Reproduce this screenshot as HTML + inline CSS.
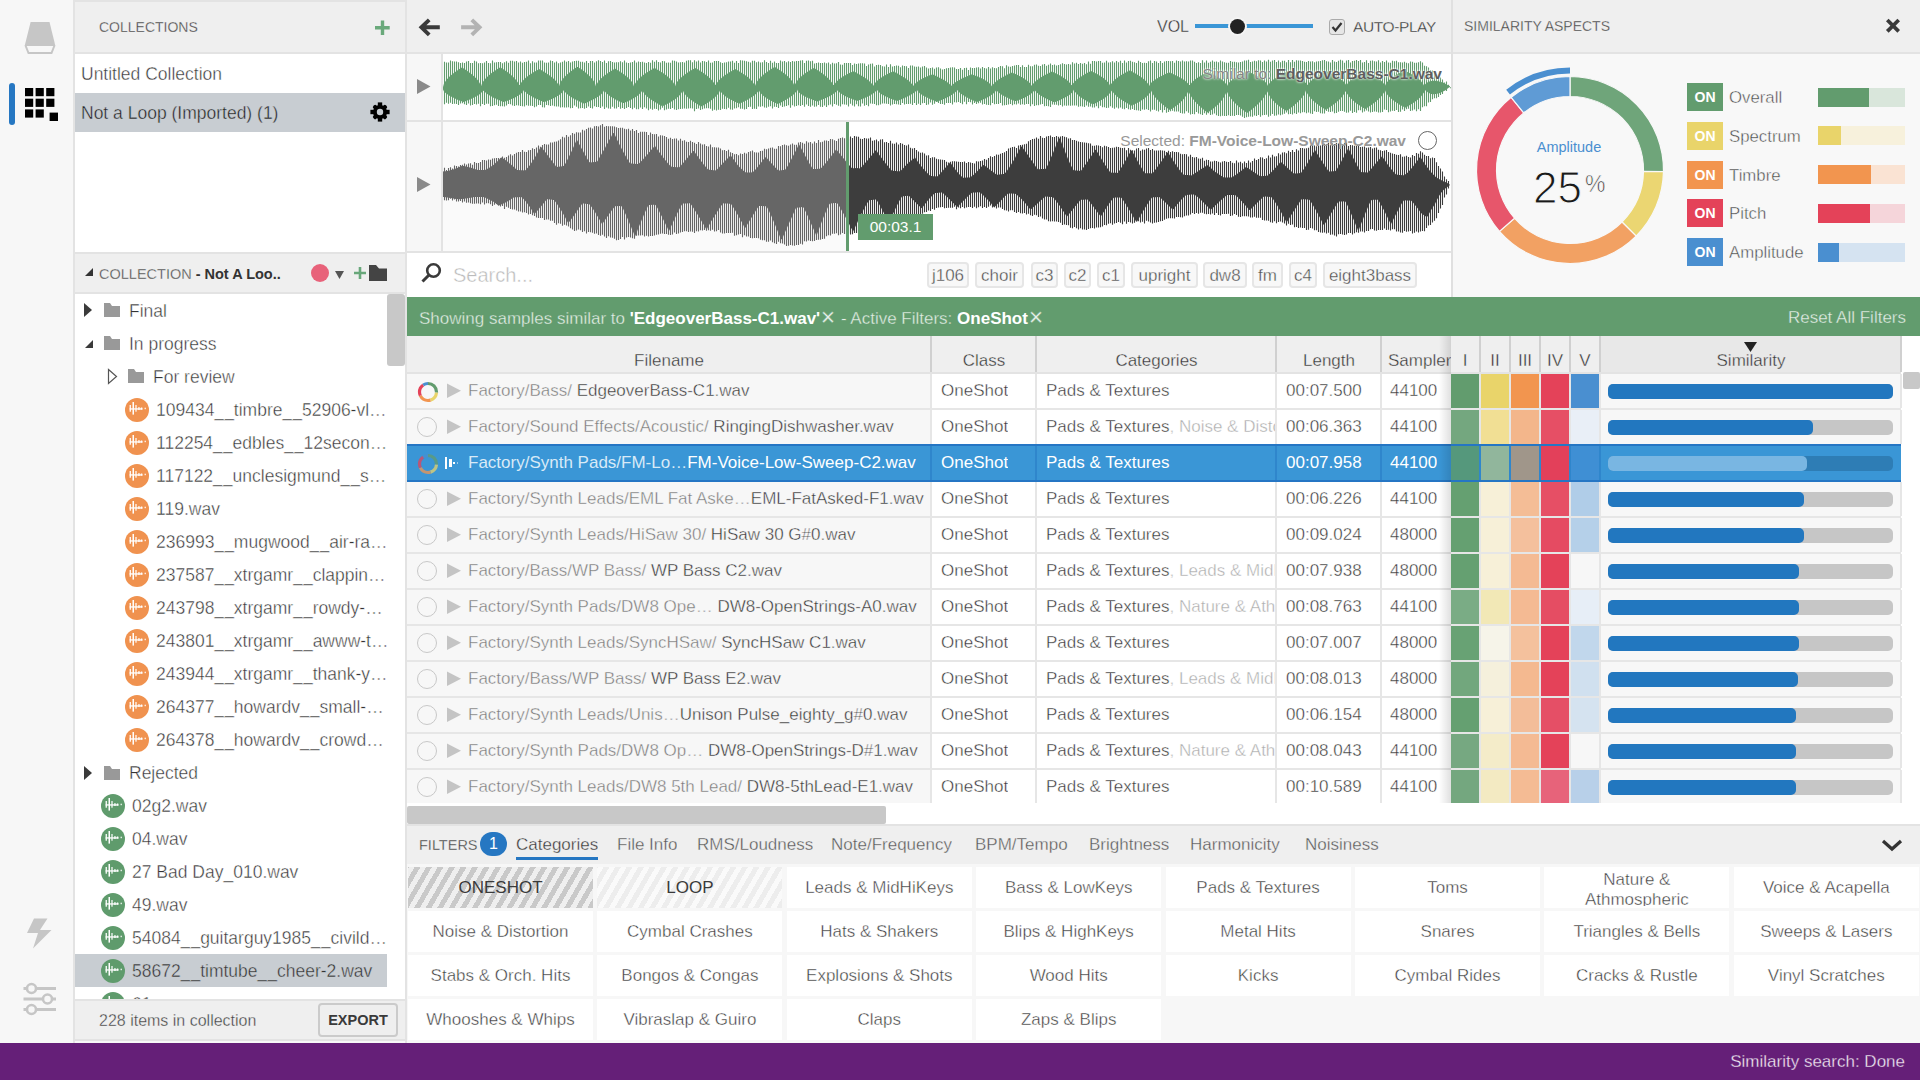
<!DOCTYPE html><html><head><meta charset="utf-8"><style>
*{box-sizing:border-box;margin:0;padding:0}
html,body{width:1920px;height:1080px;overflow:hidden;background:#f7f7f7;font-family:"Liberation Sans",sans-serif;color:#333}
.a{position:absolute}
.t{white-space:nowrap;overflow:hidden}
</style></head><body><div class="a" style="left:0;top:0;width:73px;height:1043px;background:#f7f7f7"></div>
<div class="a" style="left:73px;top:0;width:2px;height:1043px;background:#e3e3e3"></div>
<svg class="a" style="left:0;top:0" width="73" height="130"><path d="M30.6 22H49.5L55.4 46H24.6Z" fill="#c6c6c6"/><path d="M25.5 45.5L28.5 53H51.5L54.5 45.5" fill="none" stroke="#c6c6c6" stroke-width="2"/><rect x="9" y="83" width="6" height="42" rx="3" fill="#2677c2"/><rect x="25.0" y="88.0" width="8.2" height="8.2" fill="#000"/><rect x="35.6" y="88.0" width="8.2" height="8.2" fill="#000"/><rect x="46.2" y="88.0" width="8.2" height="8.2" fill="#000"/><rect x="25.0" y="98.7" width="8.2" height="8.2" fill="#000"/><rect x="35.6" y="98.7" width="8.2" height="8.2" fill="#000"/><rect x="46.2" y="98.7" width="8.2" height="8.2" fill="#000"/><rect x="25.0" y="109.4" width="8.2" height="8.2" fill="#000"/><rect x="35.6" y="109.4" width="8.2" height="8.2" fill="#000"/><rect x="49.6" y="112.6" width="8.4" height="8.4" fill="#000"/></svg>
<svg class="a" style="left:0;top:900px" width="73" height="130"><path d="M34 18.5H47.5L40 30H51.5L33 48.5L38 33H27Z" fill="#c6c6c6"/><g stroke="#c6c6c6" stroke-width="3" fill="none"><path d="M23.5 88.5H56M23.5 99H56M23.5 109.5H56"/></g><g fill="#f7f7f7" stroke="#c6c6c6" stroke-width="2.6"><circle cx="31.5" cy="88.5" r="4.5"/><circle cx="47.5" cy="99" r="4.5"/><circle cx="31.5" cy="109.5" r="4.5"/></g></svg>
<div class="a" style="left:75px;top:0;width:330px;height:2px;background:#e3e3e3"></div>
<div class="a" style="left:75px;top:2px;width:330px;height:50px;background:#efefef"></div>
<div class="a t" style="left:99px;top:2px;height:50px;line-height:50px;font-size:14px;color:#3a3a3a;-webkit-text-stroke:0.3px #efefef">COLLECTIONS</div>
<svg class="a" style="left:372px;top:18px" width="20" height="20"><path d="M10.5 2.5V17M3 9.8H17.7" stroke="#6aa97b" stroke-width="3.4"/></svg>
<div class="a" style="left:75px;top:52px;width:330px;height:2px;background:#e3e3e3"></div>
<div class="a" style="left:75px;top:54px;width:330px;height:198px;background:#fff"></div>
<div class="a t" style="left:81px;top:55px;height:39px;line-height:39px;font-size:17.5px;color:#333;-webkit-text-stroke:0.4px #fff">Untitled Collection</div>
<div class="a" style="left:75px;top:93px;width:330px;height:39px;background:#c8cdd2"></div>
<div class="a t" style="left:81px;top:94px;height:39px;line-height:39px;font-size:17.5px;color:#222;-webkit-text-stroke:0.4px #c8cdd2">Not a Loop (Imported) (1)</div>
<svg class="a" style="left:369px;top:101px" width="22" height="22" viewBox="0 0 22 22"><g transform="translate(11 11)" fill="#000"><rect x="-2.2" y="-9.6" width="4.4" height="5" transform="rotate(0)"/><rect x="-2.1" y="-8.9" width="4.2" height="5" rx="1.6" transform="rotate(45)"/><rect x="-2.2" y="-9.6" width="4.4" height="5" transform="rotate(90)"/><rect x="-2.1" y="-8.9" width="4.2" height="5" rx="1.6" transform="rotate(135)"/><rect x="-2.2" y="-9.6" width="4.4" height="5" transform="rotate(180)"/><rect x="-2.1" y="-8.9" width="4.2" height="5" rx="1.6" transform="rotate(225)"/><rect x="-2.2" y="-9.6" width="4.4" height="5" transform="rotate(270)"/><rect x="-2.1" y="-8.9" width="4.2" height="5" rx="1.6" transform="rotate(315)"/><circle r="7"/></g><circle cx="11" cy="11" r="3.2" fill="#c8cdd2"/></svg>
<div class="a" style="left:75px;top:252px;width:330px;height:2px;background:#e3e3e3"></div>
<div class="a" style="left:75px;top:254px;width:330px;height:38px;background:#efefef"></div>
<svg class="a" style="left:84px;top:267px" width="10" height="10"><path d="M9 1V9H1Z" fill="#333"/></svg>
<div class="a t" style="left:99px;top:255px;height:38px;line-height:38px;font-size:14.5px;color:#444;-webkit-text-stroke:0.3px #efefef">COLLECTION <b style="color:#333;-webkit-text-stroke:0">- Not A Loo..</b></div>
<svg class="a" style="left:300px;top:254px" width="105" height="38"><circle cx="20" cy="19" r="9" fill="#e8627a"/><path d="M35 17H44L39.5 25Z" fill="#555"/><path d="M60 13V25M54 19H66" stroke="#68a77a" stroke-width="2.6"/><path d="M69 11H76L79 14.5H87V27H69Z" fill="#444"/></svg>
<div class="a" style="left:75px;top:292px;width:330px;height:2px;background:#e3e3e3"></div>
<div class="a" style="left:75px;top:294px;width:330px;height:706px;background:#fff"></div>
<div class="a" style="left:387px;top:294px;width:18px;height:72px;background:#c8c8c8;border-radius:3px"></div>
<svg class="a" style="left:84px;top:303px" width="9" height="15"><path d="M0 0L8 7L0 14Z" fill="#3a3a3a"/></svg>
<svg class="a" style="left:104px;top:303px" width="16" height="14"><path d="M0 0H6L8 3H16V14H0Z" fill="#999"/></svg>
<div class="a t" style="left:129px;top:295px;height:33px;line-height:33px;font-size:17.5px;color:#333;-webkit-text-stroke:0.4px #fff">Final</div>
<svg class="a" style="left:84px;top:339px" width="10" height="10"><path d="M9 1V9H1Z" fill="#3a3a3a"/></svg>
<svg class="a" style="left:104px;top:336px" width="16" height="14"><path d="M0 0H6L8 3H16V14H0Z" fill="#999"/></svg>
<div class="a t" style="left:129px;top:328px;height:33px;line-height:33px;font-size:17.5px;color:#333;-webkit-text-stroke:0.4px #fff">In progress</div>
<svg class="a" style="left:107px;top:368px" width="11" height="17"><path d="M1.5 1.5L9.5 8.5L1.5 15.5Z" fill="none" stroke="#555" stroke-width="1.2"/></svg>
<svg class="a" style="left:128px;top:369px" width="16" height="14"><path d="M0 0H6L8 3H16V14H0Z" fill="#999"/></svg>
<div class="a t" style="left:153px;top:361px;height:33px;line-height:33px;font-size:17.5px;color:#333;-webkit-text-stroke:0.4px #fff">For review</div>
<svg class="a" style="left:125px;top:398px" width="24" height="24"><circle cx="12" cy="12" r="12" fill="#f0924f"/><g fill="#fff"><rect x="4.6" y="7" width="1.3" height="6.7"/><rect x="7.5" y="4" width="1.5" height="12.6"/><rect x="10.4" y="7" width="1.2" height="6.7"/><rect x="13.3" y="9.1" width="1.3" height="2.9"/><rect x="15.8" y="9.5" width="1.5" height="2.1"/><rect x="19.6" y="9.7" width="1.2" height="1.5"/><rect x="4.6" y="10.3" width="12.9" height="1.3"/></g></svg>
<div class="a t" style="left:156px;top:394px;width:232px;height:33px;line-height:33px;font-size:17.5px;color:#333;-webkit-text-stroke:0.4px #fff">109434__timbre__52906-vl…</div>
<svg class="a" style="left:125px;top:431px" width="24" height="24"><circle cx="12" cy="12" r="12" fill="#f0924f"/><g fill="#fff"><rect x="4.6" y="7" width="1.3" height="6.7"/><rect x="7.5" y="4" width="1.5" height="12.6"/><rect x="10.4" y="7" width="1.2" height="6.7"/><rect x="13.3" y="9.1" width="1.3" height="2.9"/><rect x="15.8" y="9.5" width="1.5" height="2.1"/><rect x="19.6" y="9.7" width="1.2" height="1.5"/><rect x="4.6" y="10.3" width="12.9" height="1.3"/></g></svg>
<div class="a t" style="left:156px;top:427px;width:232px;height:33px;line-height:33px;font-size:17.5px;color:#333;-webkit-text-stroke:0.4px #fff">112254__edbles__12secon…</div>
<svg class="a" style="left:125px;top:464px" width="24" height="24"><circle cx="12" cy="12" r="12" fill="#f0924f"/><g fill="#fff"><rect x="4.6" y="7" width="1.3" height="6.7"/><rect x="7.5" y="4" width="1.5" height="12.6"/><rect x="10.4" y="7" width="1.2" height="6.7"/><rect x="13.3" y="9.1" width="1.3" height="2.9"/><rect x="15.8" y="9.5" width="1.5" height="2.1"/><rect x="19.6" y="9.7" width="1.2" height="1.5"/><rect x="4.6" y="10.3" width="12.9" height="1.3"/></g></svg>
<div class="a t" style="left:156px;top:460px;width:232px;height:33px;line-height:33px;font-size:17.5px;color:#333;-webkit-text-stroke:0.4px #fff">117122__unclesigmund__s…</div>
<svg class="a" style="left:125px;top:497px" width="24" height="24"><circle cx="12" cy="12" r="12" fill="#f0924f"/><g fill="#fff"><rect x="4.6" y="7" width="1.3" height="6.7"/><rect x="7.5" y="4" width="1.5" height="12.6"/><rect x="10.4" y="7" width="1.2" height="6.7"/><rect x="13.3" y="9.1" width="1.3" height="2.9"/><rect x="15.8" y="9.5" width="1.5" height="2.1"/><rect x="19.6" y="9.7" width="1.2" height="1.5"/><rect x="4.6" y="10.3" width="12.9" height="1.3"/></g></svg>
<div class="a t" style="left:156px;top:493px;width:232px;height:33px;line-height:33px;font-size:17.5px;color:#333;-webkit-text-stroke:0.4px #fff">119.wav</div>
<svg class="a" style="left:125px;top:530px" width="24" height="24"><circle cx="12" cy="12" r="12" fill="#f0924f"/><g fill="#fff"><rect x="4.6" y="7" width="1.3" height="6.7"/><rect x="7.5" y="4" width="1.5" height="12.6"/><rect x="10.4" y="7" width="1.2" height="6.7"/><rect x="13.3" y="9.1" width="1.3" height="2.9"/><rect x="15.8" y="9.5" width="1.5" height="2.1"/><rect x="19.6" y="9.7" width="1.2" height="1.5"/><rect x="4.6" y="10.3" width="12.9" height="1.3"/></g></svg>
<div class="a t" style="left:156px;top:526px;width:232px;height:33px;line-height:33px;font-size:17.5px;color:#333;-webkit-text-stroke:0.4px #fff">236993__mugwood__air-ra…</div>
<svg class="a" style="left:125px;top:563px" width="24" height="24"><circle cx="12" cy="12" r="12" fill="#f0924f"/><g fill="#fff"><rect x="4.6" y="7" width="1.3" height="6.7"/><rect x="7.5" y="4" width="1.5" height="12.6"/><rect x="10.4" y="7" width="1.2" height="6.7"/><rect x="13.3" y="9.1" width="1.3" height="2.9"/><rect x="15.8" y="9.5" width="1.5" height="2.1"/><rect x="19.6" y="9.7" width="1.2" height="1.5"/><rect x="4.6" y="10.3" width="12.9" height="1.3"/></g></svg>
<div class="a t" style="left:156px;top:559px;width:232px;height:33px;line-height:33px;font-size:17.5px;color:#333;-webkit-text-stroke:0.4px #fff">237587__xtrgamr__clappin…</div>
<svg class="a" style="left:125px;top:596px" width="24" height="24"><circle cx="12" cy="12" r="12" fill="#f0924f"/><g fill="#fff"><rect x="4.6" y="7" width="1.3" height="6.7"/><rect x="7.5" y="4" width="1.5" height="12.6"/><rect x="10.4" y="7" width="1.2" height="6.7"/><rect x="13.3" y="9.1" width="1.3" height="2.9"/><rect x="15.8" y="9.5" width="1.5" height="2.1"/><rect x="19.6" y="9.7" width="1.2" height="1.5"/><rect x="4.6" y="10.3" width="12.9" height="1.3"/></g></svg>
<div class="a t" style="left:156px;top:592px;width:232px;height:33px;line-height:33px;font-size:17.5px;color:#333;-webkit-text-stroke:0.4px #fff">243798__xtrgamr__rowdy-…</div>
<svg class="a" style="left:125px;top:629px" width="24" height="24"><circle cx="12" cy="12" r="12" fill="#f0924f"/><g fill="#fff"><rect x="4.6" y="7" width="1.3" height="6.7"/><rect x="7.5" y="4" width="1.5" height="12.6"/><rect x="10.4" y="7" width="1.2" height="6.7"/><rect x="13.3" y="9.1" width="1.3" height="2.9"/><rect x="15.8" y="9.5" width="1.5" height="2.1"/><rect x="19.6" y="9.7" width="1.2" height="1.5"/><rect x="4.6" y="10.3" width="12.9" height="1.3"/></g></svg>
<div class="a t" style="left:156px;top:625px;width:232px;height:33px;line-height:33px;font-size:17.5px;color:#333;-webkit-text-stroke:0.4px #fff">243801__xtrgamr__awww-t…</div>
<svg class="a" style="left:125px;top:662px" width="24" height="24"><circle cx="12" cy="12" r="12" fill="#f0924f"/><g fill="#fff"><rect x="4.6" y="7" width="1.3" height="6.7"/><rect x="7.5" y="4" width="1.5" height="12.6"/><rect x="10.4" y="7" width="1.2" height="6.7"/><rect x="13.3" y="9.1" width="1.3" height="2.9"/><rect x="15.8" y="9.5" width="1.5" height="2.1"/><rect x="19.6" y="9.7" width="1.2" height="1.5"/><rect x="4.6" y="10.3" width="12.9" height="1.3"/></g></svg>
<div class="a t" style="left:156px;top:658px;width:232px;height:33px;line-height:33px;font-size:17.5px;color:#333;-webkit-text-stroke:0.4px #fff">243944__xtrgamr__thank-y…</div>
<svg class="a" style="left:125px;top:695px" width="24" height="24"><circle cx="12" cy="12" r="12" fill="#f0924f"/><g fill="#fff"><rect x="4.6" y="7" width="1.3" height="6.7"/><rect x="7.5" y="4" width="1.5" height="12.6"/><rect x="10.4" y="7" width="1.2" height="6.7"/><rect x="13.3" y="9.1" width="1.3" height="2.9"/><rect x="15.8" y="9.5" width="1.5" height="2.1"/><rect x="19.6" y="9.7" width="1.2" height="1.5"/><rect x="4.6" y="10.3" width="12.9" height="1.3"/></g></svg>
<div class="a t" style="left:156px;top:691px;width:232px;height:33px;line-height:33px;font-size:17.5px;color:#333;-webkit-text-stroke:0.4px #fff">264377__howardv__small-…</div>
<svg class="a" style="left:125px;top:728px" width="24" height="24"><circle cx="12" cy="12" r="12" fill="#f0924f"/><g fill="#fff"><rect x="4.6" y="7" width="1.3" height="6.7"/><rect x="7.5" y="4" width="1.5" height="12.6"/><rect x="10.4" y="7" width="1.2" height="6.7"/><rect x="13.3" y="9.1" width="1.3" height="2.9"/><rect x="15.8" y="9.5" width="1.5" height="2.1"/><rect x="19.6" y="9.7" width="1.2" height="1.5"/><rect x="4.6" y="10.3" width="12.9" height="1.3"/></g></svg>
<div class="a t" style="left:156px;top:724px;width:232px;height:33px;line-height:33px;font-size:17.5px;color:#333;-webkit-text-stroke:0.4px #fff">264378__howardv__crowd…</div>
<svg class="a" style="left:84px;top:766px" width="9" height="15"><path d="M0 0L8 7L0 14Z" fill="#3a3a3a"/></svg>
<svg class="a" style="left:104px;top:766px" width="16" height="14"><path d="M0 0H6L8 3H16V14H0Z" fill="#999"/></svg>
<div class="a t" style="left:129px;top:757px;height:33px;line-height:33px;font-size:17.5px;color:#333;-webkit-text-stroke:0.4px #fff">Rejected</div>
<svg class="a" style="left:101px;top:794px" width="24" height="24"><circle cx="12" cy="12" r="12" fill="#5f9b6c"/><g fill="#fff"><rect x="4.6" y="7" width="1.3" height="6.7"/><rect x="7.5" y="4" width="1.5" height="12.6"/><rect x="10.4" y="7" width="1.2" height="6.7"/><rect x="13.3" y="9.1" width="1.3" height="2.9"/><rect x="15.8" y="9.5" width="1.5" height="2.1"/><rect x="19.6" y="9.7" width="1.2" height="1.5"/><rect x="4.6" y="10.3" width="12.9" height="1.3"/></g></svg>
<div class="a t" style="left:132px;top:790px;width:256px;height:33px;line-height:33px;font-size:17.5px;color:#333;-webkit-text-stroke:0.4px #fff">02g2.wav</div>
<svg class="a" style="left:101px;top:827px" width="24" height="24"><circle cx="12" cy="12" r="12" fill="#5f9b6c"/><g fill="#fff"><rect x="4.6" y="7" width="1.3" height="6.7"/><rect x="7.5" y="4" width="1.5" height="12.6"/><rect x="10.4" y="7" width="1.2" height="6.7"/><rect x="13.3" y="9.1" width="1.3" height="2.9"/><rect x="15.8" y="9.5" width="1.5" height="2.1"/><rect x="19.6" y="9.7" width="1.2" height="1.5"/><rect x="4.6" y="10.3" width="12.9" height="1.3"/></g></svg>
<div class="a t" style="left:132px;top:823px;width:256px;height:33px;line-height:33px;font-size:17.5px;color:#333;-webkit-text-stroke:0.4px #fff">04.wav</div>
<svg class="a" style="left:101px;top:860px" width="24" height="24"><circle cx="12" cy="12" r="12" fill="#5f9b6c"/><g fill="#fff"><rect x="4.6" y="7" width="1.3" height="6.7"/><rect x="7.5" y="4" width="1.5" height="12.6"/><rect x="10.4" y="7" width="1.2" height="6.7"/><rect x="13.3" y="9.1" width="1.3" height="2.9"/><rect x="15.8" y="9.5" width="1.5" height="2.1"/><rect x="19.6" y="9.7" width="1.2" height="1.5"/><rect x="4.6" y="10.3" width="12.9" height="1.3"/></g></svg>
<div class="a t" style="left:132px;top:856px;width:256px;height:33px;line-height:33px;font-size:17.5px;color:#333;-webkit-text-stroke:0.4px #fff">27 Bad Day_010.wav</div>
<svg class="a" style="left:101px;top:893px" width="24" height="24"><circle cx="12" cy="12" r="12" fill="#5f9b6c"/><g fill="#fff"><rect x="4.6" y="7" width="1.3" height="6.7"/><rect x="7.5" y="4" width="1.5" height="12.6"/><rect x="10.4" y="7" width="1.2" height="6.7"/><rect x="13.3" y="9.1" width="1.3" height="2.9"/><rect x="15.8" y="9.5" width="1.5" height="2.1"/><rect x="19.6" y="9.7" width="1.2" height="1.5"/><rect x="4.6" y="10.3" width="12.9" height="1.3"/></g></svg>
<div class="a t" style="left:132px;top:889px;width:256px;height:33px;line-height:33px;font-size:17.5px;color:#333;-webkit-text-stroke:0.4px #fff">49.wav</div>
<svg class="a" style="left:101px;top:926px" width="24" height="24"><circle cx="12" cy="12" r="12" fill="#5f9b6c"/><g fill="#fff"><rect x="4.6" y="7" width="1.3" height="6.7"/><rect x="7.5" y="4" width="1.5" height="12.6"/><rect x="10.4" y="7" width="1.2" height="6.7"/><rect x="13.3" y="9.1" width="1.3" height="2.9"/><rect x="15.8" y="9.5" width="1.5" height="2.1"/><rect x="19.6" y="9.7" width="1.2" height="1.5"/><rect x="4.6" y="10.3" width="12.9" height="1.3"/></g></svg>
<div class="a t" style="left:132px;top:922px;width:256px;height:33px;line-height:33px;font-size:17.5px;color:#333;-webkit-text-stroke:0.4px #fff">54084__guitarguy1985__civild…</div>
<div class="a" style="left:75px;top:954px;width:312px;height:33px;background:#c8cdd2"></div>
<svg class="a" style="left:101px;top:959px" width="24" height="24"><circle cx="12" cy="12" r="12" fill="#5f9b6c"/><g fill="#fff"><rect x="4.6" y="7" width="1.3" height="6.7"/><rect x="7.5" y="4" width="1.5" height="12.6"/><rect x="10.4" y="7" width="1.2" height="6.7"/><rect x="13.3" y="9.1" width="1.3" height="2.9"/><rect x="15.8" y="9.5" width="1.5" height="2.1"/><rect x="19.6" y="9.7" width="1.2" height="1.5"/><rect x="4.6" y="10.3" width="12.9" height="1.3"/></g></svg>
<div class="a t" style="left:132px;top:955px;width:256px;height:33px;line-height:33px;font-size:17.5px;color:#333;-webkit-text-stroke:0.4px #c8cdd2">58672__timtube__cheer-2.wav</div>
<svg class="a" style="left:101px;top:992px" width="24" height="24"><circle cx="12" cy="12" r="12" fill="#5f9b6c"/><g fill="#fff"><rect x="4.6" y="7" width="1.3" height="6.7"/><rect x="7.5" y="4" width="1.5" height="12.6"/><rect x="10.4" y="7" width="1.2" height="6.7"/><rect x="13.3" y="9.1" width="1.3" height="2.9"/><rect x="15.8" y="9.5" width="1.5" height="2.1"/><rect x="19.6" y="9.7" width="1.2" height="1.5"/><rect x="4.6" y="10.3" width="12.9" height="1.3"/></g></svg>
<div class="a t" style="left:132px;top:988px;width:256px;height:33px;line-height:33px;font-size:17.5px;color:#333;-webkit-text-stroke:0.4px #fff">61.wav</div>
<div class="a" style="left:75px;top:999px;width:330px;height:2px;background:#e3e3e3"></div>
<div class="a" style="left:75px;top:1001px;width:330px;height:38px;background:#efefef"></div>
<div class="a" style="left:75px;top:1039px;width:330px;height:2px;background:#e3e3e3"></div>
<div class="a t" style="left:99px;top:1001px;height:40px;line-height:40px;font-size:16px;color:#3a3a3a;-webkit-text-stroke:0.35px #efefef">228 items in collection</div>
<div class="a" style="left:318px;top:1003px;width:80px;height:34px;border:2px solid #cbcbcb;background:#efefef;border-radius:4px;font-size:14.5px;font-weight:bold;color:#3a3a3a;line-height:31px;text-align:center">EXPORT</div>
<div class="a" style="left:405px;top:0;width:2px;height:1043px;background:#e3e3e3"></div>
<div class="a" style="left:407px;top:0;width:1044px;height:52px;background:#efefef"></div>
<svg class="a" style="left:415px;top:12.5px" width="75" height="30"><path d="M24.8 14.3H8M14.2 6.8L6.4 14.3L14.2 21.8" fill="none" stroke="#3a3a3a" stroke-width="3.9"/><path d="M46.1 14.3H63M56.8 6.8L64.6 14.3L56.8 21.8" fill="none" stroke="#b3b3b3" stroke-width="3.9"/></svg>
<div class="a t" style="left:1157px;top:1px;height:52px;line-height:52px;font-size:16px;color:#333;-webkit-text-stroke:0.3px #efefef">VOL</div>
<div class="a" style="left:1195px;top:24px;width:118px;height:4px;background:#3a96d6"></div>
<div class="a" style="left:1230px;top:19px;width:15px;height:15px;border-radius:50%;background:#222;box-shadow:0 0 0 2px #f4f4f4"></div>
<div class="a" style="left:1329px;top:19px;width:16px;height:16px;border:1px solid #aaa;border-radius:3px;background:#e6e6e6"></div>
<svg class="a" style="left:1329px;top:19px" width="16" height="16"><path d="M3.5 8L6.5 11.5L12.5 4" fill="none" stroke="#333" stroke-width="2.2"/></svg>
<div class="a t" style="left:1353px;top:1px;height:52px;line-height:52px;font-size:15.5px;letter-spacing:-0.4px;color:#333;-webkit-text-stroke:0.3px #efefef">AUTO-PLAY</div>
<div class="a" style="left:407px;top:52px;width:1044px;height:2px;background:#e3e3e3"></div>
<div class="a" style="left:407px;top:54px;width:34px;height:197px;background:#f7f7f7"></div>
<div class="a" style="left:441px;top:54px;width:2px;height:197px;background:#e3e3e3"></div>
<div class="a" style="left:443px;top:54px;width:1008px;height:66px;background:#fff"></div>
<div class="a" style="left:407px;top:120px;width:1044px;height:2px;background:#e3e3e3"></div>
<div class="a" style="left:443px;top:122px;width:404px;height:129px;background:#fafafa"></div>
<div class="a" style="left:847px;top:122px;width:604px;height:129px;background:#fff"></div>
<svg class="a" style="left:417px;top:79px" width="14" height="15"><path d="M0 0L13.5 7.5L0 15Z" fill="#8a8a8a"/></svg>
<svg class="a" style="left:417px;top:177px" width="14" height="15"><path d="M0 0L13.5 7.5L0 15Z" fill="#8a8a8a"/></svg>
<svg class="a" style="left:0;top:0" width="1920" height="260"><defs><clipPath id="cl"><rect x="443" y="120" width="404" height="140"/></clipPath><clipPath id="cr"><rect x="847" y="120" width="610" height="140"/></clipPath></defs><path d="M444.5 61.7V104.3M446.5 62.4V102.8M448.5 62.5V103.7M450.5 60.6V102.8M452.5 61.2V104.1M454.5 61.6V103.7M456.5 61.4V103.9M458.5 62.2V105.1M460.5 62.9V103.6M462.5 62.6V103.2M464.5 63.0V104.3M466.5 61.5V105.0M468.5 61.1V103.4M470.5 62.9V105.6M472.5 62.9V105.1M474.5 60.8V104.1M476.5 61.5V104.5M478.5 63.2V103.8M480.5 63.1V106.3M482.5 63.2V104.1M484.5 62.4V105.0M486.5 61.1V103.7M488.5 62.9V103.7M490.5 63.2V106.3M492.5 60.5V105.9M494.5 62.4V105.3M496.5 62.3V104.8M498.5 61.9V106.1M500.5 62.0V106.3M502.5 63.2V106.3M504.5 62.3V106.5M506.5 61.2V105.6M508.5 62.7V104.0M510.5 60.8V104.3M512.5 60.7V105.6M514.5 61.5V106.1M516.5 61.0V105.2M518.5 62.5V105.4M520.5 61.5V106.1M522.5 62.8V106.2M524.5 61.9V106.5M526.5 61.8V105.2M528.5 60.6V105.8M530.5 63.2V105.7M532.5 61.2V106.0M534.5 62.4V107.3M536.5 62.6V106.4M538.5 60.4V105.1M540.5 60.6V105.1M542.5 60.4V107.3M544.5 62.4V107.4M546.5 62.8V105.0M548.5 62.5V105.3M550.5 60.5V106.0M552.5 61.1V105.6M554.5 62.6V106.3M556.5 61.4V106.4M558.5 63.3V106.4M560.5 62.4V107.5M562.5 61.8V107.2M564.5 60.6V107.6M566.5 61.7V107.5M568.5 60.9V107.2M570.5 62.4V108.3M572.5 61.6V108.1M574.5 61.0V105.6M576.5 60.8V106.7M578.5 60.7V108.6M580.5 61.7V108.2M582.5 61.7V107.9M584.5 62.5V108.7M586.5 61.0V108.0M588.5 62.9V106.6M590.5 60.9V108.0M592.5 61.1V108.6M594.5 62.5V106.3M596.5 61.2V107.1M598.5 60.3V107.1M600.5 60.9V107.9M602.5 61.9V106.6M604.5 60.6V108.9M606.5 63.1V107.4M608.5 61.2V108.4M610.5 61.1V108.7M612.5 61.9V106.8M614.5 62.4V108.5M616.5 62.2V108.4M618.5 62.2V107.0M620.5 61.2V108.8M622.5 62.2V108.1M624.5 60.5V108.9M626.5 62.5V107.9M628.5 62.9V106.9M630.5 62.5V107.9M632.5 61.9V109.2M634.5 60.6V107.8M636.5 62.6V109.2M638.5 61.5V109.3M640.5 62.0V107.5M642.5 61.8V108.9M644.5 62.6V107.3M646.5 63.1V108.4M648.5 62.1V110.2M650.5 62.8V108.8M652.5 60.2V109.7M654.5 61.8V108.8M656.5 60.3V109.0M658.5 61.9V110.4M660.5 62.6V109.4M662.5 60.9V107.8M664.5 61.2V110.3M666.5 62.8V109.5M668.5 62.4V108.8M670.5 62.8V109.1M672.5 60.5V108.0M674.5 60.7V109.4M676.5 61.4V109.9M678.5 62.4V109.2M680.5 62.3V109.1M682.5 62.0V108.8M684.5 62.5V108.6M686.5 60.8V108.7M688.5 60.2V108.6M690.5 60.3V108.3M692.5 62.3V108.5M694.5 60.2V111.3M696.5 61.6V108.9M698.5 60.5V108.6M700.5 62.5V109.9M702.5 60.9V109.2M704.5 61.2V108.6M706.5 61.9V108.3M708.5 60.6V108.3M710.5 62.8V108.7M712.5 62.5V110.8M714.5 61.0V109.8M716.5 61.0V110.4M718.5 61.1V109.8M720.5 62.3V109.9M722.5 62.9V108.7M724.5 62.4V109.0M726.5 62.3V109.3M728.5 61.6V107.8M730.5 61.5V109.6M732.5 60.8V109.8M734.5 62.7V108.5M736.5 61.1V108.2M738.5 63.0V107.3M740.5 60.3V108.8M742.5 60.5V108.8M744.5 60.8V109.6M746.5 61.3V109.0M748.5 61.7V107.1M750.5 62.5V106.8M752.5 60.7V109.1M754.5 60.7V108.8M756.5 62.3V108.9M758.5 61.4V106.5M760.5 62.5V106.7M762.5 62.2V106.3M764.5 60.3V107.6M766.5 62.0V107.7M768.5 63.0V106.8M770.5 60.7V106.2M772.5 62.7V108.6M774.5 61.6V106.8M776.5 62.9V106.9M778.5 63.0V108.1M780.5 60.6V105.6M782.5 61.6V107.1M784.5 60.9V106.4M786.5 62.3V105.9M788.5 61.3V105.2M790.5 62.1V107.8M792.5 61.1V105.3M794.5 61.6V106.4M796.5 60.9V106.0M798.5 60.9V105.3M800.5 60.4V106.1M802.5 60.2V105.1M804.5 63.1V106.8M806.5 60.8V104.4M808.5 60.5V106.0M810.5 61.2V106.7M812.5 60.7V105.6M814.5 63.4V106.7M816.5 63.0V106.6M818.5 62.5V105.0M820.5 62.9V106.8M822.5 63.0V106.9M824.5 62.4V105.6M826.5 63.3V107.0M828.5 62.4V105.3M830.5 64.3V104.4M832.5 62.7V106.5M834.5 63.4V104.0M836.5 63.2V104.7M838.5 62.1V105.8M840.5 64.6V106.6M842.5 64.7V104.3M844.5 63.0V104.5M846.5 63.1V104.8M848.5 63.0V106.5M850.5 62.9V103.8M852.5 65.0V105.4M854.5 63.4V106.4M856.5 64.1V104.3M858.5 63.4V106.3M860.5 63.3V106.4M862.5 63.3V103.5M864.5 63.6V105.8M866.5 66.0V104.9M868.5 64.4V106.2M870.5 63.7V103.6M872.5 63.6V103.7M874.5 66.4V103.9M876.5 65.0V105.2M878.5 64.7V105.3M880.5 65.1V104.6M882.5 66.3V103.6M884.5 66.5V103.5M886.5 64.5V103.7M888.5 67.1V104.1M890.5 64.3V105.4M892.5 66.4V104.4M894.5 66.0V104.1M896.5 65.5V104.2M898.5 65.7V104.5M900.5 67.3V105.1M902.5 65.6V103.0M904.5 65.9V104.5M906.5 66.3V103.9M908.5 68.0V104.1M910.5 65.4V103.7M912.5 65.4V105.0M914.5 66.4V103.0M916.5 66.7V104.9M918.5 66.4V103.8M920.5 67.6V104.9M922.5 66.4V103.3M924.5 66.1V103.1M926.5 67.5V104.9M928.5 68.5V104.6M930.5 68.1V102.4M932.5 67.6V104.7M934.5 68.8V103.8M936.5 67.4V102.0M938.5 67.3V103.1M940.5 68.4V103.9M942.5 69.6V103.9M944.5 69.0V104.8M946.5 68.3V103.0M948.5 67.9V103.0M950.5 67.6V102.9M952.5 67.2V104.5M954.5 67.5V102.3M956.5 68.9V102.4M958.5 69.0V102.1M960.5 67.9V103.1M962.5 69.7V104.3M964.5 67.9V101.8M966.5 67.8V104.3M968.5 69.9V102.1M970.5 67.6V102.3M972.5 68.1V104.4M974.5 68.0V103.1M976.5 67.5V104.0M978.5 67.3V103.3M980.5 68.6V102.7M982.5 66.9V104.4M984.5 68.1V104.1M986.5 68.6V104.8M988.5 66.9V105.0M990.5 68.5V105.3M992.5 67.3V103.0M994.5 68.0V104.2M996.5 68.3V104.0M998.5 66.9V104.1M1000.5 66.1V102.9M1002.5 66.3V105.4M1004.5 68.3V105.3M1006.5 65.2V104.9M1008.5 66.5V104.6M1010.5 66.7V104.1M1012.5 65.9V105.2M1014.5 65.4V104.3M1016.5 64.9V104.5M1018.5 65.1V103.5M1020.5 67.1V104.8M1022.5 65.2V104.2M1024.5 67.1V104.8M1026.5 67.1V103.9M1028.5 64.7V104.1M1030.5 66.2V106.2M1032.5 66.2V104.2M1034.5 64.8V105.9M1036.5 64.5V105.2M1038.5 65.8V105.2M1040.5 65.9V104.6M1042.5 64.6V104.0M1044.5 63.9V106.2M1046.5 65.7V106.1M1048.5 64.8V106.3M1050.5 63.5V107.0M1052.5 65.1V104.6M1054.5 64.6V104.7M1056.5 65.4V104.7M1058.5 65.0V105.5M1060.5 64.3V105.1M1062.5 63.2V106.5M1064.5 63.9V105.5M1066.5 64.6V105.7M1068.5 64.1V105.6M1070.5 64.4V105.7M1072.5 62.2V105.6M1074.5 63.6V105.6M1076.5 62.7V105.4M1078.5 63.9V106.7M1080.5 63.1V106.2M1082.5 63.8V106.5M1084.5 63.0V106.9M1086.5 64.2V105.6M1088.5 61.5V106.7M1090.5 63.8V106.5M1092.5 60.9V107.4M1094.5 60.9V107.4M1096.5 61.6V106.3M1098.5 60.9V108.3M1100.5 61.1V105.8M1102.5 62.8V107.2M1104.5 62.5V107.3M1106.5 60.7V107.9M1108.5 62.6V107.7M1110.5 62.3V106.3M1112.5 61.2V107.7M1114.5 62.4V108.7M1116.5 61.0V107.6M1118.5 62.2V108.5M1120.5 60.7V107.4M1122.5 63.0V108.7M1124.5 60.5V109.3M1126.5 62.5V108.1M1128.5 61.0V109.2M1130.5 60.7V109.8M1132.5 61.8V108.9M1134.5 62.3V109.9M1136.5 63.0V110.3M1138.5 60.7V110.4M1140.5 62.1V111.0M1142.5 63.0V109.6M1144.5 62.8V109.7M1146.5 63.1V109.3M1148.5 61.2V109.9M1150.5 60.5V111.5M1152.5 63.1V109.7M1154.5 61.1V109.7M1156.5 61.4V110.8M1158.5 63.0V111.6M1160.5 61.0V110.1M1162.5 62.9V112.4M1164.5 61.5V109.9M1166.5 61.0V112.7M1168.5 61.1V112.0M1170.5 61.3V111.2M1172.5 60.9V110.7M1174.5 62.7V111.5M1176.5 60.5V111.5M1178.5 61.1V111.6M1180.5 61.4V113.1M1182.5 60.6V113.5M1184.5 61.6V113.6M1186.5 61.2V111.3M1188.5 61.5V112.7M1190.5 60.6V114.4M1192.5 60.6V114.0M1194.5 61.7V114.3M1196.5 63.0V112.1M1198.5 62.3V113.4M1200.5 63.0V114.2M1202.5 60.2V115.0M1204.5 62.5V113.3M1206.5 60.6V114.7M1208.5 62.8V113.3M1210.5 61.8V115.1M1212.5 60.5V114.6M1214.5 61.7V113.5M1216.5 61.5V115.2M1218.5 62.3V115.9M1220.5 60.4V116.2M1222.5 61.5V115.7M1224.5 62.2V116.1M1226.5 62.7V116.1M1228.5 62.7V115.3M1230.5 60.9V116.0M1232.5 61.8V115.7M1234.5 61.7V115.9M1236.5 62.3V115.1M1238.5 62.4V114.9M1240.5 61.9V115.4M1242.5 61.5V116.7M1244.5 60.4V118.0M1246.5 60.6V117.2M1248.5 59.8V116.7M1250.5 62.1V116.5M1252.5 61.5V116.8M1254.5 60.8V115.4M1256.5 61.3V116.1M1258.5 60.2V115.1M1260.5 60.4V116.8M1262.5 61.9V115.2M1264.5 60.5V115.1M1266.5 61.4V114.7M1268.5 59.8V116.8M1270.5 61.7V115.8M1272.5 60.6V114.1M1274.5 59.9V115.8M1276.5 61.9V115.5M1278.5 60.4V114.4M1280.5 62.2V115.3M1282.5 60.7V114.5M1284.5 60.7V113.8M1286.5 62.2V112.6M1288.5 60.1V114.2M1290.5 62.2V114.1M1292.5 60.0V114.6M1294.5 61.8V113.2M1296.5 60.2V114.1M1298.5 60.6V112.6M1300.5 60.6V113.2M1302.5 61.1V112.3M1304.5 61.8V112.2M1306.5 62.0V113.3M1308.5 61.1V112.4M1310.5 61.5V113.5M1312.5 61.3V114.0M1314.5 62.2V111.2M1316.5 61.4V112.0M1318.5 61.2V111.8M1320.5 61.1V113.3M1322.5 60.2V113.5M1324.5 59.9V113.4M1326.5 61.2V111.0M1328.5 61.6V111.7M1330.5 62.4V112.0M1332.5 60.0V111.5M1334.5 61.4V113.2M1336.5 62.1V113.1M1338.5 60.8V111.8M1340.5 59.8V111.1M1342.5 60.5V111.0M1344.5 62.8V111.8M1346.5 60.5V112.7M1348.5 60.0V112.4M1350.5 62.4V110.8M1352.5 61.0V112.9M1354.5 60.7V112.1M1356.5 60.1V112.7M1358.5 61.0V110.3M1360.5 60.1V110.3M1362.5 62.6V112.5M1364.5 62.1V111.6M1366.5 60.3V110.6M1368.5 63.0V111.5M1370.5 60.8V112.4M1372.5 60.5V112.1M1374.5 61.3V111.5M1376.5 61.4V111.8M1378.5 60.2V112.5M1380.5 62.6V112.4M1382.5 61.1V111.9M1384.5 62.0V109.6M1386.5 60.4V110.1M1388.5 62.4V112.3M1390.5 62.7V111.4M1392.5 60.7V110.8M1394.5 61.2V110.9M1396.5 60.8V109.9M1398.5 62.3V111.9M1400.5 62.2V111.8M1402.5 62.4V109.5M1404.5 61.8V110.9M1406.5 62.8V109.3M1408.5 63.2V108.8M1410.5 61.5V110.9M1412.5 61.7V110.4M1414.5 62.8V109.6M1416.5 62.7V111.2M1418.5 62.3V109.3M1420.5 61.2V111.0M1422.5 62.6V107.3M1424.5 65.8V106.3M1426.5 66.2V106.3M1428.5 67.5V102.5M1430.5 70.3V102.0M1432.5 70.6V99.3M1434.5 72.0V98.3M1436.5 74.4V98.3M1438.5 77.7V97.1M1440.5 77.4V95.1M1442.5 79.6V93.9M1444.5 82.6V90.2M1446.5 81.5V91.0M1448.5 84.8V87.1M1450.5 87.3V88.2" stroke="#629c6e" stroke-width="1.1" fill="none"/><path d="M443 86.9L444 83.6L445 81.9L446 80.5L447 79.2L448 78.2L449 77.1L450 76.2L451 75.3L452 74.5L453 73.6L454 72.9L455 72.1L456 71.4L457 70.7L458 70.0L459 69.3L460 68.7L461 68.0L462 67.4L463 68.1L464 68.7L465 69.4L466 70.0L467 70.7L468 71.4L469 72.2L470 72.9L471 73.7L472 74.5L473 75.4L474 76.3L475 77.2L476 78.2L477 79.3L478 80.5L479 81.9L480 83.7L481 86.3L482 83.5L483 81.8L484 80.4L485 79.2L486 78.1L487 77.1L488 76.2L489 75.3L490 74.4L491 73.6L492 72.8L493 72.1L494 71.4L495 70.7L496 70.0L497 69.3L498 68.7L499 68.0L500 67.4L501 67.8L502 68.4L503 69.1L504 69.7L505 70.4L506 71.1L507 71.8L508 72.6L509 73.3L510 74.1L511 75.0L512 75.8L513 76.7L514 77.7L515 78.8L516 79.9L517 81.2L518 82.8L519 84.9L520 84.7L521 83.0L522 81.6L523 80.5L524 79.5L525 78.5L526 77.6L527 76.8L528 76.1L529 75.3L530 74.6L531 73.9L532 73.3L533 72.6L534 72.0L535 71.4L536 70.8L537 70.2L538 69.7L539 69.1L540 69.5L541 70.0L542 70.6L543 71.2L544 71.8L545 72.4L546 73.0L547 73.7L548 74.4L549 75.1L550 75.8L551 76.6L552 77.4L553 78.2L554 79.1L555 80.1L556 81.2L557 82.4L558 84.0L559 86.2L560 83.2L561 81.4L562 80.0L563 78.7L564 77.6L565 76.5L566 75.5L567 74.6L568 73.7L569 72.9L570 72.0L571 71.3L572 70.5L573 69.8L574 69.0L575 68.3L576 67.7L577 67.0L578 67.1L579 67.7L580 68.4L581 69.1L582 69.8L583 70.6L584 71.3L585 72.1L586 72.9L587 73.8L588 74.7L589 75.6L590 76.6L591 77.7L592 78.8L593 80.1L594 81.6L595 83.4L596 86.6L597 83.7L598 82.1L599 80.8L600 79.7L601 78.6L602 77.7L603 76.8L604 76.0L605 75.2L606 74.4L607 73.7L608 73.0L609 72.3L610 71.7L611 71.0L612 70.4L613 69.8L614 69.2L615 68.6L616 69.2L617 69.8L618 70.4L619 71.0L620 71.7L621 72.3L622 73.0L623 73.7L624 74.4L625 75.2L626 76.0L627 76.8L628 77.7L629 78.6L630 79.7L631 80.8L632 82.1L633 83.7L634 86.5L635 83.8L636 82.2L637 80.9L638 79.7L639 78.7L640 77.8L641 76.9L642 76.1L643 75.3L644 74.6L645 73.8L646 73.1L647 72.5L648 71.8L649 71.2L650 70.6L651 70.0L652 69.4L653 68.8L654 68.2L655 68.2L656 68.8L657 69.4L658 69.9L659 70.6L660 71.2L661 71.8L662 72.5L663 73.1L664 73.8L665 74.5L666 75.3L667 76.1L668 76.9L669 77.8L670 78.7L671 79.7L672 80.8L673 82.1L674 83.7L675 86.6L676 83.7L677 82.1L678 80.8L679 79.7L680 78.6L681 77.7L682 76.8L683 76.0L684 75.2L685 74.4L686 73.7L687 73.0L688 72.3L689 71.7L690 71.0L691 70.4L692 69.8L693 69.2L694 68.7L695 68.1L696 68.5L697 69.0L698 69.6L699 70.2L700 70.8L701 71.5L702 72.1L703 72.8L704 73.5L705 74.2L706 74.9L707 75.7L708 76.5L709 77.4L710 78.3L711 79.3L712 80.4L713 81.6L714 83.1L715 85.1L716 84.5L717 82.8L718 81.4L719 80.3L720 79.3L721 78.4L722 77.5L723 76.7L724 76.0L725 75.2L726 74.5L727 73.9L728 73.2L729 72.6L730 72.0L731 71.4L732 70.8L733 70.2L734 69.7L735 69.1L736 69.5L737 70.1L738 70.6L739 71.2L740 71.8L741 72.4L742 73.0L743 73.7L744 74.4L745 75.1L746 75.8L747 76.5L748 77.3L749 78.2L750 79.1L751 80.1L752 81.1L753 82.4L754 84.0L755 85.9L756 83.2L757 81.6L758 80.2L759 79.0L760 77.9L761 76.9L762 76.0L763 75.1L764 74.3L765 73.5L766 72.7L767 72.0L768 71.3L769 70.6L770 69.9L771 69.2L772 68.6L773 68.0L774 67.3L775 67.1L776 67.7L777 68.4L778 69.0L779 69.7L780 70.3L781 71.0L782 71.7L783 72.5L784 73.2L785 74.0L786 74.8L787 75.7L788 76.6L789 77.6L790 78.6L791 79.8L792 81.1L793 82.6L794 84.7L795 84.4L796 82.5L797 81.0L798 79.8L799 78.6L800 77.6L801 76.7L802 75.8L803 75.0L804 74.2L805 73.5L806 72.8L807 72.1L808 71.4L809 70.8L810 70.2L811 69.6L812 69.0L813 68.4L814 67.9L815 68.5L816 69.2L817 69.8L818 70.5L819 71.1L820 71.8L821 72.5L822 73.2L823 74.0L824 74.8L825 75.5L826 76.4L827 77.3L828 78.2L829 79.2L830 80.2L831 81.4L832 82.8L833 84.7L834 85.1L835 83.4L836 82.2L837 81.2L838 80.2L839 79.4L840 78.6L841 77.9L842 77.3L843 76.6L844 76.0L845 75.4L846 74.9L847 74.3L848 73.8L849 73.3L850 72.8L851 72.3L852 71.9L853 71.4L854 71.6L855 72.1L856 72.6L857 73.2L858 73.7L859 74.3L860 74.8L861 75.4L862 76.0L863 76.6L864 77.2L865 77.9L866 78.6L867 79.3L868 80.1L869 80.9L870 81.8L871 82.8L872 84.1L873 85.9L874 84.6L875 83.1L876 81.9L877 81.0L878 80.1L879 79.3L880 78.5L881 77.8L882 77.2L883 76.5L884 75.9L885 75.4L886 74.8L887 74.3L888 73.8L889 73.3L890 72.8L891 72.3L892 71.9L893 71.5L894 71.7L895 72.2L896 72.8L897 73.3L898 73.8L899 74.4L900 75.0L901 75.5L902 76.2L903 76.8L904 77.4L905 78.1L906 78.8L907 79.5L908 80.2L909 81.1L910 82.0L911 83.0L912 84.2L913 85.9L914 85.1L915 83.8L916 82.8L917 82.0L918 81.3L919 80.6L920 80.0L921 79.4L922 78.8L923 78.3L924 77.8L925 77.3L926 76.9L927 76.4L928 76.0L929 75.6L930 75.2L931 74.9L932 74.5L933 74.6L934 75.1L935 75.5L936 76.0L937 76.5L938 77.0L939 77.4L940 77.9L941 78.5L942 79.0L943 79.5L944 80.1L945 80.7L946 81.3L947 82.0L948 82.7L949 83.5L950 84.5L951 85.8L952 85.6L953 84.3L954 83.4L955 82.6L956 81.9L957 81.3L958 80.7L959 80.2L960 79.7L961 79.1L962 78.6L963 78.1L964 77.6L965 77.2L966 76.7L967 76.3L968 75.9L969 75.4L970 75.0L971 74.6L972 74.4L973 74.8L974 75.2L975 75.5L976 75.9L977 76.3L978 76.7L979 77.2L980 77.6L981 78.1L982 78.6L983 79.1L984 79.6L985 80.2L986 80.8L987 81.4L988 82.1L989 82.9L990 83.8L991 84.9L992 86.5L993 84.5L994 83.4L995 82.4L996 81.5L997 80.7L998 80.0L999 79.4L1000 78.7L1001 78.1L1002 77.5L1003 76.9L1004 76.4L1005 75.9L1006 75.3L1007 74.8L1008 74.3L1009 73.8L1010 73.4L1011 72.9L1012 72.6L1013 73.0L1014 73.4L1015 73.8L1016 74.3L1017 74.8L1018 75.2L1019 75.7L1020 76.2L1021 76.8L1022 77.3L1023 77.9L1024 78.5L1025 79.2L1026 79.9L1027 80.6L1028 81.4L1029 82.3L1030 83.3L1031 84.7L1032 85.9L1033 84.1L1034 82.8L1035 81.8L1036 80.9L1037 80.1L1038 79.4L1039 78.7L1040 78.0L1041 77.3L1042 76.7L1043 76.1L1044 75.5L1045 75.0L1046 74.4L1047 73.9L1048 73.4L1049 72.9L1050 72.4L1051 71.9L1052 71.6L1053 72.1L1054 72.5L1055 73.0L1056 73.5L1057 74.0L1058 74.5L1059 75.0L1060 75.6L1061 76.1L1062 76.7L1063 77.4L1064 78.0L1065 78.7L1066 79.4L1067 80.2L1068 81.1L1069 82.1L1070 83.2L1071 84.7L1072 85.3L1073 83.6L1074 82.4L1075 81.3L1076 80.4L1077 79.6L1078 78.8L1079 78.0L1080 77.3L1081 76.7L1082 76.0L1083 75.4L1084 74.8L1085 74.2L1086 73.6L1087 73.1L1088 72.6L1089 72.0L1090 71.5L1091 71.0L1092 71.5L1093 72.0L1094 72.5L1095 73.0L1096 73.5L1097 74.1L1098 74.6L1099 75.2L1100 75.8L1101 76.5L1102 77.1L1103 77.8L1104 78.6L1105 79.4L1106 80.2L1107 81.2L1108 82.3L1109 83.6L1110 85.5L1111 84.3L1112 82.8L1113 81.6L1114 80.6L1115 79.6L1116 78.8L1117 78.0L1118 77.3L1119 76.6L1120 75.9L1121 75.3L1122 74.6L1123 74.0L1124 73.4L1125 72.9L1126 72.3L1127 71.8L1128 71.3L1129 70.7L1130 70.6L1131 71.1L1132 71.6L1133 72.2L1134 72.7L1135 73.3L1136 73.8L1137 74.4L1138 75.0L1139 75.7L1140 76.3L1141 77.0L1142 77.8L1143 78.5L1144 79.4L1145 80.3L1146 81.3L1147 82.4L1148 83.8L1149 86.3L1150 84.3L1151 83.0L1152 82.1L1153 81.2L1154 80.5L1155 79.7L1156 79.1L1157 78.4L1158 77.9L1159 77.3L1160 76.7L1161 76.2L1162 75.7L1163 75.2L1164 74.7L1165 74.2L1166 73.8L1167 73.3L1168 72.9L1169 72.5L1170 72.7L1171 73.1L1172 73.5L1173 74.0L1174 74.4L1175 74.9L1176 75.4L1177 75.9L1178 76.4L1179 76.9L1180 77.5L1181 78.1L1182 78.7L1183 79.3L1184 80.0L1185 80.7L1186 81.5L1187 82.4L1188 83.5L1189 84.9L1190 84.9L1191 83.4L1192 82.2L1193 81.2L1194 80.4L1195 79.6L1196 78.8L1197 78.1L1198 77.5L1199 76.9L1200 76.3L1201 75.7L1202 75.1L1203 74.6L1204 74.0L1205 73.5L1206 73.0L1207 72.5L1208 72.1L1209 72.3L1210 72.7L1211 73.2L1212 73.7L1213 74.2L1214 74.8L1215 75.3L1216 75.9L1217 76.4L1218 77.1L1219 77.7L1220 78.4L1221 79.1L1222 79.8L1223 80.7L1224 81.6L1225 82.6L1226 83.9L1227 86.0L1228 84.1L1229 82.8L1230 81.8L1231 80.9L1232 80.0L1233 79.3L1234 78.6L1235 77.9L1236 77.2L1237 76.6L1238 76.0L1239 75.5L1240 74.9L1241 74.4L1242 73.9L1243 73.4L1244 72.9L1245 72.4L1246 71.9L1247 71.5L1248 71.5L1249 71.9L1250 72.4L1251 72.9L1252 73.3L1253 73.8L1254 74.4L1255 74.9L1256 75.4L1257 76.0L1258 76.6L1259 77.2L1260 77.8L1261 78.5L1262 79.2L1263 80.0L1264 80.8L1265 81.7L1266 82.7L1267 84.1L1268 86.0L1269 83.9L1270 82.6L1271 81.6L1272 80.7L1273 79.9L1274 79.1L1275 78.4L1276 77.7L1277 77.1L1278 76.5L1279 75.9L1280 75.3L1281 74.8L1282 74.2L1283 73.7L1284 73.2L1285 72.7L1286 72.2L1287 71.8L1288 71.6L1289 72.1L1290 72.5L1291 73.0L1292 73.5L1293 74.0L1294 74.5L1295 75.1L1296 75.6L1297 76.2L1298 76.8L1299 77.4L1300 78.1L1301 78.8L1302 79.5L1303 80.3L1304 81.2L1305 82.2L1306 83.3L1307 84.9L1308 84.6L1309 83.1L1310 82.0L1311 81.0L1312 80.1L1313 79.3L1314 78.6L1315 77.9L1316 77.2L1317 76.6L1318 76.0L1319 75.4L1320 74.8L1321 74.3L1322 73.8L1323 73.2L1324 72.7L1325 72.3L1326 71.8L1327 71.4L1328 71.8L1329 72.3L1330 72.8L1331 73.3L1332 73.8L1333 74.4L1334 74.9L1335 75.5L1336 76.1L1337 76.7L1338 77.3L1339 78.0L1340 78.7L1341 79.4L1342 80.2L1343 81.1L1344 82.1L1345 83.3L1346 84.8L1347 84.6L1348 83.0L1349 81.9L1350 80.8L1351 79.9L1352 79.1L1353 78.3L1354 77.6L1355 76.9L1356 76.3L1357 75.7L1358 75.1L1359 74.5L1360 73.9L1361 73.4L1362 72.9L1363 72.4L1364 71.9L1365 71.4L1366 71.2L1367 71.7L1368 72.2L1369 72.7L1370 73.2L1371 73.8L1372 74.4L1373 74.9L1374 75.5L1375 76.1L1376 76.8L1377 77.5L1378 78.2L1379 78.9L1380 79.7L1381 80.6L1382 81.5L1383 82.6L1384 84.0L1385 85.7L1386 83.6L1387 82.2L1388 81.1L1389 80.2L1390 79.3L1391 78.5L1392 77.7L1393 77.0L1394 76.3L1395 75.7L1396 75.1L1397 74.5L1398 73.9L1399 73.3L1400 72.8L1401 72.2L1402 71.7L1403 71.2L1404 70.7L1405 70.7L1406 71.2L1407 71.7L1408 72.2L1409 72.8L1410 73.3L1411 73.9L1412 74.5L1413 75.1L1414 75.7L1415 76.3L1416 77.0L1417 77.7L1418 78.5L1419 79.3L1420 80.1L1421 81.3L1422 82.4L1423 83.7L1424 85.5L1425 84.5L1426 83.4L1427 82.7L1428 82.1L1429 81.7L1430 81.3L1431 81.1L1432 80.9L1433 80.8L1434 80.8L1435 80.8L1436 80.9L1437 81.0L1438 81.2L1439 81.4L1440 81.7L1441 81.9L1442 82.3L1443 82.6L1444 83.0L1445 83.6L1446 84.2L1447 84.8L1448 85.3L1449 85.8L1450 86.2L1450 86.9L1449 87.5L1448 88.2L1447 88.9L1446 89.7L1445 90.5L1444 91.1L1443 91.6L1442 92.1L1441 92.5L1440 92.9L1439 93.3L1438 93.6L1437 93.8L1436 94.0L1435 94.1L1434 94.2L1433 94.2L1432 94.1L1431 93.9L1430 93.6L1429 93.1L1428 92.5L1427 91.6L1426 90.2L1425 90.8L1424 92.4L1423 93.8L1422 95.2L1421 96.4L1420 97.7L1419 98.6L1418 99.4L1417 100.2L1416 100.9L1415 101.7L1414 102.4L1413 103.1L1412 103.7L1411 104.4L1410 105.0L1409 105.6L1408 106.2L1407 106.8L1406 107.4L1405 107.6L1404 107.1L1403 106.6L1402 106.0L1401 105.4L1400 104.9L1399 104.3L1398 103.6L1397 103.0L1396 102.3L1395 101.6L1394 100.9L1393 100.1L1392 99.3L1391 98.5L1390 97.6L1389 96.6L1388 95.5L1387 94.2L1386 92.7L1385 90.3L1384 92.4L1383 94.1L1382 95.5L1381 96.7L1380 97.8L1379 98.8L1378 99.7L1377 100.6L1376 101.4L1375 102.3L1374 103.0L1373 103.8L1372 104.5L1371 105.2L1370 105.9L1369 106.6L1368 107.3L1367 107.9L1366 108.6L1365 108.9L1364 108.3L1363 107.7L1362 107.1L1361 106.4L1360 105.8L1359 105.1L1358 104.4L1357 103.7L1356 102.9L1355 102.2L1354 101.3L1353 100.5L1352 99.6L1351 98.6L1350 97.5L1349 96.4L1348 95.1L1347 93.5L1346 91.3L1345 92.0L1344 93.9L1343 95.4L1342 96.7L1341 97.9L1340 98.9L1339 99.9L1338 100.8L1337 101.7L1336 102.5L1335 103.4L1334 104.1L1333 104.9L1332 105.6L1331 106.4L1330 107.1L1329 107.8L1328 108.4L1327 109.1L1326 109.7L1325 109.3L1324 108.7L1323 108.1L1322 107.4L1321 106.8L1320 106.1L1319 105.4L1318 104.6L1317 103.9L1316 103.1L1315 102.3L1314 101.4L1313 100.5L1312 99.5L1311 98.5L1310 97.4L1309 96.1L1308 94.7L1307 92.9L1306 90.2L1305 93.1L1304 94.9L1303 96.3L1302 97.6L1301 98.7L1300 99.8L1299 100.8L1298 101.8L1297 102.7L1296 103.6L1295 104.5L1294 105.4L1293 106.2L1292 107.0L1291 107.8L1290 108.6L1289 109.3L1288 110.1L1287 110.8L1286 110.7L1285 110.1L1284 109.5L1283 108.8L1282 108.1L1281 107.4L1280 106.7L1279 106.0L1278 105.2L1277 104.3L1276 103.5L1275 102.5L1274 101.6L1273 100.5L1272 99.4L1271 98.1L1270 96.7L1269 95.1L1268 93.0L1267 91.2L1266 93.9L1265 95.7L1264 97.2L1263 98.5L1262 99.7L1261 100.9L1260 102.0L1259 103.0L1258 104.0L1257 104.9L1256 105.9L1255 106.8L1254 107.6L1253 108.5L1252 109.3L1251 110.2L1250 111.0L1249 111.6L1248 112.3L1247 112.9L1246 112.3L1245 111.5L1244 110.8L1243 110.0L1242 109.2L1241 108.4L1240 107.5L1239 106.7L1238 105.8L1237 104.9L1236 104.0L1235 103.0L1234 102.0L1233 100.9L1232 99.8L1231 98.6L1230 97.3L1229 95.9L1228 94.1L1227 91.7L1226 92.9L1225 95.2L1224 97.0L1223 98.6L1222 99.9L1221 101.2L1220 102.3L1219 103.4L1218 104.4L1217 105.4L1216 106.3L1215 107.1L1214 108.0L1213 108.8L1212 109.5L1211 110.3L1210 111.0L1209 111.7L1208 112.4L1207 112.3L1206 111.5L1205 110.7L1204 109.9L1203 109.0L1202 108.2L1201 107.3L1200 106.4L1199 105.5L1198 104.5L1197 103.5L1196 102.5L1195 101.4L1194 100.3L1193 99.1L1192 97.8L1191 96.3L1190 94.6L1189 92.4L1188 91.7L1187 94.1L1186 95.8L1185 97.3L1184 98.6L1183 99.7L1182 100.8L1181 101.7L1180 102.7L1179 103.5L1178 104.4L1177 105.2L1176 105.9L1175 106.7L1174 107.4L1173 108.0L1172 108.7L1171 109.3L1170 109.9L1169 109.5L1168 108.7L1167 108.0L1166 107.2L1165 106.4L1164 105.6L1163 104.8L1162 104.0L1161 103.1L1160 102.2L1159 101.3L1158 100.3L1157 99.3L1156 98.2L1155 97.1L1154 95.8L1153 94.3L1152 92.4L1151 90.6L1150 92.7L1149 94.1L1148 95.2L1147 96.2L1146 97.1L1145 97.9L1144 98.7L1143 99.4L1142 100.1L1141 100.7L1140 101.4L1139 101.9L1138 102.5L1137 103.0L1136 103.6L1135 104.1L1134 104.5L1133 105.0L1132 105.5L1131 105.4L1130 104.9L1129 104.3L1128 103.7L1127 103.1L1126 102.5L1125 101.9L1124 101.3L1123 100.7L1122 100.0L1121 99.4L1120 98.7L1119 97.9L1118 97.2L1117 96.4L1116 95.5L1115 94.6L1114 93.5L1113 92.2L1112 90.4L1111 91.7L1110 93.1L1109 94.3L1108 95.3L1107 96.2L1106 97.0L1105 97.7L1104 98.4L1103 99.0L1102 99.7L1101 100.2L1100 100.8L1099 101.3L1098 101.9L1097 102.4L1096 102.9L1095 103.4L1094 103.8L1093 104.3L1092 103.9L1091 103.4L1090 102.9L1089 102.3L1088 101.8L1087 101.2L1086 100.6L1085 100.0L1084 99.4L1083 98.8L1082 98.1L1081 97.4L1080 96.7L1079 95.9L1078 95.1L1077 94.1L1076 93.1L1075 91.8L1074 89.5L1073 91.5L1072 92.7L1071 93.6L1070 94.4L1069 95.2L1068 95.8L1067 96.5L1066 97.0L1065 97.6L1064 98.1L1063 98.6L1062 99.1L1061 99.6L1060 100.0L1059 100.4L1058 100.9L1057 101.3L1056 101.7L1055 102.0L1054 102.2L1053 101.8L1052 101.3L1051 100.9L1050 100.4L1049 100.0L1048 99.5L1047 99.0L1046 98.5L1045 98.0L1044 97.4L1043 96.9L1042 96.3L1041 95.7L1040 95.1L1039 94.4L1038 93.6L1037 92.8L1036 91.8L1035 90.5L1034 90.8L1033 92.0L1032 93.0L1031 93.8L1030 94.5L1029 95.2L1028 95.8L1027 96.3L1026 96.9L1025 97.4L1024 97.9L1023 98.3L1022 98.8L1021 99.2L1020 99.6L1019 100.0L1018 100.4L1017 100.8L1016 101.1L1015 101.1L1014 100.7L1013 100.3L1012 99.9L1011 99.4L1010 99.0L1009 98.5L1008 98.1L1007 97.6L1006 97.1L1005 96.6L1004 96.0L1003 95.4L1002 94.9L1001 94.2L1000 93.5L999 92.8L998 91.9L997 90.7L996 90.4L995 91.9L994 92.9L993 93.8L992 94.6L991 95.3L990 95.9L989 96.5L988 97.1L987 97.7L986 98.2L985 98.7L984 99.1L983 99.6L982 100.0L981 100.4L980 100.8L979 101.2L978 101.6L977 102.0L976 101.7L975 101.3L974 100.8L973 100.4L972 99.9L971 99.4L970 99.0L969 98.5L968 97.9L967 97.4L966 96.9L965 96.3L964 95.7L963 95.1L962 94.4L961 93.7L960 92.9L959 92.0L958 90.8L957 90.1L956 91.5L955 92.5L954 93.3L953 94.1L952 94.7L951 95.3L950 95.9L949 96.5L948 97.0L947 97.5L946 98.0L945 98.4L944 98.9L943 99.3L942 99.8L941 100.2L940 100.6L939 101.0L938 101.4L937 101.7L936 101.4L935 101.0L934 100.6L933 100.2L932 99.8L931 99.4L930 99.0L929 98.5L928 98.1L927 97.6L926 97.1L925 96.6L924 96.0L923 95.4L922 94.8L921 94.2L920 93.4L919 92.6L918 91.5L917 90.0L916 90.9L915 91.9L914 92.8L913 93.5L912 94.1L911 94.7L910 95.3L909 95.8L908 96.3L907 96.8L906 97.3L905 97.7L904 98.2L903 98.6L902 99.0L901 99.4L900 99.8L899 100.2L898 100.5L897 100.9L896 100.7L895 100.3L894 100.0L893 99.6L892 99.2L891 98.8L890 98.4L889 98.0L888 97.6L887 97.1L886 96.6L885 96.2L884 95.6L883 95.1L882 94.5L881 93.9L880 93.1L879 92.3L878 91.3L877 89.7L876 91.1L875 92.1L874 92.9L873 93.6L872 94.2L871 94.8L870 95.4L869 95.9L868 96.4L867 96.9L866 97.4L865 97.8L864 98.2L863 98.7L862 99.1L861 99.5L860 99.9L859 100.3L858 100.6L857 100.9L856 100.5L855 100.2L854 99.8L853 99.4L852 99.0L851 98.6L850 98.2L849 97.8L848 97.4L847 96.9L846 96.4L845 95.9L844 95.4L843 94.8L842 94.2L841 93.5L840 92.8L839 91.9L838 90.7L837 90.5L836 91.8L835 92.7L834 93.5L833 94.1L832 94.8L831 95.4L830 95.9L829 96.4L828 96.9L827 97.4L826 97.9L825 98.3L824 98.8L823 99.2L822 99.6L821 100.0L820 100.4L819 100.8L818 101.2L817 101.4L816 101.0L815 100.7L814 100.3L813 99.9L812 99.5L811 99.1L810 98.7L809 98.3L808 97.9L807 97.4L806 96.9L805 96.4L804 95.9L803 95.3L802 94.7L801 94.1L800 93.3L799 92.5L798 91.5L797 89.6L796 91.7L795 93.0L794 94.0L793 94.9L792 95.7L791 96.5L790 97.2L789 97.8L788 98.5L787 99.1L786 99.7L785 100.3L784 100.8L783 101.4L782 101.9L781 102.4L780 102.9L779 103.4L778 103.9L777 103.6L776 103.2L775 102.7L774 102.2L773 101.8L772 101.3L771 100.7L770 100.2L769 99.6L768 99.1L767 98.4L766 97.8L765 97.1L764 96.3L763 95.5L762 94.6L761 93.6L760 92.4L759 90.5L758 91.5L757 92.8L756 93.8L755 94.7L754 95.5L753 96.2L752 96.9L751 97.6L750 98.2L749 98.8L748 99.4L747 99.9L746 100.5L745 101.0L744 101.5L743 102.0L742 102.5L741 103.0L740 103.5L739 103.5L738 103.1L737 102.7L736 102.2L735 101.8L734 101.3L733 100.8L732 100.3L731 99.8L730 99.2L729 98.6L728 98.0L727 97.4L726 96.7L725 95.9L724 95.1L723 94.2L722 93.2L721 91.9L720 90.5L719 92.7L718 94.1L717 95.3L716 96.3L715 97.2L714 98.1L713 98.9L712 99.7L711 100.5L710 101.2L709 101.9L708 102.5L707 103.2L706 103.8L705 104.5L704 105.1L703 105.7L702 106.2L701 106.3L700 105.8L699 105.2L698 104.6L697 104.0L696 103.3L695 102.7L694 102.0L693 101.3L692 100.6L691 99.9L690 99.1L689 98.3L688 97.4L687 96.5L686 95.4L685 94.3L684 92.9L683 90.7L682 92.1L681 93.6L680 94.8L679 95.9L678 96.8L677 97.7L676 98.5L675 99.2L674 99.9L673 100.6L672 101.2L671 101.8L670 102.4L669 103.0L668 103.5L667 104.1L666 104.6L665 105.1L664 105.6L663 106.1L662 106.0L661 105.5L660 104.9L659 104.4L658 103.8L657 103.2L656 102.7L655 102.1L654 101.4L653 100.8L652 100.2L651 99.5L650 98.8L649 98.0L648 97.2L647 96.4L646 95.4L645 94.4L644 93.2L643 91.6L642 91.0L641 92.5L640 93.6L639 94.5L638 95.4L637 96.1L636 96.8L635 97.4L634 98.1L633 98.6L632 99.2L631 99.7L630 100.2L629 100.7L628 101.2L627 101.7L626 102.1L625 102.5L624 103.0L623 103.1L622 102.6L621 102.2L620 101.7L619 101.2L618 100.7L617 100.2L616 99.7L615 99.2L614 98.6L613 98.0L612 97.4L611 96.8L610 96.1L609 95.4L608 94.6L607 93.8L606 92.8L605 91.5L604 90.6L603 92.3L602 93.4L601 94.4L600 95.2L599 96.0L598 96.7L597 97.3L596 98.0L595 98.5L594 99.1L593 99.6L592 100.1L591 100.6L590 101.1L589 101.6L588 102.0L587 102.5L586 102.9L585 103.3L584 103.6L583 103.2L582 102.7L581 102.3L580 101.8L579 101.3L578 100.8L577 100.3L576 99.8L575 99.3L574 98.7L573 98.2L572 97.6L571 96.9L570 96.3L569 95.6L568 94.8L567 94.0L566 93.1L565 91.9L564 90.1L563 91.6L562 92.7L561 93.6L560 94.4L559 95.1L558 95.7L557 96.3L556 96.9L555 97.4L554 97.9L553 98.4L552 98.9L551 99.3L550 99.8L549 100.2L548 100.6L547 101.0L546 101.4L545 101.7L544 102.1L543 101.7L542 101.3L541 100.9L540 100.5L539 100.0L538 99.6L537 99.1L536 98.7L535 98.2L534 97.7L533 97.2L532 96.6L531 96.1L530 95.5L529 94.8L528 94.2L527 93.4L526 92.5L525 91.5L524 89.9L523 91.7L522 92.8L521 93.7L520 94.4L519 95.1L518 95.7L517 96.3L516 96.9L515 97.4L514 97.9L513 98.4L512 98.8L511 99.3L510 99.7L509 100.1L508 100.5L507 100.9L506 101.3L505 101.6L504 102.0L503 101.8L502 101.4L501 101.0L500 100.6L499 100.1L498 99.7L497 99.3L496 98.8L495 98.3L494 97.9L493 97.4L492 96.8L491 96.3L490 95.7L489 95.1L488 94.5L487 93.8L486 93.0L485 92.1L484 90.9L483 90.8L482 92.1L481 93.1L480 93.9L479 94.7L478 95.3L477 95.9L476 96.5L475 97.0L474 97.6L473 98.1L472 98.5L471 99.0L470 99.4L469 99.8L468 100.2L467 100.6L466 101.0L465 101.4L464 101.8L463 101.9L462 101.5L461 101.1L460 100.7L459 100.3L458 99.9L457 99.4L456 99.0L455 98.5L454 98.0L453 97.6L452 97.0L451 96.5L450 96.0L449 95.4L448 94.7L447 94.1L446 93.3L445 92.5L444 91.4L443 89.4Z" fill="#629c6e"/><g clip-path="url(#cl)"><path d="M444.5 167.8V200.2M446.5 169.9V200.4M448.5 168.0V200.3M450.5 167.3V198.8M452.5 168.6V200.4M454.5 165.6V199.6M456.5 166.0V201.4M458.5 166.6V201.5M460.5 165.0V201.0M462.5 164.7V202.6M464.5 163.4V201.6M466.5 164.4V202.7M468.5 163.6V202.4M470.5 163.3V203.2M472.5 164.7V203.8M474.5 161.9V203.7M476.5 163.1V203.5M478.5 163.0V203.4M480.5 162.1V204.2M482.5 159.9V202.6M484.5 160.1V204.4M486.5 160.5V203.2M488.5 159.6V203.3M490.5 159.7V204.2M492.5 158.6V206.0M494.5 158.3V204.7M496.5 158.1V204.1M498.5 158.1V205.6M500.5 158.3V206.4M502.5 156.5V206.1M504.5 157.7V209.1M506.5 157.0V206.7M508.5 155.6V207.7M510.5 154.3V209.1M512.5 155.6V209.5M514.5 153.9V209.6M516.5 152.8V210.4M518.5 151.9V211.4M520.5 151.9V211.4M522.5 150.0V212.6M524.5 151.8V212.3M526.5 151.9V213.0M528.5 150.3V214.4M530.5 150.1V214.1M532.5 148.2V215.3M534.5 149.0V216.0M536.5 147.5V217.6M538.5 145.4V217.9M540.5 146.7V218.1M542.5 145.0V218.1M544.5 144.0V220.1M546.5 144.5V219.6M548.5 144.4V219.5M550.5 142.4V220.7M552.5 142.6V220.7M554.5 141.8V223.1M556.5 141.6V224.8M558.5 140.4V223.2M560.5 139.3V223.7M562.5 136.8V225.8M564.5 137.5V224.8M566.5 135.1V225.5M568.5 136.8V226.5M570.5 135.3V228.2M572.5 133.0V229.5M574.5 133.7V230.9M576.5 132.3V230.4M578.5 132.4V229.6M580.5 132.4V230.2M582.5 129.8V232.1M584.5 130.6V231.2M586.5 129.1V233.4M588.5 127.7V231.9M590.5 127.5V232.2M592.5 128.6V232.7M594.5 126.2V233.8M596.5 126.0V233.6M598.5 126.6V235.0M600.5 125.3V235.8M602.5 124.1V234.7M604.5 126.8V236.5M606.5 125.9V238.1M608.5 126.2V236.2M610.5 126.3V237.5M612.5 126.3V237.7M614.5 126.5V238.7M616.5 127.3V240.2M618.5 127.9V240.1M620.5 127.7V239.1M622.5 127.8V237.0M624.5 128.7V239.6M626.5 129.2V237.4M628.5 128.7V237.1M630.5 130.4V237.5M632.5 129.1V238.3M634.5 130.9V238.8M636.5 130.0V235.8M638.5 132.9V235.6M640.5 131.7V235.5M642.5 131.8V235.3M644.5 131.8V236.4M646.5 132.0V235.7M648.5 134.9V236.4M650.5 132.6V236.0M652.5 134.0V236.1M654.5 134.2V235.4M656.5 134.0V234.8M658.5 136.6V234.6M660.5 135.2V233.8M662.5 135.6V233.5M664.5 135.9V234.0M666.5 137.0V233.9M668.5 138.8V234.7M670.5 137.8V235.0M672.5 139.1V234.4M674.5 138.4V232.5M676.5 138.5V234.0M678.5 140.4V233.4M680.5 138.8V232.6M682.5 140.7V232.0M684.5 140.2V231.2M686.5 141.8V231.2M688.5 142.1V232.1M690.5 140.8V231.5M692.5 142.1V231.7M694.5 142.8V233.1M696.5 144.0V231.2M698.5 142.1V231.5M700.5 143.5V230.2M702.5 144.4V230.5M704.5 144.2V229.9M706.5 146.1V230.8M708.5 146.4V230.3M710.5 144.6V230.8M712.5 147.2V229.7M714.5 147.3V231.5M716.5 147.5V231.2M718.5 147.5V229.9M720.5 148.6V232.4M722.5 150.2V233.4M724.5 150.0V233.4M726.5 151.0V233.0M728.5 149.8V232.9M730.5 152.3V233.1M732.5 152.9V232.8M734.5 154.2V235.7M736.5 154.1V235.2M738.5 155.2V234.5M740.5 153.4V234.1M742.5 153.9V237.2M744.5 152.8V235.2M746.5 153.5V236.4M748.5 151.9V236.5M750.5 151.2V238.0M752.5 150.6V238.2M754.5 152.3V238.1M756.5 152.5V238.1M758.5 152.4V238.2M760.5 150.9V239.8M762.5 150.7V240.3M764.5 148.8V240.2M766.5 149.2V241.7M768.5 148.5V241.7M770.5 147.7V240.5M772.5 147.4V242.2M774.5 148.7V243.2M776.5 148.8V244.0M778.5 145.9V241.8M780.5 146.3V243.3M782.5 145.0V243.6M784.5 144.6V244.6M786.5 145.3V246.1M788.5 145.7V245.8M790.5 144.4V245.1M792.5 143.6V245.4M794.5 144.7V245.7M796.5 144.7V245.0M798.5 142.6V244.9M800.5 142.0V243.8M802.5 142.7V244.6M804.5 143.8V241.3M806.5 141.2V241.5M808.5 142.5V240.4M810.5 142.1V241.1M812.5 143.4V241.2M814.5 141.5V240.9M816.5 142.9V240.0M818.5 140.0V239.8M820.5 142.2V239.7M822.5 141.8V239.1M824.5 140.6V238.8M826.5 140.4V236.2M828.5 141.0V235.2M830.5 139.0V235.4M832.5 139.2V233.8M834.5 140.2V233.8M836.5 140.9V233.3M838.5 138.7V235.3M840.5 138.1V234.5M842.5 137.6V233.1M844.5 138.2V234.0M846.5 137.6V234.1M848.5 138.8V232.7M850.5 136.4V234.4M852.5 138.0V234.3M854.5 136.0V232.9M856.5 136.5V232.9M858.5 136.8V232.8M860.5 138.8V233.6M862.5 139.1V230.2M864.5 138.1V230.5M866.5 138.5V231.3M868.5 138.6V229.9M870.5 137.6V227.8M872.5 140.7V227.8M874.5 140.3V227.1M876.5 139.5V227.6M878.5 141.3V226.5M880.5 139.4V224.7M882.5 139.3V224.1M884.5 142.2V223.5M886.5 142.1V224.6M888.5 143.0V222.5M890.5 140.8V221.7M892.5 143.5V223.1M894.5 143.7V220.7M896.5 142.5V219.7M898.5 144.6V220.5M900.5 143.1V221.3M902.5 143.7V218.1M904.5 144.9V217.8M906.5 145.4V218.0M908.5 144.5V216.9M910.5 147.8V217.2M912.5 148.5V217.4M914.5 147.9V215.4M916.5 150.1V215.6M918.5 151.5V214.1M920.5 152.8V214.2M922.5 152.5V213.8M924.5 153.6V212.3M926.5 155.5V211.9M928.5 155.3V210.6M930.5 158.1V211.0M932.5 157.2V209.0M934.5 157.2V209.8M936.5 158.7V208.0M938.5 159.3V207.4M940.5 159.4V207.3M942.5 159.8V207.1M944.5 160.0V208.3M946.5 161.7V208.0M948.5 162.5V207.7M950.5 161.8V207.8M952.5 161.3V207.7M954.5 161.3V206.8M956.5 161.6V209.2M958.5 161.7V207.5M960.5 161.9V208.2M962.5 162.1V207.1M964.5 161.6V208.3M966.5 163.1V207.4M968.5 162.0V206.9M970.5 162.4V207.1M972.5 163.0V208.1M974.5 163.5V206.8M976.5 161.3V208.3M978.5 161.6V207.3M980.5 161.1V206.2M982.5 160.5V208.0M984.5 159.0V207.1M986.5 159.7V208.1M988.5 158.1V206.7M990.5 156.3V205.5M992.5 156.9V207.4M994.5 156.1V207.3M996.5 154.4V208.6M998.5 154.8V207.4M1000.5 153.8V207.6M1002.5 153.1V209.1M1004.5 152.3V210.3M1006.5 150.9V210.6M1008.5 148.4V211.4M1010.5 147.7V210.2M1012.5 147.0V210.2M1014.5 146.8V212.1M1016.5 148.0V212.9M1018.5 145.5V211.9M1020.5 144.9V213.3M1022.5 144.7V213.6M1024.5 144.3V213.0M1026.5 143.7V214.5M1028.5 141.3V213.7M1030.5 140.1V215.2M1032.5 139.0V216.0M1034.5 138.8V214.8M1036.5 137.4V215.3M1038.5 138.8V216.9M1040.5 136.0V216.5M1042.5 137.7V218.5M1044.5 138.0V219.5M1046.5 136.4V219.6M1048.5 135.9V221.3M1050.5 135.6V221.4M1052.5 137.0V221.3M1054.5 137.0V221.5M1056.5 136.1V221.5M1058.5 136.7V221.9M1060.5 136.6V222.8M1062.5 136.1V224.9M1064.5 136.7V224.4M1066.5 137.2V225.1M1068.5 138.5V225.2M1070.5 138.3V227.7M1072.5 139.9V228.3M1074.5 140.0V227.1M1076.5 140.7V228.3M1078.5 141.6V229.4M1080.5 142.1V228.3M1082.5 142.2V229.6M1084.5 142.4V229.4M1086.5 142.7V229.9M1088.5 143.2V229.1M1090.5 143.6V228.2M1092.5 145.8V227.9M1094.5 145.8V228.5M1096.5 145.2V227.4M1098.5 145.6V227.5M1100.5 145.9V227.3M1102.5 147.2V226.4M1104.5 145.7V225.1M1106.5 146.2V225.3M1108.5 147.0V223.8M1110.5 147.9V223.3M1112.5 147.7V224.8M1114.5 147.4V223.5M1116.5 146.8V223.0M1118.5 147.0V222.1M1120.5 147.8V222.7M1122.5 148.0V224.3M1124.5 147.7V221.6M1126.5 150.3V223.7M1128.5 148.1V222.0M1130.5 149.8V222.6M1132.5 150.2V223.6M1134.5 150.4V222.7M1136.5 148.6V221.1M1138.5 148.1V221.2M1140.5 150.7V222.4M1142.5 149.6V221.8M1144.5 149.8V223.4M1146.5 148.4V220.8M1148.5 148.0V221.6M1150.5 150.0V222.4M1152.5 148.9V223.4M1154.5 150.6V222.8M1156.5 150.6V222.6M1158.5 150.4V221.9M1160.5 150.3V221.2M1162.5 150.4V221.0M1164.5 150.7V219.7M1166.5 151.9V218.8M1168.5 150.8V218.2M1170.5 152.0V218.3M1172.5 151.2V218.2M1174.5 152.1V218.6M1176.5 151.9V216.9M1178.5 152.3V217.0M1180.5 153.8V217.3M1182.5 154.3V217.5M1184.5 154.1V216.2M1186.5 154.2V215.6M1188.5 156.4V215.4M1190.5 154.8V214.6M1192.5 157.0V213.0M1194.5 157.4V214.1M1196.5 157.1V213.1M1198.5 158.5V213.8M1200.5 158.8V212.7M1202.5 157.8V212.7M1204.5 160.8V213.8M1206.5 159.8V214.3M1208.5 160.0V214.0M1210.5 161.5V214.5M1212.5 161.6V213.6M1214.5 160.8V215.1M1216.5 161.0V213.0M1218.5 161.7V215.0M1220.5 162.5V215.4M1222.5 161.5V214.0M1224.5 161.1V214.0M1226.5 161.7V214.0M1228.5 162.0V213.8M1230.5 161.0V215.9M1232.5 162.8V215.4M1234.5 163.3V214.0M1236.5 160.4V214.9M1238.5 162.5V216.7M1240.5 161.7V217.1M1242.5 163.2V216.2M1244.5 161.5V216.3M1246.5 163.0V216.3M1248.5 160.6V216.5M1250.5 162.4V217.5M1252.5 161.0V217.6M1254.5 158.6V216.7M1256.5 160.1V217.8M1258.5 159.1V217.8M1260.5 157.3V217.8M1262.5 157.6V220.1M1264.5 159.0V220.4M1266.5 158.3V220.5M1268.5 155.5V220.7M1270.5 157.5V222.3M1272.5 154.8V222.8M1274.5 156.6V221.2M1276.5 156.3V223.3M1278.5 153.2V222.0M1280.5 154.6V221.6M1282.5 152.6V222.6M1284.5 152.3V223.6M1286.5 153.3V225.5M1288.5 150.8V223.7M1290.5 151.9V224.9M1292.5 150.1V224.6M1294.5 151.9V227.2M1296.5 149.3V227.1M1298.5 150.6V228.0M1300.5 148.1V227.6M1302.5 147.9V228.0M1304.5 148.5V228.1M1306.5 148.3V229.9M1308.5 147.8V229.7M1310.5 145.4V228.1M1312.5 145.3V228.6M1314.5 145.4V230.3M1316.5 146.2V230.2M1318.5 145.5V231.9M1320.5 145.4V232.6M1322.5 144.2V232.8M1324.5 143.8V232.4M1326.5 144.2V233.6M1328.5 142.8V232.7M1330.5 145.2V234.7M1332.5 143.5V234.6M1334.5 144.0V235.5M1336.5 143.1V236.5M1338.5 143.5V234.3M1340.5 143.0V234.0M1342.5 144.5V234.5M1344.5 143.1V235.0M1346.5 142.8V234.5M1348.5 146.0V233.1M1350.5 145.0V233.0M1352.5 145.3V234.5M1354.5 145.7V233.3M1356.5 146.0V232.3M1358.5 145.3V232.8M1360.5 146.9V231.4M1362.5 146.8V231.4M1364.5 146.6V232.4M1366.5 147.7V231.1M1368.5 147.5V231.1M1370.5 146.9V229.2M1372.5 148.5V229.0M1374.5 147.7V230.5M1376.5 147.6V230.8M1378.5 149.7V230.1M1380.5 150.3V230.0M1382.5 151.1V230.1M1384.5 150.6V228.6M1386.5 150.1V230.1M1388.5 151.9V229.7M1390.5 152.8V230.6M1392.5 153.5V229.3M1394.5 154.1V229.2M1396.5 154.7V231.4M1398.5 155.0V231.6M1400.5 154.3V232.4M1402.5 156.8V232.7M1404.5 156.6V231.1M1406.5 155.8V231.8M1408.5 157.1V231.5M1410.5 157.5V231.1M1412.5 154.9V233.4M1414.5 156.1V232.7M1416.5 152.9V231.5M1418.5 153.7V232.5M1420.5 151.3V231.4M1422.5 152.6V231.0M1424.5 154.8V231.2M1426.5 156.1V228.0M1428.5 156.1V225.6M1430.5 158.3V225.1M1432.5 157.6V222.5M1434.5 157.9V220.8M1436.5 162.2V218.2M1438.5 165.9V212.9M1440.5 168.5V208.6M1442.5 171.6V205.0M1444.5 176.4V197.6M1446.5 179.3V194.5M1448.5 180.9V188.5M1450.5 184.1V184.0" stroke="#666" stroke-width="1.1" fill="none"/><path d="M443 171.4L444 171.3L445 171.2L446 171.2L447 171.1L448 170.9L449 170.6L450 170.4L451 170.1L452 169.8L453 169.5L454 169.2L455 168.8L456 168.4L457 168.1L458 167.7L459 167.2L460 166.8L461 166.3L462 165.8L463 165.9L464 166.1L465 166.3L466 166.5L467 166.7L468 166.9L469 167.2L470 167.5L471 167.8L472 168.1L473 168.4L474 168.7L475 169.1L476 169.4L477 169.8L478 169.9L479 169.9L480 169.9L481 169.9L482 169.9L483 169.9L484 169.9L485 169.9L486 169.5L487 169.0L488 168.5L489 167.9L490 167.3L491 166.6L492 165.9L493 165.2L494 164.4L495 163.5L496 162.6L497 161.7L498 160.7L499 159.7L500 158.7L501 157.6L502 157.8L503 158.5L504 159.1L505 159.8L506 160.6L507 161.3L508 162.1L509 162.9L510 163.7L511 164.6L512 165.4L513 166.3L514 167.2L515 168.2L516 169.1L517 169.9L518 170.1L519 170.1L520 170.2L521 170.2L522 170.3L523 170.3L524 170.4L525 170.4L526 169.7L527 168.6L528 167.5L529 166.3L530 165.0L531 163.6L532 162.1L533 160.5L534 159.0L535 157.3L536 155.6L537 153.8L538 152.0L539 150.1L540 148.2L541 146.7L542 147.9L543 149.2L544 150.4L545 151.7L546 153.0L547 154.4L548 155.7L549 157.1L550 158.4L551 159.8L552 161.1L553 162.5L554 163.8L555 165.1L556 166.4L557 167.0L558 166.8L559 166.7L560 166.6L561 166.4L562 166.3L563 166.1L564 165.8L565 164.2L566 162.4L567 160.5L568 158.6L569 156.6L570 154.6L571 152.5L572 150.3L573 148.1L574 145.9L575 143.6L576 141.2L577 140.0L578 141.8L579 143.7L580 145.5L581 147.4L582 149.2L583 151.1L584 152.9L585 154.8L586 156.6L587 158.4L588 160.1L589 161.7L590 162.6L591 162.5L592 162.3L593 162.2L594 162.1L595 161.9L596 161.8L597 161.7L598 160.2L599 158.4L600 156.6L601 154.9L602 153.2L603 151.4L604 149.7L605 147.9L606 146.1L607 144.3L608 142.4L609 140.6L610 138.8L611 136.9L612 135.1L613 133.3L614 133.1L615 135.2L616 137.3L617 139.4L618 141.4L619 143.5L620 145.5L621 147.4L622 149.4L623 151.3L624 153.2L625 155.0L626 156.8L627 158.5L628 160.2L629 161.8L630 163.2L631 163.5L632 163.6L633 163.7L634 163.7L635 163.8L636 163.9L637 164.0L638 164.1L639 163.6L640 162.6L641 161.6L642 160.5L643 159.4L644 158.3L645 157.1L646 156.0L647 154.9L648 153.7L649 152.5L650 151.4L651 150.2L652 149.0L653 147.9L654 146.7L655 146.1L656 147.5L657 149.0L658 150.4L659 151.8L660 153.2L661 154.6L662 155.9L663 157.2L664 158.5L665 159.8L666 161.0L667 162.2L668 163.4L669 164.6L670 165.6L671 166.6L672 166.8L673 166.9L674 167.0L675 167.1L676 167.2L677 167.2L678 167.3L679 167.4L680 166.5L681 165.4L682 164.3L683 163.2L684 162.0L685 160.8L686 159.6L687 158.4L688 157.2L689 156.0L690 154.8L691 153.6L692 152.4L693 151.2L694 151.0L695 152.5L696 153.9L697 155.4L698 156.8L699 158.2L700 159.6L701 161.0L702 162.3L703 163.6L704 164.9L705 166.1L706 167.3L707 168.4L708 169.4L709 169.8L710 169.8L711 169.9L712 170.0L713 170.2L714 170.3L715 170.4L716 170.3L717 169.4L718 168.4L719 167.4L720 166.3L721 165.3L722 164.2L723 163.2L724 162.1L725 161.1L726 160.1L727 159.0L728 158.0L729 157.0L730 156.0L731 155.7L732 157.2L733 158.7L734 160.1L735 161.5L736 162.8L737 164.2L738 165.5L739 166.5L740 167.4L741 168.4L742 169.4L743 170.3L744 171.3L745 172.1L746 172.6L747 172.6L748 172.5L749 172.5L750 172.4L751 172.4L752 172.3L753 172.0L754 171.0L755 170.0L756 168.9L757 167.7L758 166.5L759 165.3L760 164.0L761 162.8L762 161.5L763 160.1L764 158.8L765 157.4L766 157.2L767 158.3L768 159.4L769 160.5L770 161.7L771 162.8L772 163.9L773 165.0L774 166.1L775 167.2L776 168.2L777 169.3L778 170.2L779 170.5L780 170.4L781 170.3L782 170.2L783 170.1L784 170.0L785 170.0L786 168.6L787 167.1L788 165.4L789 163.6L790 161.8L791 159.9L792 158.0L793 156.1L794 154.2L795 152.2L796 150.2L797 148.2L798 146.2L799 144.2L800 146.1L801 148.0L802 149.9L803 151.7L804 153.6L805 155.4L806 157.3L807 159.1L808 160.9L809 162.7L810 164.4L811 166.1L812 167.7L813 168.9L814 168.9L815 168.9L816 168.9L817 168.9L818 168.8L819 168.8L820 168.8L821 168.2L822 167.2L823 166.2L824 165.1L825 163.9L826 162.7L827 161.5L828 160.3L829 159.0L830 157.8L831 156.5L832 155.1L833 153.8L834 152.4L835 151.0L836 149.6L837 150.3L838 151.6L839 152.8L840 154.1L841 155.3L842 156.6L843 157.8L844 159.0L845 160.2L846 161.5L847 162.7L848 163.8L849 165.0L850 166.1L851 167.2L852 168.2L853 168.2L854 168.2L855 168.2L856 168.1L857 168.1L858 168.2L859 168.3L860 168.4L861 167.5L862 166.5L863 165.4L864 164.3L865 163.2L866 162.1L867 160.9L868 159.7L869 158.5L870 157.4L871 156.2L872 155.0L873 153.8L874 152.5L875 151.3L876 150.1L877 151.5L878 153.0L879 154.4L880 155.8L881 157.2L882 158.6L883 159.9L884 161.3L885 162.6L886 163.9L887 165.1L888 166.3L889 167.5L890 168.7L891 169.8L892 170.8L893 170.8L894 170.9L895 171.0L896 171.1L897 171.2L898 171.2L899 171.3L900 171.3L901 170.4L902 169.4L903 168.4L904 167.4L905 166.3L906 165.3L907 164.2L908 163.3L909 162.4L910 161.6L911 160.7L912 159.9L913 159.1L914 158.4L915 157.6L916 159.0L917 160.4L918 161.9L919 163.2L920 164.6L921 165.9L922 167.1L923 168.4L924 169.5L925 170.7L926 171.8L927 172.8L928 173.8L929 174.7L930 175.6L931 175.9L932 176.1L933 176.2L934 176.2L935 176.3L936 176.4L937 176.4L938 175.9L939 174.9L940 173.8L941 172.7L942 171.6L943 170.4L944 169.3L945 168.2L946 167.1L947 165.9L948 164.8L949 163.7L950 162.6L951 163.6L952 165.1L953 166.5L954 167.8L955 169.1L956 170.4L957 171.7L958 172.8L959 173.8L960 174.9L961 175.9L962 176.8L963 177.7L964 177.7L965 177.7L966 177.6L967 177.6L968 177.6L969 177.6L970 177.4L971 176.8L972 176.1L973 175.3L974 174.4L975 173.5L976 172.6L977 171.6L978 170.5L979 169.5L980 168.4L981 167.2L982 166.1L983 164.9L984 165.2L985 165.9L986 166.6L987 167.4L988 168.1L989 168.9L990 169.7L991 170.5L992 171.2L993 172.0L994 172.8L995 173.5L996 174.3L997 174.8L998 174.7L999 174.6L1000 174.4L1001 174.3L1002 174.2L1003 174.0L1004 173.9L1005 173.3L1006 172.1L1007 170.7L1008 169.3L1009 167.9L1010 166.3L1011 164.8L1012 163.1L1013 161.4L1014 159.7L1015 157.9L1016 156.1L1017 154.2L1018 152.3L1019 150.4L1020 148.4L1021 146.3L1022 147.0L1023 148.3L1024 149.7L1025 151.0L1026 152.4L1027 153.8L1028 155.3L1029 156.7L1030 158.2L1031 159.7L1032 161.1L1033 162.6L1034 164.1L1035 165.5L1036 167.0L1037 168.3L1038 169.4L1039 169.3L1040 169.2L1041 169.1L1042 169.1L1043 169.1L1044 169.1L1045 169.1L1046 168.4L1047 166.5L1048 164.4L1049 162.2L1050 160.0L1051 157.6L1052 155.3L1053 152.9L1054 150.5L1055 148.0L1056 145.5L1057 142.9L1058 140.7L1059 138.4L1060 138.4L1061 141.2L1062 143.9L1063 146.5L1064 149.1L1065 151.6L1066 154.1L1067 156.5L1068 158.9L1069 161.2L1070 163.4L1071 165.6L1072 167.6L1073 169.5L1074 170.4L1075 170.4L1076 170.5L1077 170.6L1078 170.7L1079 170.8L1080 170.9L1081 170.7L1082 169.5L1083 168.1L1084 166.7L1085 165.3L1086 163.8L1087 162.4L1088 160.9L1089 159.5L1090 158.0L1091 156.5L1092 154.9L1093 153.3L1094 151.8L1095 150.2L1096 149.6L1097 151.4L1098 153.2L1099 154.9L1100 156.6L1101 158.3L1102 160.0L1103 161.6L1104 163.2L1105 164.8L1106 166.3L1107 167.8L1108 169.2L1109 170.6L1110 171.9L1111 172.6L1112 172.7L1113 172.7L1114 172.8L1115 172.8L1116 172.8L1117 172.9L1118 172.7L1119 171.3L1120 169.8L1121 168.2L1122 166.6L1123 164.9L1124 163.2L1125 161.5L1126 159.7L1127 157.9L1128 156.1L1129 154.2L1130 152.4L1131 150.5L1132 150.8L1133 152.7L1134 154.6L1135 156.5L1136 158.3L1137 160.1L1138 161.9L1139 163.7L1140 165.4L1141 167.1L1142 168.8L1143 170.4L1144 171.9L1145 173.2L1146 173.3L1147 173.3L1148 173.3L1149 173.3L1150 173.3L1151 173.3L1152 173.4L1153 172.7L1154 171.5L1155 170.2L1156 168.8L1157 167.5L1158 166.1L1159 164.7L1160 163.3L1161 161.9L1162 160.5L1163 159.0L1164 157.6L1165 156.2L1166 154.7L1167 153.3L1168 152.2L1169 153.9L1170 155.5L1171 157.1L1172 158.7L1173 160.3L1174 161.9L1175 163.4L1176 164.9L1177 166.3L1178 167.8L1179 169.2L1180 170.5L1181 171.8L1182 173.1L1183 174.3L1184 174.8L1185 174.9L1186 175.0L1187 175.1L1188 175.1L1189 175.2L1190 175.3L1191 175.4L1192 175.2L1193 174.5L1194 173.9L1195 173.2L1196 172.6L1197 171.9L1198 171.2L1199 170.6L1200 169.9L1201 169.3L1202 168.6L1203 168.0L1204 167.4L1205 166.7L1206 166.1L1207 165.5L1208 165.3L1209 166.3L1210 167.2L1211 168.2L1212 169.1L1213 170.0L1214 170.9L1215 171.8L1216 172.4L1217 173.1L1218 173.8L1219 174.4L1220 175.1L1221 175.7L1222 176.3L1223 176.9L1224 177.4L1225 177.5L1226 177.5L1227 177.4L1228 177.4L1229 177.4L1230 177.4L1231 177.4L1232 177.3L1233 176.7L1234 176.1L1235 175.4L1236 174.7L1237 174.0L1238 173.2L1239 172.5L1240 171.7L1241 170.9L1242 170.2L1243 169.4L1244 168.6L1245 167.7L1246 166.9L1247 167.6L1248 168.2L1249 168.8L1250 169.5L1251 170.2L1252 170.8L1253 171.5L1254 172.2L1255 172.9L1256 173.5L1257 174.2L1258 174.9L1259 175.5L1260 176.1L1261 176.2L1262 176.1L1263 176.1L1264 176.0L1265 175.9L1266 175.8L1267 175.8L1268 175.2L1269 174.3L1270 173.4L1271 172.5L1272 171.5L1273 170.5L1274 169.4L1275 168.3L1276 167.2L1277 166.1L1278 164.9L1279 163.7L1280 162.5L1281 162.0L1282 162.9L1283 163.8L1284 164.7L1285 165.6L1286 166.5L1287 167.5L1288 168.4L1289 169.3L1290 170.2L1291 171.1L1292 172.0L1293 172.9L1294 173.6L1295 173.5L1296 173.4L1297 173.4L1298 173.3L1299 173.2L1300 173.1L1301 172.9L1302 171.6L1303 170.2L1304 168.7L1305 167.2L1306 165.6L1307 163.9L1308 162.2L1309 160.5L1310 158.7L1311 156.9L1312 155.1L1313 153.3L1314 151.5L1315 150.1L1316 151.7L1317 153.4L1318 155.0L1319 156.6L1320 158.2L1321 159.8L1322 161.4L1323 163.0L1324 164.5L1325 166.1L1326 167.6L1327 169.0L1328 170.4L1329 171.4L1330 171.4L1331 171.4L1332 171.3L1333 171.3L1334 171.2L1335 171.2L1336 170.6L1337 169.0L1338 167.3L1339 165.6L1340 163.8L1341 162.0L1342 160.1L1343 158.2L1344 156.4L1345 154.5L1346 152.6L1347 150.7L1348 148.8L1349 149.4L1350 151.5L1351 153.5L1352 155.6L1353 157.6L1354 159.6L1355 161.5L1356 163.4L1357 165.3L1358 167.1L1359 168.8L1360 170.5L1361 171.9L1362 172.2L1363 172.3L1364 172.3L1365 172.3L1366 172.4L1367 172.4L1368 172.4L1369 171.4L1370 170.3L1371 169.2L1372 168.0L1373 166.8L1374 165.6L1375 164.4L1376 163.1L1377 162.0L1378 160.8L1379 159.7L1380 158.6L1381 157.4L1382 156.3L1383 157.6L1384 159.2L1385 160.6L1386 162.1L1387 163.5L1388 164.9L1389 166.3L1390 167.6L1391 168.9L1392 170.1L1393 171.3L1394 172.4L1395 173.5L1396 174.5L1397 174.7L1398 174.8L1399 174.9L1400 175.0L1401 175.1L1402 175.2L1403 175.3L1404 175.3L1405 174.6L1406 173.9L1407 173.1L1408 172.4L1409 171.3L1410 170.1L1411 169.0L1412 167.8L1413 166.5L1414 165.2L1415 163.9L1416 162.6L1417 161.2L1418 159.7L1419 158.3L1420 157.1L1421 157.9L1422 159.6L1423 161.2L1424 162.7L1425 164.2L1426 165.6L1427 167.0L1428 168.3L1429 169.6L1430 170.9L1431 172.0L1432 173.2L1433 174.2L1434 175.2L1435 176.2L1436 177.3L1437 177.8L1438 178.4L1439 178.9L1440 179.5L1441 180.1L1442 180.6L1443 181.2L1444 181.6L1445 181.9L1446 182.3L1447 182.8L1448 183.4L1449 184.1L1450 185.0L1450 185.0L1449 185.8L1448 186.5L1447 187.3L1446 188.1L1445 188.8L1444 189.6L1443 190.5L1442 191.7L1441 193.0L1440 194.5L1439 196.1L1438 197.9L1437 199.8L1436 201.8L1435 203.9L1434 205.4L1433 207.0L1432 208.6L1431 210.3L1430 212.0L1429 213.8L1428 215.7L1427 217.1L1426 216.5L1425 215.9L1424 215.2L1423 214.5L1422 213.7L1421 212.9L1420 211.6L1419 210.2L1418 208.8L1417 207.5L1416 206.2L1415 205.0L1414 203.7L1413 202.5L1412 201.4L1411 200.5L1410 200.4L1409 200.4L1408 200.4L1407 200.4L1406 200.4L1405 200.3L1404 200.3L1403 201.4L1402 203.0L1401 204.8L1400 206.6L1399 208.4L1398 210.3L1397 212.2L1396 214.1L1395 216.0L1394 218.0L1393 220.0L1392 222.0L1391 224.0L1390 222.5L1389 220.4L1388 218.4L1387 216.3L1386 214.3L1385 212.3L1384 210.3L1383 208.4L1382 206.6L1381 204.7L1380 203.0L1379 201.3L1378 199.8L1377 199.7L1376 199.7L1375 199.7L1374 199.8L1373 199.8L1372 199.9L1371 200.6L1370 202.5L1369 204.6L1368 206.9L1367 209.2L1366 211.5L1365 213.9L1364 216.4L1363 219.0L1362 221.5L1361 224.1L1360 226.8L1359 229.5L1358 230.2L1357 227.8L1356 225.4L1355 223.0L1354 220.5L1353 218.2L1352 215.8L1351 213.4L1350 211.1L1349 208.8L1348 206.6L1347 204.4L1346 202.4L1345 201.3L1344 201.3L1343 201.4L1342 201.4L1341 201.5L1340 201.6L1339 201.6L1338 202.2L1337 203.8L1336 205.4L1335 207.0L1334 208.6L1333 210.3L1332 211.9L1331 213.6L1330 215.2L1329 216.9L1328 218.5L1327 220.2L1326 221.9L1325 223.5L1324 225.2L1323 223.8L1322 221.7L1321 219.8L1320 217.8L1319 215.9L1318 214.0L1317 212.2L1316 210.4L1315 208.6L1314 206.9L1313 205.2L1312 203.6L1311 202.1L1310 200.6L1309 199.6L1308 199.6L1307 199.5L1306 199.4L1305 199.3L1304 199.2L1303 199.2L1302 199.1L1301 200.0L1300 201.4L1299 202.9L1298 204.4L1297 205.9L1296 207.5L1295 209.0L1294 210.6L1293 212.2L1292 213.8L1291 215.4L1290 217.1L1289 218.7L1288 220.3L1287 221.8L1286 221.4L1285 219.4L1284 217.5L1283 215.6L1282 213.8L1281 212.0L1280 210.2L1279 208.5L1278 206.8L1277 205.1L1276 203.5L1275 202.0L1274 200.4L1273 199.0L1272 197.7L1271 197.0L1270 196.9L1269 196.8L1268 196.8L1267 196.7L1266 196.6L1265 196.6L1264 196.5L1263 197.3L1262 198.2L1261 199.2L1260 200.1L1259 201.1L1258 202.1L1257 203.1L1256 204.1L1255 205.1L1254 206.1L1253 207.1L1252 208.1L1251 209.1L1250 210.1L1249 209.7L1248 208.4L1247 207.2L1246 206.0L1245 204.9L1244 203.8L1243 202.7L1242 201.6L1241 200.6L1240 199.5L1239 198.5L1238 197.5L1237 196.6L1236 195.7L1235 195.1L1234 195.0L1233 195.0L1232 195.0L1231 195.0L1230 194.9L1229 194.9L1228 194.9L1227 195.1L1226 195.8L1225 196.7L1224 197.5L1223 198.4L1222 199.3L1221 200.2L1220 201.1L1219 202.0L1218 203.0L1217 203.9L1216 204.8L1215 205.8L1214 206.7L1213 207.7L1212 208.6L1211 209.5L1210 209.2L1209 208.1L1208 207.1L1207 206.0L1206 205.0L1205 204.0L1204 202.9L1203 202.0L1202 201.0L1201 200.0L1200 199.1L1199 198.1L1198 197.2L1197 196.5L1196 195.8L1195 195.1L1194 194.4L1193 194.4L1192 194.5L1191 194.6L1190 194.7L1189 194.7L1188 194.8L1187 194.9L1186 195.2L1185 196.0L1184 197.0L1183 198.0L1182 199.0L1181 200.1L1180 201.2L1179 202.3L1178 203.5L1177 204.6L1176 205.9L1175 207.1L1174 208.4L1173 209.6L1172 208.9L1171 208.0L1170 207.0L1169 206.0L1168 205.1L1167 204.1L1166 203.1L1165 202.1L1164 201.1L1163 200.2L1162 199.2L1161 198.3L1160 197.4L1159 197.1L1158 197.1L1157 197.2L1156 197.2L1155 197.2L1154 197.2L1153 197.2L1152 197.4L1151 198.7L1150 200.1L1149 201.6L1148 203.2L1147 204.7L1146 206.3L1145 208.0L1144 209.6L1143 211.3L1142 213.0L1141 214.7L1140 216.5L1139 218.2L1138 220.0L1137 221.8L1136 221.4L1135 219.6L1134 217.9L1133 216.2L1132 214.5L1131 212.8L1130 211.1L1129 209.4L1128 207.8L1127 206.2L1126 204.6L1125 203.0L1124 201.5L1123 200.0L1122 198.6L1121 197.5L1120 197.5L1119 197.5L1118 197.5L1117 197.5L1116 197.5L1115 197.5L1114 197.6L1113 198.6L1112 199.8L1111 201.1L1110 202.4L1109 203.8L1108 205.3L1107 206.8L1106 208.3L1105 209.8L1104 211.4L1103 213.0L1102 214.6L1101 216.3L1100 215.6L1099 214.2L1098 212.9L1097 211.5L1096 210.1L1095 208.8L1094 207.4L1093 206.1L1092 204.7L1091 203.4L1090 202.1L1089 200.9L1088 199.8L1087 199.5L1086 199.6L1085 199.6L1084 199.7L1083 199.8L1082 199.8L1081 199.8L1080 200.6L1079 201.7L1078 202.9L1077 204.1L1076 205.4L1075 206.6L1074 207.9L1073 209.1L1072 210.4L1071 211.6L1070 212.9L1069 214.1L1068 215.3L1067 216.5L1066 215.4L1065 213.8L1064 212.2L1063 210.7L1062 209.2L1061 207.7L1060 206.2L1059 204.8L1058 203.5L1057 202.1L1056 200.8L1055 199.6L1054 198.4L1053 197.3L1052 197.1L1051 197.0L1050 196.9L1049 196.8L1048 196.7L1047 196.6L1046 196.5L1045 196.8L1044 197.6L1043 198.5L1042 199.4L1041 200.3L1040 201.2L1039 202.1L1038 203.0L1037 204.0L1036 204.9L1035 205.8L1034 206.6L1033 207.5L1032 208.4L1031 209.2L1030 209.0L1029 207.7L1028 206.4L1027 205.2L1026 204.0L1025 202.8L1024 201.7L1023 200.6L1022 199.5L1021 198.6L1020 197.6L1019 196.7L1018 195.8L1017 194.9L1016 194.1L1015 193.8L1014 193.7L1013 193.6L1012 193.6L1011 193.5L1010 193.5L1009 193.4L1008 193.5L1007 194.4L1006 195.4L1005 196.3L1004 197.3L1003 198.3L1002 199.4L1001 200.4L1000 201.4L999 202.4L998 203.4L997 204.4L996 205.4L995 206.4L994 207.2L993 205.9L992 204.6L991 203.3L990 202.1L989 201.0L988 200.0L987 199.0L986 197.9L985 196.9L984 196.0L983 195.0L982 194.1L981 193.2L980 192.4L979 192.3L978 192.3L977 192.3L976 192.4L975 192.4L974 192.4L973 192.4L972 192.8L971 193.6L970 194.4L969 195.3L968 196.3L967 197.2L966 198.2L965 199.2L964 200.2L963 201.2L962 202.2L961 203.3L960 204.3L959 205.4L958 206.4L957 206.8L956 205.8L955 204.7L954 203.7L953 202.7L952 201.7L951 200.7L950 199.7L949 198.7L948 197.8L947 196.8L946 195.9L945 195.0L944 194.1L943 193.2L942 192.6L941 192.6L940 192.6L939 192.7L938 192.8L937 192.9L936 193.0L935 193.1L934 193.9L933 194.8L932 195.8L931 196.9L930 198.0L929 199.1L928 200.3L927 201.5L926 202.8L925 204.1L924 205.4L923 206.8L922 208.2L921 207.7L920 206.7L919 205.8L918 204.8L917 203.8L916 202.8L915 201.8L914 200.8L913 199.8L912 198.8L911 197.8L910 196.8L909 195.9L908 195.8L907 195.9L906 196.0L905 196.1L904 196.2L903 196.3L902 196.5L901 198.0L900 199.7L899 201.5L898 203.4L897 205.4L896 207.4L895 209.5L894 211.7L893 213.9L892 216.1L891 218.4L890 220.8L889 222.4L888 220.6L887 218.7L886 216.9L885 215.0L884 213.2L883 211.3L882 209.5L881 207.6L880 205.8L879 204.0L878 202.2L877 200.5L876 199.5L875 199.6L874 199.7L873 199.8L872 200.0L871 200.1L870 200.2L869 200.3L868 201.8L867 203.4L866 205.1L865 207.0L864 208.8L863 210.8L862 212.7L861 214.8L860 216.8L859 219.0L858 221.1L857 223.3L856 225.3L855 227.4L854 229.5L853 231.6L852 229.6L851 227.7L850 225.8L849 223.8L848 222.0L847 220.1L846 218.2L845 216.3L844 214.5L843 212.7L842 210.9L841 209.2L840 207.5L839 205.8L838 204.3L837 203.0L836 203.0L835 203.1L834 203.1L833 203.2L832 203.3L831 203.4L830 203.5L829 204.8L828 206.9L827 209.1L826 211.3L825 213.7L824 216.1L823 218.6L822 221.1L821 223.7L820 226.4L819 229.1L818 231.8L817 234.5L816 234.9L815 232.6L814 230.3L813 228.0L812 225.7L811 223.4L810 221.1L809 218.9L808 216.6L807 214.4L806 212.3L805 210.2L804 208.2L803 207.0L802 207.1L801 207.2L800 207.4L799 207.5L798 207.6L797 207.7L796 208.1L795 210.1L794 212.2L793 214.5L792 216.8L791 218.9L790 221.1L789 223.3L788 225.5L787 227.7L786 230.0L785 232.2L784 234.4L783 236.7L782 238.9L781 239.6L780 237.0L779 234.4L778 231.9L777 229.4L776 226.9L775 224.5L774 222.2L773 219.8L772 217.6L771 215.3L770 213.2L769 211.1L768 209.1L767 207.2L766 206.3L765 206.2L764 206.2L763 206.1L762 206.0L761 205.9L760 205.9L759 206.0L758 207.3L757 208.8L756 210.3L755 211.9L754 213.5L753 215.1L752 216.7L751 218.4L750 220.0L749 221.7L748 223.3L747 225.0L746 226.7L745 228.3L744 226.5L743 224.5L742 222.6L741 220.7L740 218.8L739 217.0L738 215.2L737 213.5L736 211.7L735 210.1L734 208.4L733 206.9L732 205.4L731 204.0L730 203.8L729 203.7L728 203.6L727 203.5L726 203.5L725 203.4L724 203.3L723 203.4L722 204.7L721 206.1L720 207.5L719 209.0L718 210.6L717 212.1L716 213.7L715 215.3L714 216.8L713 218.4L712 220.0L711 221.6L710 223.4L709 225.3L708 227.1L707 229.0L706 228.7L705 227.0L704 225.3L703 223.6L702 221.9L701 220.3L700 218.6L699 216.9L698 215.3L697 213.6L696 212.0L695 210.4L694 208.8L693 207.3L692 205.8L691 204.4L690 203.3L689 203.3L688 203.3L687 203.4L686 203.4L685 203.5L684 203.5L683 203.6L682 204.4L681 206.1L680 207.9L679 209.8L678 211.8L677 213.8L676 215.8L675 217.9L674 220.1L673 222.2L672 224.4L671 226.6L670 228.9L669 231.1L668 229.2L667 227.1L666 225.0L665 222.9L664 220.9L663 218.9L662 216.8L661 214.9L660 212.9L659 211.0L658 209.1L657 207.3L656 205.6L655 204.7L654 204.7L653 204.8L652 204.8L651 204.9L650 204.9L649 204.9L648 206.0L647 208.0L646 210.1L645 212.3L644 214.5L643 216.9L642 219.2L641 221.7L640 224.1L639 226.6L638 229.1L637 231.7L636 234.3L635 236.4L634 234.0L633 231.6L632 229.2L631 226.8L630 224.4L629 222.0L628 219.7L627 217.4L626 215.1L625 212.9L624 210.7L623 208.6L622 206.7L621 206.0L620 206.1L619 206.1L618 206.1L617 206.2L616 206.2L615 206.3L614 207.4L613 208.7L612 210.0L611 211.4L610 212.8L609 214.3L608 215.7L607 217.2L606 218.6L605 220.1L604 221.6L603 223.0L602 224.1L601 222.3L600 220.5L599 218.8L598 217.1L597 215.4L596 213.7L595 212.1L594 210.6L593 209.1L592 207.6L591 206.2L590 204.9L589 204.0L588 204.0L587 203.9L586 203.8L585 203.7L584 203.6L583 203.5L582 204.1L581 205.4L580 206.7L579 208.1L578 209.6L577 211.1L576 212.5L575 214.0L574 215.4L573 216.8L572 218.2L571 219.6L570 221.0L569 222.3L568 222.8L567 220.9L566 219.0L565 217.1L564 215.3L563 213.5L562 211.8L561 210.1L560 208.5L559 206.9L558 205.4L557 203.9L556 202.5L555 201.2L554 200.0L553 199.9L552 199.7L551 199.6L550 199.4L549 199.3L548 199.2L547 199.2L546 200.3L545 201.5L544 202.7L543 203.9L542 205.2L541 206.4L540 207.6L539 208.8L538 210.0L537 211.2L536 212.3L535 213.5L534 213.7L533 212.0L532 210.4L531 208.8L530 207.2L529 205.8L528 204.4L527 203.1L526 201.8L525 200.6L524 199.5L523 198.5L522 197.5L521 197.1L520 197.1L519 197.2L518 197.2L517 197.2L516 197.2L515 197.2L514 197.3L513 197.9L512 198.6L511 199.2L510 199.9L509 200.5L508 201.1L507 201.7L506 202.2L505 202.8L504 203.3L503 203.8L502 204.2L501 204.6L500 205.1L499 205.4L498 205.2L497 204.4L496 203.6L495 202.8L494 202.0L493 201.5L492 200.9L491 200.4L490 199.9L489 199.4L488 198.9L487 198.4L486 198.0L485 197.6L484 197.3L483 197.0L482 196.9L481 196.9L480 196.9L479 197.0L478 197.0L477 197.0L476 197.0L475 197.0L474 197.1L473 197.3L472 197.5L471 197.7L470 197.8L469 198.0L468 198.2L467 198.3L466 198.5L465 198.6L464 198.7L463 198.9L462 199.0L461 199.1L460 199.2L459 199.2L458 199.3L457 199.1L456 198.9L455 198.7L454 198.6L453 198.4L452 198.2L451 198.0L450 197.9L449 197.7L448 197.6L447 197.5L446 197.3L445 197.2L444 197.1L443 197.0Z" fill="#666"/></g><g clip-path="url(#cr)"><path d="M444.5 167.8V200.2M446.5 169.9V200.4M448.5 168.0V200.3M450.5 167.3V198.8M452.5 168.6V200.4M454.5 165.6V199.6M456.5 166.0V201.4M458.5 166.6V201.5M460.5 165.0V201.0M462.5 164.7V202.6M464.5 163.4V201.6M466.5 164.4V202.7M468.5 163.6V202.4M470.5 163.3V203.2M472.5 164.7V203.8M474.5 161.9V203.7M476.5 163.1V203.5M478.5 163.0V203.4M480.5 162.1V204.2M482.5 159.9V202.6M484.5 160.1V204.4M486.5 160.5V203.2M488.5 159.6V203.3M490.5 159.7V204.2M492.5 158.6V206.0M494.5 158.3V204.7M496.5 158.1V204.1M498.5 158.1V205.6M500.5 158.3V206.4M502.5 156.5V206.1M504.5 157.7V209.1M506.5 157.0V206.7M508.5 155.6V207.7M510.5 154.3V209.1M512.5 155.6V209.5M514.5 153.9V209.6M516.5 152.8V210.4M518.5 151.9V211.4M520.5 151.9V211.4M522.5 150.0V212.6M524.5 151.8V212.3M526.5 151.9V213.0M528.5 150.3V214.4M530.5 150.1V214.1M532.5 148.2V215.3M534.5 149.0V216.0M536.5 147.5V217.6M538.5 145.4V217.9M540.5 146.7V218.1M542.5 145.0V218.1M544.5 144.0V220.1M546.5 144.5V219.6M548.5 144.4V219.5M550.5 142.4V220.7M552.5 142.6V220.7M554.5 141.8V223.1M556.5 141.6V224.8M558.5 140.4V223.2M560.5 139.3V223.7M562.5 136.8V225.8M564.5 137.5V224.8M566.5 135.1V225.5M568.5 136.8V226.5M570.5 135.3V228.2M572.5 133.0V229.5M574.5 133.7V230.9M576.5 132.3V230.4M578.5 132.4V229.6M580.5 132.4V230.2M582.5 129.8V232.1M584.5 130.6V231.2M586.5 129.1V233.4M588.5 127.7V231.9M590.5 127.5V232.2M592.5 128.6V232.7M594.5 126.2V233.8M596.5 126.0V233.6M598.5 126.6V235.0M600.5 125.3V235.8M602.5 124.1V234.7M604.5 126.8V236.5M606.5 125.9V238.1M608.5 126.2V236.2M610.5 126.3V237.5M612.5 126.3V237.7M614.5 126.5V238.7M616.5 127.3V240.2M618.5 127.9V240.1M620.5 127.7V239.1M622.5 127.8V237.0M624.5 128.7V239.6M626.5 129.2V237.4M628.5 128.7V237.1M630.5 130.4V237.5M632.5 129.1V238.3M634.5 130.9V238.8M636.5 130.0V235.8M638.5 132.9V235.6M640.5 131.7V235.5M642.5 131.8V235.3M644.5 131.8V236.4M646.5 132.0V235.7M648.5 134.9V236.4M650.5 132.6V236.0M652.5 134.0V236.1M654.5 134.2V235.4M656.5 134.0V234.8M658.5 136.6V234.6M660.5 135.2V233.8M662.5 135.6V233.5M664.5 135.9V234.0M666.5 137.0V233.9M668.5 138.8V234.7M670.5 137.8V235.0M672.5 139.1V234.4M674.5 138.4V232.5M676.5 138.5V234.0M678.5 140.4V233.4M680.5 138.8V232.6M682.5 140.7V232.0M684.5 140.2V231.2M686.5 141.8V231.2M688.5 142.1V232.1M690.5 140.8V231.5M692.5 142.1V231.7M694.5 142.8V233.1M696.5 144.0V231.2M698.5 142.1V231.5M700.5 143.5V230.2M702.5 144.4V230.5M704.5 144.2V229.9M706.5 146.1V230.8M708.5 146.4V230.3M710.5 144.6V230.8M712.5 147.2V229.7M714.5 147.3V231.5M716.5 147.5V231.2M718.5 147.5V229.9M720.5 148.6V232.4M722.5 150.2V233.4M724.5 150.0V233.4M726.5 151.0V233.0M728.5 149.8V232.9M730.5 152.3V233.1M732.5 152.9V232.8M734.5 154.2V235.7M736.5 154.1V235.2M738.5 155.2V234.5M740.5 153.4V234.1M742.5 153.9V237.2M744.5 152.8V235.2M746.5 153.5V236.4M748.5 151.9V236.5M750.5 151.2V238.0M752.5 150.6V238.2M754.5 152.3V238.1M756.5 152.5V238.1M758.5 152.4V238.2M760.5 150.9V239.8M762.5 150.7V240.3M764.5 148.8V240.2M766.5 149.2V241.7M768.5 148.5V241.7M770.5 147.7V240.5M772.5 147.4V242.2M774.5 148.7V243.2M776.5 148.8V244.0M778.5 145.9V241.8M780.5 146.3V243.3M782.5 145.0V243.6M784.5 144.6V244.6M786.5 145.3V246.1M788.5 145.7V245.8M790.5 144.4V245.1M792.5 143.6V245.4M794.5 144.7V245.7M796.5 144.7V245.0M798.5 142.6V244.9M800.5 142.0V243.8M802.5 142.7V244.6M804.5 143.8V241.3M806.5 141.2V241.5M808.5 142.5V240.4M810.5 142.1V241.1M812.5 143.4V241.2M814.5 141.5V240.9M816.5 142.9V240.0M818.5 140.0V239.8M820.5 142.2V239.7M822.5 141.8V239.1M824.5 140.6V238.8M826.5 140.4V236.2M828.5 141.0V235.2M830.5 139.0V235.4M832.5 139.2V233.8M834.5 140.2V233.8M836.5 140.9V233.3M838.5 138.7V235.3M840.5 138.1V234.5M842.5 137.6V233.1M844.5 138.2V234.0M846.5 137.6V234.1M848.5 138.8V232.7M850.5 136.4V234.4M852.5 138.0V234.3M854.5 136.0V232.9M856.5 136.5V232.9M858.5 136.8V232.8M860.5 138.8V233.6M862.5 139.1V230.2M864.5 138.1V230.5M866.5 138.5V231.3M868.5 138.6V229.9M870.5 137.6V227.8M872.5 140.7V227.8M874.5 140.3V227.1M876.5 139.5V227.6M878.5 141.3V226.5M880.5 139.4V224.7M882.5 139.3V224.1M884.5 142.2V223.5M886.5 142.1V224.6M888.5 143.0V222.5M890.5 140.8V221.7M892.5 143.5V223.1M894.5 143.7V220.7M896.5 142.5V219.7M898.5 144.6V220.5M900.5 143.1V221.3M902.5 143.7V218.1M904.5 144.9V217.8M906.5 145.4V218.0M908.5 144.5V216.9M910.5 147.8V217.2M912.5 148.5V217.4M914.5 147.9V215.4M916.5 150.1V215.6M918.5 151.5V214.1M920.5 152.8V214.2M922.5 152.5V213.8M924.5 153.6V212.3M926.5 155.5V211.9M928.5 155.3V210.6M930.5 158.1V211.0M932.5 157.2V209.0M934.5 157.2V209.8M936.5 158.7V208.0M938.5 159.3V207.4M940.5 159.4V207.3M942.5 159.8V207.1M944.5 160.0V208.3M946.5 161.7V208.0M948.5 162.5V207.7M950.5 161.8V207.8M952.5 161.3V207.7M954.5 161.3V206.8M956.5 161.6V209.2M958.5 161.7V207.5M960.5 161.9V208.2M962.5 162.1V207.1M964.5 161.6V208.3M966.5 163.1V207.4M968.5 162.0V206.9M970.5 162.4V207.1M972.5 163.0V208.1M974.5 163.5V206.8M976.5 161.3V208.3M978.5 161.6V207.3M980.5 161.1V206.2M982.5 160.5V208.0M984.5 159.0V207.1M986.5 159.7V208.1M988.5 158.1V206.7M990.5 156.3V205.5M992.5 156.9V207.4M994.5 156.1V207.3M996.5 154.4V208.6M998.5 154.8V207.4M1000.5 153.8V207.6M1002.5 153.1V209.1M1004.5 152.3V210.3M1006.5 150.9V210.6M1008.5 148.4V211.4M1010.5 147.7V210.2M1012.5 147.0V210.2M1014.5 146.8V212.1M1016.5 148.0V212.9M1018.5 145.5V211.9M1020.5 144.9V213.3M1022.5 144.7V213.6M1024.5 144.3V213.0M1026.5 143.7V214.5M1028.5 141.3V213.7M1030.5 140.1V215.2M1032.5 139.0V216.0M1034.5 138.8V214.8M1036.5 137.4V215.3M1038.5 138.8V216.9M1040.5 136.0V216.5M1042.5 137.7V218.5M1044.5 138.0V219.5M1046.5 136.4V219.6M1048.5 135.9V221.3M1050.5 135.6V221.4M1052.5 137.0V221.3M1054.5 137.0V221.5M1056.5 136.1V221.5M1058.5 136.7V221.9M1060.5 136.6V222.8M1062.5 136.1V224.9M1064.5 136.7V224.4M1066.5 137.2V225.1M1068.5 138.5V225.2M1070.5 138.3V227.7M1072.5 139.9V228.3M1074.5 140.0V227.1M1076.5 140.7V228.3M1078.5 141.6V229.4M1080.5 142.1V228.3M1082.5 142.2V229.6M1084.5 142.4V229.4M1086.5 142.7V229.9M1088.5 143.2V229.1M1090.5 143.6V228.2M1092.5 145.8V227.9M1094.5 145.8V228.5M1096.5 145.2V227.4M1098.5 145.6V227.5M1100.5 145.9V227.3M1102.5 147.2V226.4M1104.5 145.7V225.1M1106.5 146.2V225.3M1108.5 147.0V223.8M1110.5 147.9V223.3M1112.5 147.7V224.8M1114.5 147.4V223.5M1116.5 146.8V223.0M1118.5 147.0V222.1M1120.5 147.8V222.7M1122.5 148.0V224.3M1124.5 147.7V221.6M1126.5 150.3V223.7M1128.5 148.1V222.0M1130.5 149.8V222.6M1132.5 150.2V223.6M1134.5 150.4V222.7M1136.5 148.6V221.1M1138.5 148.1V221.2M1140.5 150.7V222.4M1142.5 149.6V221.8M1144.5 149.8V223.4M1146.5 148.4V220.8M1148.5 148.0V221.6M1150.5 150.0V222.4M1152.5 148.9V223.4M1154.5 150.6V222.8M1156.5 150.6V222.6M1158.5 150.4V221.9M1160.5 150.3V221.2M1162.5 150.4V221.0M1164.5 150.7V219.7M1166.5 151.9V218.8M1168.5 150.8V218.2M1170.5 152.0V218.3M1172.5 151.2V218.2M1174.5 152.1V218.6M1176.5 151.9V216.9M1178.5 152.3V217.0M1180.5 153.8V217.3M1182.5 154.3V217.5M1184.5 154.1V216.2M1186.5 154.2V215.6M1188.5 156.4V215.4M1190.5 154.8V214.6M1192.5 157.0V213.0M1194.5 157.4V214.1M1196.5 157.1V213.1M1198.5 158.5V213.8M1200.5 158.8V212.7M1202.5 157.8V212.7M1204.5 160.8V213.8M1206.5 159.8V214.3M1208.5 160.0V214.0M1210.5 161.5V214.5M1212.5 161.6V213.6M1214.5 160.8V215.1M1216.5 161.0V213.0M1218.5 161.7V215.0M1220.5 162.5V215.4M1222.5 161.5V214.0M1224.5 161.1V214.0M1226.5 161.7V214.0M1228.5 162.0V213.8M1230.5 161.0V215.9M1232.5 162.8V215.4M1234.5 163.3V214.0M1236.5 160.4V214.9M1238.5 162.5V216.7M1240.5 161.7V217.1M1242.5 163.2V216.2M1244.5 161.5V216.3M1246.5 163.0V216.3M1248.5 160.6V216.5M1250.5 162.4V217.5M1252.5 161.0V217.6M1254.5 158.6V216.7M1256.5 160.1V217.8M1258.5 159.1V217.8M1260.5 157.3V217.8M1262.5 157.6V220.1M1264.5 159.0V220.4M1266.5 158.3V220.5M1268.5 155.5V220.7M1270.5 157.5V222.3M1272.5 154.8V222.8M1274.5 156.6V221.2M1276.5 156.3V223.3M1278.5 153.2V222.0M1280.5 154.6V221.6M1282.5 152.6V222.6M1284.5 152.3V223.6M1286.5 153.3V225.5M1288.5 150.8V223.7M1290.5 151.9V224.9M1292.5 150.1V224.6M1294.5 151.9V227.2M1296.5 149.3V227.1M1298.5 150.6V228.0M1300.5 148.1V227.6M1302.5 147.9V228.0M1304.5 148.5V228.1M1306.5 148.3V229.9M1308.5 147.8V229.7M1310.5 145.4V228.1M1312.5 145.3V228.6M1314.5 145.4V230.3M1316.5 146.2V230.2M1318.5 145.5V231.9M1320.5 145.4V232.6M1322.5 144.2V232.8M1324.5 143.8V232.4M1326.5 144.2V233.6M1328.5 142.8V232.7M1330.5 145.2V234.7M1332.5 143.5V234.6M1334.5 144.0V235.5M1336.5 143.1V236.5M1338.5 143.5V234.3M1340.5 143.0V234.0M1342.5 144.5V234.5M1344.5 143.1V235.0M1346.5 142.8V234.5M1348.5 146.0V233.1M1350.5 145.0V233.0M1352.5 145.3V234.5M1354.5 145.7V233.3M1356.5 146.0V232.3M1358.5 145.3V232.8M1360.5 146.9V231.4M1362.5 146.8V231.4M1364.5 146.6V232.4M1366.5 147.7V231.1M1368.5 147.5V231.1M1370.5 146.9V229.2M1372.5 148.5V229.0M1374.5 147.7V230.5M1376.5 147.6V230.8M1378.5 149.7V230.1M1380.5 150.3V230.0M1382.5 151.1V230.1M1384.5 150.6V228.6M1386.5 150.1V230.1M1388.5 151.9V229.7M1390.5 152.8V230.6M1392.5 153.5V229.3M1394.5 154.1V229.2M1396.5 154.7V231.4M1398.5 155.0V231.6M1400.5 154.3V232.4M1402.5 156.8V232.7M1404.5 156.6V231.1M1406.5 155.8V231.8M1408.5 157.1V231.5M1410.5 157.5V231.1M1412.5 154.9V233.4M1414.5 156.1V232.7M1416.5 152.9V231.5M1418.5 153.7V232.5M1420.5 151.3V231.4M1422.5 152.6V231.0M1424.5 154.8V231.2M1426.5 156.1V228.0M1428.5 156.1V225.6M1430.5 158.3V225.1M1432.5 157.6V222.5M1434.5 157.9V220.8M1436.5 162.2V218.2M1438.5 165.9V212.9M1440.5 168.5V208.6M1442.5 171.6V205.0M1444.5 176.4V197.6M1446.5 179.3V194.5M1448.5 180.9V188.5M1450.5 184.1V184.0" stroke="#3d3d3d" stroke-width="1.1" fill="none"/><path d="M443 171.4L444 171.3L445 171.2L446 171.2L447 171.1L448 170.9L449 170.6L450 170.4L451 170.1L452 169.8L453 169.5L454 169.2L455 168.8L456 168.4L457 168.1L458 167.7L459 167.2L460 166.8L461 166.3L462 165.8L463 165.9L464 166.1L465 166.3L466 166.5L467 166.7L468 166.9L469 167.2L470 167.5L471 167.8L472 168.1L473 168.4L474 168.7L475 169.1L476 169.4L477 169.8L478 169.9L479 169.9L480 169.9L481 169.9L482 169.9L483 169.9L484 169.9L485 169.9L486 169.5L487 169.0L488 168.5L489 167.9L490 167.3L491 166.6L492 165.9L493 165.2L494 164.4L495 163.5L496 162.6L497 161.7L498 160.7L499 159.7L500 158.7L501 157.6L502 157.8L503 158.5L504 159.1L505 159.8L506 160.6L507 161.3L508 162.1L509 162.9L510 163.7L511 164.6L512 165.4L513 166.3L514 167.2L515 168.2L516 169.1L517 169.9L518 170.1L519 170.1L520 170.2L521 170.2L522 170.3L523 170.3L524 170.4L525 170.4L526 169.7L527 168.6L528 167.5L529 166.3L530 165.0L531 163.6L532 162.1L533 160.5L534 159.0L535 157.3L536 155.6L537 153.8L538 152.0L539 150.1L540 148.2L541 146.7L542 147.9L543 149.2L544 150.4L545 151.7L546 153.0L547 154.4L548 155.7L549 157.1L550 158.4L551 159.8L552 161.1L553 162.5L554 163.8L555 165.1L556 166.4L557 167.0L558 166.8L559 166.7L560 166.6L561 166.4L562 166.3L563 166.1L564 165.8L565 164.2L566 162.4L567 160.5L568 158.6L569 156.6L570 154.6L571 152.5L572 150.3L573 148.1L574 145.9L575 143.6L576 141.2L577 140.0L578 141.8L579 143.7L580 145.5L581 147.4L582 149.2L583 151.1L584 152.9L585 154.8L586 156.6L587 158.4L588 160.1L589 161.7L590 162.6L591 162.5L592 162.3L593 162.2L594 162.1L595 161.9L596 161.8L597 161.7L598 160.2L599 158.4L600 156.6L601 154.9L602 153.2L603 151.4L604 149.7L605 147.9L606 146.1L607 144.3L608 142.4L609 140.6L610 138.8L611 136.9L612 135.1L613 133.3L614 133.1L615 135.2L616 137.3L617 139.4L618 141.4L619 143.5L620 145.5L621 147.4L622 149.4L623 151.3L624 153.2L625 155.0L626 156.8L627 158.5L628 160.2L629 161.8L630 163.2L631 163.5L632 163.6L633 163.7L634 163.7L635 163.8L636 163.9L637 164.0L638 164.1L639 163.6L640 162.6L641 161.6L642 160.5L643 159.4L644 158.3L645 157.1L646 156.0L647 154.9L648 153.7L649 152.5L650 151.4L651 150.2L652 149.0L653 147.9L654 146.7L655 146.1L656 147.5L657 149.0L658 150.4L659 151.8L660 153.2L661 154.6L662 155.9L663 157.2L664 158.5L665 159.8L666 161.0L667 162.2L668 163.4L669 164.6L670 165.6L671 166.6L672 166.8L673 166.9L674 167.0L675 167.1L676 167.2L677 167.2L678 167.3L679 167.4L680 166.5L681 165.4L682 164.3L683 163.2L684 162.0L685 160.8L686 159.6L687 158.4L688 157.2L689 156.0L690 154.8L691 153.6L692 152.4L693 151.2L694 151.0L695 152.5L696 153.9L697 155.4L698 156.8L699 158.2L700 159.6L701 161.0L702 162.3L703 163.6L704 164.9L705 166.1L706 167.3L707 168.4L708 169.4L709 169.8L710 169.8L711 169.9L712 170.0L713 170.2L714 170.3L715 170.4L716 170.3L717 169.4L718 168.4L719 167.4L720 166.3L721 165.3L722 164.2L723 163.2L724 162.1L725 161.1L726 160.1L727 159.0L728 158.0L729 157.0L730 156.0L731 155.7L732 157.2L733 158.7L734 160.1L735 161.5L736 162.8L737 164.2L738 165.5L739 166.5L740 167.4L741 168.4L742 169.4L743 170.3L744 171.3L745 172.1L746 172.6L747 172.6L748 172.5L749 172.5L750 172.4L751 172.4L752 172.3L753 172.0L754 171.0L755 170.0L756 168.9L757 167.7L758 166.5L759 165.3L760 164.0L761 162.8L762 161.5L763 160.1L764 158.8L765 157.4L766 157.2L767 158.3L768 159.4L769 160.5L770 161.7L771 162.8L772 163.9L773 165.0L774 166.1L775 167.2L776 168.2L777 169.3L778 170.2L779 170.5L780 170.4L781 170.3L782 170.2L783 170.1L784 170.0L785 170.0L786 168.6L787 167.1L788 165.4L789 163.6L790 161.8L791 159.9L792 158.0L793 156.1L794 154.2L795 152.2L796 150.2L797 148.2L798 146.2L799 144.2L800 146.1L801 148.0L802 149.9L803 151.7L804 153.6L805 155.4L806 157.3L807 159.1L808 160.9L809 162.7L810 164.4L811 166.1L812 167.7L813 168.9L814 168.9L815 168.9L816 168.9L817 168.9L818 168.8L819 168.8L820 168.8L821 168.2L822 167.2L823 166.2L824 165.1L825 163.9L826 162.7L827 161.5L828 160.3L829 159.0L830 157.8L831 156.5L832 155.1L833 153.8L834 152.4L835 151.0L836 149.6L837 150.3L838 151.6L839 152.8L840 154.1L841 155.3L842 156.6L843 157.8L844 159.0L845 160.2L846 161.5L847 162.7L848 163.8L849 165.0L850 166.1L851 167.2L852 168.2L853 168.2L854 168.2L855 168.2L856 168.1L857 168.1L858 168.2L859 168.3L860 168.4L861 167.5L862 166.5L863 165.4L864 164.3L865 163.2L866 162.1L867 160.9L868 159.7L869 158.5L870 157.4L871 156.2L872 155.0L873 153.8L874 152.5L875 151.3L876 150.1L877 151.5L878 153.0L879 154.4L880 155.8L881 157.2L882 158.6L883 159.9L884 161.3L885 162.6L886 163.9L887 165.1L888 166.3L889 167.5L890 168.7L891 169.8L892 170.8L893 170.8L894 170.9L895 171.0L896 171.1L897 171.2L898 171.2L899 171.3L900 171.3L901 170.4L902 169.4L903 168.4L904 167.4L905 166.3L906 165.3L907 164.2L908 163.3L909 162.4L910 161.6L911 160.7L912 159.9L913 159.1L914 158.4L915 157.6L916 159.0L917 160.4L918 161.9L919 163.2L920 164.6L921 165.9L922 167.1L923 168.4L924 169.5L925 170.7L926 171.8L927 172.8L928 173.8L929 174.7L930 175.6L931 175.9L932 176.1L933 176.2L934 176.2L935 176.3L936 176.4L937 176.4L938 175.9L939 174.9L940 173.8L941 172.7L942 171.6L943 170.4L944 169.3L945 168.2L946 167.1L947 165.9L948 164.8L949 163.7L950 162.6L951 163.6L952 165.1L953 166.5L954 167.8L955 169.1L956 170.4L957 171.7L958 172.8L959 173.8L960 174.9L961 175.9L962 176.8L963 177.7L964 177.7L965 177.7L966 177.6L967 177.6L968 177.6L969 177.6L970 177.4L971 176.8L972 176.1L973 175.3L974 174.4L975 173.5L976 172.6L977 171.6L978 170.5L979 169.5L980 168.4L981 167.2L982 166.1L983 164.9L984 165.2L985 165.9L986 166.6L987 167.4L988 168.1L989 168.9L990 169.7L991 170.5L992 171.2L993 172.0L994 172.8L995 173.5L996 174.3L997 174.8L998 174.7L999 174.6L1000 174.4L1001 174.3L1002 174.2L1003 174.0L1004 173.9L1005 173.3L1006 172.1L1007 170.7L1008 169.3L1009 167.9L1010 166.3L1011 164.8L1012 163.1L1013 161.4L1014 159.7L1015 157.9L1016 156.1L1017 154.2L1018 152.3L1019 150.4L1020 148.4L1021 146.3L1022 147.0L1023 148.3L1024 149.7L1025 151.0L1026 152.4L1027 153.8L1028 155.3L1029 156.7L1030 158.2L1031 159.7L1032 161.1L1033 162.6L1034 164.1L1035 165.5L1036 167.0L1037 168.3L1038 169.4L1039 169.3L1040 169.2L1041 169.1L1042 169.1L1043 169.1L1044 169.1L1045 169.1L1046 168.4L1047 166.5L1048 164.4L1049 162.2L1050 160.0L1051 157.6L1052 155.3L1053 152.9L1054 150.5L1055 148.0L1056 145.5L1057 142.9L1058 140.7L1059 138.4L1060 138.4L1061 141.2L1062 143.9L1063 146.5L1064 149.1L1065 151.6L1066 154.1L1067 156.5L1068 158.9L1069 161.2L1070 163.4L1071 165.6L1072 167.6L1073 169.5L1074 170.4L1075 170.4L1076 170.5L1077 170.6L1078 170.7L1079 170.8L1080 170.9L1081 170.7L1082 169.5L1083 168.1L1084 166.7L1085 165.3L1086 163.8L1087 162.4L1088 160.9L1089 159.5L1090 158.0L1091 156.5L1092 154.9L1093 153.3L1094 151.8L1095 150.2L1096 149.6L1097 151.4L1098 153.2L1099 154.9L1100 156.6L1101 158.3L1102 160.0L1103 161.6L1104 163.2L1105 164.8L1106 166.3L1107 167.8L1108 169.2L1109 170.6L1110 171.9L1111 172.6L1112 172.7L1113 172.7L1114 172.8L1115 172.8L1116 172.8L1117 172.9L1118 172.7L1119 171.3L1120 169.8L1121 168.2L1122 166.6L1123 164.9L1124 163.2L1125 161.5L1126 159.7L1127 157.9L1128 156.1L1129 154.2L1130 152.4L1131 150.5L1132 150.8L1133 152.7L1134 154.6L1135 156.5L1136 158.3L1137 160.1L1138 161.9L1139 163.7L1140 165.4L1141 167.1L1142 168.8L1143 170.4L1144 171.9L1145 173.2L1146 173.3L1147 173.3L1148 173.3L1149 173.3L1150 173.3L1151 173.3L1152 173.4L1153 172.7L1154 171.5L1155 170.2L1156 168.8L1157 167.5L1158 166.1L1159 164.7L1160 163.3L1161 161.9L1162 160.5L1163 159.0L1164 157.6L1165 156.2L1166 154.7L1167 153.3L1168 152.2L1169 153.9L1170 155.5L1171 157.1L1172 158.7L1173 160.3L1174 161.9L1175 163.4L1176 164.9L1177 166.3L1178 167.8L1179 169.2L1180 170.5L1181 171.8L1182 173.1L1183 174.3L1184 174.8L1185 174.9L1186 175.0L1187 175.1L1188 175.1L1189 175.2L1190 175.3L1191 175.4L1192 175.2L1193 174.5L1194 173.9L1195 173.2L1196 172.6L1197 171.9L1198 171.2L1199 170.6L1200 169.9L1201 169.3L1202 168.6L1203 168.0L1204 167.4L1205 166.7L1206 166.1L1207 165.5L1208 165.3L1209 166.3L1210 167.2L1211 168.2L1212 169.1L1213 170.0L1214 170.9L1215 171.8L1216 172.4L1217 173.1L1218 173.8L1219 174.4L1220 175.1L1221 175.7L1222 176.3L1223 176.9L1224 177.4L1225 177.5L1226 177.5L1227 177.4L1228 177.4L1229 177.4L1230 177.4L1231 177.4L1232 177.3L1233 176.7L1234 176.1L1235 175.4L1236 174.7L1237 174.0L1238 173.2L1239 172.5L1240 171.7L1241 170.9L1242 170.2L1243 169.4L1244 168.6L1245 167.7L1246 166.9L1247 167.6L1248 168.2L1249 168.8L1250 169.5L1251 170.2L1252 170.8L1253 171.5L1254 172.2L1255 172.9L1256 173.5L1257 174.2L1258 174.9L1259 175.5L1260 176.1L1261 176.2L1262 176.1L1263 176.1L1264 176.0L1265 175.9L1266 175.8L1267 175.8L1268 175.2L1269 174.3L1270 173.4L1271 172.5L1272 171.5L1273 170.5L1274 169.4L1275 168.3L1276 167.2L1277 166.1L1278 164.9L1279 163.7L1280 162.5L1281 162.0L1282 162.9L1283 163.8L1284 164.7L1285 165.6L1286 166.5L1287 167.5L1288 168.4L1289 169.3L1290 170.2L1291 171.1L1292 172.0L1293 172.9L1294 173.6L1295 173.5L1296 173.4L1297 173.4L1298 173.3L1299 173.2L1300 173.1L1301 172.9L1302 171.6L1303 170.2L1304 168.7L1305 167.2L1306 165.6L1307 163.9L1308 162.2L1309 160.5L1310 158.7L1311 156.9L1312 155.1L1313 153.3L1314 151.5L1315 150.1L1316 151.7L1317 153.4L1318 155.0L1319 156.6L1320 158.2L1321 159.8L1322 161.4L1323 163.0L1324 164.5L1325 166.1L1326 167.6L1327 169.0L1328 170.4L1329 171.4L1330 171.4L1331 171.4L1332 171.3L1333 171.3L1334 171.2L1335 171.2L1336 170.6L1337 169.0L1338 167.3L1339 165.6L1340 163.8L1341 162.0L1342 160.1L1343 158.2L1344 156.4L1345 154.5L1346 152.6L1347 150.7L1348 148.8L1349 149.4L1350 151.5L1351 153.5L1352 155.6L1353 157.6L1354 159.6L1355 161.5L1356 163.4L1357 165.3L1358 167.1L1359 168.8L1360 170.5L1361 171.9L1362 172.2L1363 172.3L1364 172.3L1365 172.3L1366 172.4L1367 172.4L1368 172.4L1369 171.4L1370 170.3L1371 169.2L1372 168.0L1373 166.8L1374 165.6L1375 164.4L1376 163.1L1377 162.0L1378 160.8L1379 159.7L1380 158.6L1381 157.4L1382 156.3L1383 157.6L1384 159.2L1385 160.6L1386 162.1L1387 163.5L1388 164.9L1389 166.3L1390 167.6L1391 168.9L1392 170.1L1393 171.3L1394 172.4L1395 173.5L1396 174.5L1397 174.7L1398 174.8L1399 174.9L1400 175.0L1401 175.1L1402 175.2L1403 175.3L1404 175.3L1405 174.6L1406 173.9L1407 173.1L1408 172.4L1409 171.3L1410 170.1L1411 169.0L1412 167.8L1413 166.5L1414 165.2L1415 163.9L1416 162.6L1417 161.2L1418 159.7L1419 158.3L1420 157.1L1421 157.9L1422 159.6L1423 161.2L1424 162.7L1425 164.2L1426 165.6L1427 167.0L1428 168.3L1429 169.6L1430 170.9L1431 172.0L1432 173.2L1433 174.2L1434 175.2L1435 176.2L1436 177.3L1437 177.8L1438 178.4L1439 178.9L1440 179.5L1441 180.1L1442 180.6L1443 181.2L1444 181.6L1445 181.9L1446 182.3L1447 182.8L1448 183.4L1449 184.1L1450 185.0L1450 185.0L1449 185.8L1448 186.5L1447 187.3L1446 188.1L1445 188.8L1444 189.6L1443 190.5L1442 191.7L1441 193.0L1440 194.5L1439 196.1L1438 197.9L1437 199.8L1436 201.8L1435 203.9L1434 205.4L1433 207.0L1432 208.6L1431 210.3L1430 212.0L1429 213.8L1428 215.7L1427 217.1L1426 216.5L1425 215.9L1424 215.2L1423 214.5L1422 213.7L1421 212.9L1420 211.6L1419 210.2L1418 208.8L1417 207.5L1416 206.2L1415 205.0L1414 203.7L1413 202.5L1412 201.4L1411 200.5L1410 200.4L1409 200.4L1408 200.4L1407 200.4L1406 200.4L1405 200.3L1404 200.3L1403 201.4L1402 203.0L1401 204.8L1400 206.6L1399 208.4L1398 210.3L1397 212.2L1396 214.1L1395 216.0L1394 218.0L1393 220.0L1392 222.0L1391 224.0L1390 222.5L1389 220.4L1388 218.4L1387 216.3L1386 214.3L1385 212.3L1384 210.3L1383 208.4L1382 206.6L1381 204.7L1380 203.0L1379 201.3L1378 199.8L1377 199.7L1376 199.7L1375 199.7L1374 199.8L1373 199.8L1372 199.9L1371 200.6L1370 202.5L1369 204.6L1368 206.9L1367 209.2L1366 211.5L1365 213.9L1364 216.4L1363 219.0L1362 221.5L1361 224.1L1360 226.8L1359 229.5L1358 230.2L1357 227.8L1356 225.4L1355 223.0L1354 220.5L1353 218.2L1352 215.8L1351 213.4L1350 211.1L1349 208.8L1348 206.6L1347 204.4L1346 202.4L1345 201.3L1344 201.3L1343 201.4L1342 201.4L1341 201.5L1340 201.6L1339 201.6L1338 202.2L1337 203.8L1336 205.4L1335 207.0L1334 208.6L1333 210.3L1332 211.9L1331 213.6L1330 215.2L1329 216.9L1328 218.5L1327 220.2L1326 221.9L1325 223.5L1324 225.2L1323 223.8L1322 221.7L1321 219.8L1320 217.8L1319 215.9L1318 214.0L1317 212.2L1316 210.4L1315 208.6L1314 206.9L1313 205.2L1312 203.6L1311 202.1L1310 200.6L1309 199.6L1308 199.6L1307 199.5L1306 199.4L1305 199.3L1304 199.2L1303 199.2L1302 199.1L1301 200.0L1300 201.4L1299 202.9L1298 204.4L1297 205.9L1296 207.5L1295 209.0L1294 210.6L1293 212.2L1292 213.8L1291 215.4L1290 217.1L1289 218.7L1288 220.3L1287 221.8L1286 221.4L1285 219.4L1284 217.5L1283 215.6L1282 213.8L1281 212.0L1280 210.2L1279 208.5L1278 206.8L1277 205.1L1276 203.5L1275 202.0L1274 200.4L1273 199.0L1272 197.7L1271 197.0L1270 196.9L1269 196.8L1268 196.8L1267 196.7L1266 196.6L1265 196.6L1264 196.5L1263 197.3L1262 198.2L1261 199.2L1260 200.1L1259 201.1L1258 202.1L1257 203.1L1256 204.1L1255 205.1L1254 206.1L1253 207.1L1252 208.1L1251 209.1L1250 210.1L1249 209.7L1248 208.4L1247 207.2L1246 206.0L1245 204.9L1244 203.8L1243 202.7L1242 201.6L1241 200.6L1240 199.5L1239 198.5L1238 197.5L1237 196.6L1236 195.7L1235 195.1L1234 195.0L1233 195.0L1232 195.0L1231 195.0L1230 194.9L1229 194.9L1228 194.9L1227 195.1L1226 195.8L1225 196.7L1224 197.5L1223 198.4L1222 199.3L1221 200.2L1220 201.1L1219 202.0L1218 203.0L1217 203.9L1216 204.8L1215 205.8L1214 206.7L1213 207.7L1212 208.6L1211 209.5L1210 209.2L1209 208.1L1208 207.1L1207 206.0L1206 205.0L1205 204.0L1204 202.9L1203 202.0L1202 201.0L1201 200.0L1200 199.1L1199 198.1L1198 197.2L1197 196.5L1196 195.8L1195 195.1L1194 194.4L1193 194.4L1192 194.5L1191 194.6L1190 194.7L1189 194.7L1188 194.8L1187 194.9L1186 195.2L1185 196.0L1184 197.0L1183 198.0L1182 199.0L1181 200.1L1180 201.2L1179 202.3L1178 203.5L1177 204.6L1176 205.9L1175 207.1L1174 208.4L1173 209.6L1172 208.9L1171 208.0L1170 207.0L1169 206.0L1168 205.1L1167 204.1L1166 203.1L1165 202.1L1164 201.1L1163 200.2L1162 199.2L1161 198.3L1160 197.4L1159 197.1L1158 197.1L1157 197.2L1156 197.2L1155 197.2L1154 197.2L1153 197.2L1152 197.4L1151 198.7L1150 200.1L1149 201.6L1148 203.2L1147 204.7L1146 206.3L1145 208.0L1144 209.6L1143 211.3L1142 213.0L1141 214.7L1140 216.5L1139 218.2L1138 220.0L1137 221.8L1136 221.4L1135 219.6L1134 217.9L1133 216.2L1132 214.5L1131 212.8L1130 211.1L1129 209.4L1128 207.8L1127 206.2L1126 204.6L1125 203.0L1124 201.5L1123 200.0L1122 198.6L1121 197.5L1120 197.5L1119 197.5L1118 197.5L1117 197.5L1116 197.5L1115 197.5L1114 197.6L1113 198.6L1112 199.8L1111 201.1L1110 202.4L1109 203.8L1108 205.3L1107 206.8L1106 208.3L1105 209.8L1104 211.4L1103 213.0L1102 214.6L1101 216.3L1100 215.6L1099 214.2L1098 212.9L1097 211.5L1096 210.1L1095 208.8L1094 207.4L1093 206.1L1092 204.7L1091 203.4L1090 202.1L1089 200.9L1088 199.8L1087 199.5L1086 199.6L1085 199.6L1084 199.7L1083 199.8L1082 199.8L1081 199.8L1080 200.6L1079 201.7L1078 202.9L1077 204.1L1076 205.4L1075 206.6L1074 207.9L1073 209.1L1072 210.4L1071 211.6L1070 212.9L1069 214.1L1068 215.3L1067 216.5L1066 215.4L1065 213.8L1064 212.2L1063 210.7L1062 209.2L1061 207.7L1060 206.2L1059 204.8L1058 203.5L1057 202.1L1056 200.8L1055 199.6L1054 198.4L1053 197.3L1052 197.1L1051 197.0L1050 196.9L1049 196.8L1048 196.7L1047 196.6L1046 196.5L1045 196.8L1044 197.6L1043 198.5L1042 199.4L1041 200.3L1040 201.2L1039 202.1L1038 203.0L1037 204.0L1036 204.9L1035 205.8L1034 206.6L1033 207.5L1032 208.4L1031 209.2L1030 209.0L1029 207.7L1028 206.4L1027 205.2L1026 204.0L1025 202.8L1024 201.7L1023 200.6L1022 199.5L1021 198.6L1020 197.6L1019 196.7L1018 195.8L1017 194.9L1016 194.1L1015 193.8L1014 193.7L1013 193.6L1012 193.6L1011 193.5L1010 193.5L1009 193.4L1008 193.5L1007 194.4L1006 195.4L1005 196.3L1004 197.3L1003 198.3L1002 199.4L1001 200.4L1000 201.4L999 202.4L998 203.4L997 204.4L996 205.4L995 206.4L994 207.2L993 205.9L992 204.6L991 203.3L990 202.1L989 201.0L988 200.0L987 199.0L986 197.9L985 196.9L984 196.0L983 195.0L982 194.1L981 193.2L980 192.4L979 192.3L978 192.3L977 192.3L976 192.4L975 192.4L974 192.4L973 192.4L972 192.8L971 193.6L970 194.4L969 195.3L968 196.3L967 197.2L966 198.2L965 199.2L964 200.2L963 201.2L962 202.2L961 203.3L960 204.3L959 205.4L958 206.4L957 206.8L956 205.8L955 204.7L954 203.7L953 202.7L952 201.7L951 200.7L950 199.7L949 198.7L948 197.8L947 196.8L946 195.9L945 195.0L944 194.1L943 193.2L942 192.6L941 192.6L940 192.6L939 192.7L938 192.8L937 192.9L936 193.0L935 193.1L934 193.9L933 194.8L932 195.8L931 196.9L930 198.0L929 199.1L928 200.3L927 201.5L926 202.8L925 204.1L924 205.4L923 206.8L922 208.2L921 207.7L920 206.7L919 205.8L918 204.8L917 203.8L916 202.8L915 201.8L914 200.8L913 199.8L912 198.8L911 197.8L910 196.8L909 195.9L908 195.8L907 195.9L906 196.0L905 196.1L904 196.2L903 196.3L902 196.5L901 198.0L900 199.7L899 201.5L898 203.4L897 205.4L896 207.4L895 209.5L894 211.7L893 213.9L892 216.1L891 218.4L890 220.8L889 222.4L888 220.6L887 218.7L886 216.9L885 215.0L884 213.2L883 211.3L882 209.5L881 207.6L880 205.8L879 204.0L878 202.2L877 200.5L876 199.5L875 199.6L874 199.7L873 199.8L872 200.0L871 200.1L870 200.2L869 200.3L868 201.8L867 203.4L866 205.1L865 207.0L864 208.8L863 210.8L862 212.7L861 214.8L860 216.8L859 219.0L858 221.1L857 223.3L856 225.3L855 227.4L854 229.5L853 231.6L852 229.6L851 227.7L850 225.8L849 223.8L848 222.0L847 220.1L846 218.2L845 216.3L844 214.5L843 212.7L842 210.9L841 209.2L840 207.5L839 205.8L838 204.3L837 203.0L836 203.0L835 203.1L834 203.1L833 203.2L832 203.3L831 203.4L830 203.5L829 204.8L828 206.9L827 209.1L826 211.3L825 213.7L824 216.1L823 218.6L822 221.1L821 223.7L820 226.4L819 229.1L818 231.8L817 234.5L816 234.9L815 232.6L814 230.3L813 228.0L812 225.7L811 223.4L810 221.1L809 218.9L808 216.6L807 214.4L806 212.3L805 210.2L804 208.2L803 207.0L802 207.1L801 207.2L800 207.4L799 207.5L798 207.6L797 207.7L796 208.1L795 210.1L794 212.2L793 214.5L792 216.8L791 218.9L790 221.1L789 223.3L788 225.5L787 227.7L786 230.0L785 232.2L784 234.4L783 236.7L782 238.9L781 239.6L780 237.0L779 234.4L778 231.9L777 229.4L776 226.9L775 224.5L774 222.2L773 219.8L772 217.6L771 215.3L770 213.2L769 211.1L768 209.1L767 207.2L766 206.3L765 206.2L764 206.2L763 206.1L762 206.0L761 205.9L760 205.9L759 206.0L758 207.3L757 208.8L756 210.3L755 211.9L754 213.5L753 215.1L752 216.7L751 218.4L750 220.0L749 221.7L748 223.3L747 225.0L746 226.7L745 228.3L744 226.5L743 224.5L742 222.6L741 220.7L740 218.8L739 217.0L738 215.2L737 213.5L736 211.7L735 210.1L734 208.4L733 206.9L732 205.4L731 204.0L730 203.8L729 203.7L728 203.6L727 203.5L726 203.5L725 203.4L724 203.3L723 203.4L722 204.7L721 206.1L720 207.5L719 209.0L718 210.6L717 212.1L716 213.7L715 215.3L714 216.8L713 218.4L712 220.0L711 221.6L710 223.4L709 225.3L708 227.1L707 229.0L706 228.7L705 227.0L704 225.3L703 223.6L702 221.9L701 220.3L700 218.6L699 216.9L698 215.3L697 213.6L696 212.0L695 210.4L694 208.8L693 207.3L692 205.8L691 204.4L690 203.3L689 203.3L688 203.3L687 203.4L686 203.4L685 203.5L684 203.5L683 203.6L682 204.4L681 206.1L680 207.9L679 209.8L678 211.8L677 213.8L676 215.8L675 217.9L674 220.1L673 222.2L672 224.4L671 226.6L670 228.9L669 231.1L668 229.2L667 227.1L666 225.0L665 222.9L664 220.9L663 218.9L662 216.8L661 214.9L660 212.9L659 211.0L658 209.1L657 207.3L656 205.6L655 204.7L654 204.7L653 204.8L652 204.8L651 204.9L650 204.9L649 204.9L648 206.0L647 208.0L646 210.1L645 212.3L644 214.5L643 216.9L642 219.2L641 221.7L640 224.1L639 226.6L638 229.1L637 231.7L636 234.3L635 236.4L634 234.0L633 231.6L632 229.2L631 226.8L630 224.4L629 222.0L628 219.7L627 217.4L626 215.1L625 212.9L624 210.7L623 208.6L622 206.7L621 206.0L620 206.1L619 206.1L618 206.1L617 206.2L616 206.2L615 206.3L614 207.4L613 208.7L612 210.0L611 211.4L610 212.8L609 214.3L608 215.7L607 217.2L606 218.6L605 220.1L604 221.6L603 223.0L602 224.1L601 222.3L600 220.5L599 218.8L598 217.1L597 215.4L596 213.7L595 212.1L594 210.6L593 209.1L592 207.6L591 206.2L590 204.9L589 204.0L588 204.0L587 203.9L586 203.8L585 203.7L584 203.6L583 203.5L582 204.1L581 205.4L580 206.7L579 208.1L578 209.6L577 211.1L576 212.5L575 214.0L574 215.4L573 216.8L572 218.2L571 219.6L570 221.0L569 222.3L568 222.8L567 220.9L566 219.0L565 217.1L564 215.3L563 213.5L562 211.8L561 210.1L560 208.5L559 206.9L558 205.4L557 203.9L556 202.5L555 201.2L554 200.0L553 199.9L552 199.7L551 199.6L550 199.4L549 199.3L548 199.2L547 199.2L546 200.3L545 201.5L544 202.7L543 203.9L542 205.2L541 206.4L540 207.6L539 208.8L538 210.0L537 211.2L536 212.3L535 213.5L534 213.7L533 212.0L532 210.4L531 208.8L530 207.2L529 205.8L528 204.4L527 203.1L526 201.8L525 200.6L524 199.5L523 198.5L522 197.5L521 197.1L520 197.1L519 197.2L518 197.2L517 197.2L516 197.2L515 197.2L514 197.3L513 197.9L512 198.6L511 199.2L510 199.9L509 200.5L508 201.1L507 201.7L506 202.2L505 202.8L504 203.3L503 203.8L502 204.2L501 204.6L500 205.1L499 205.4L498 205.2L497 204.4L496 203.6L495 202.8L494 202.0L493 201.5L492 200.9L491 200.4L490 199.9L489 199.4L488 198.9L487 198.4L486 198.0L485 197.6L484 197.3L483 197.0L482 196.9L481 196.9L480 196.9L479 197.0L478 197.0L477 197.0L476 197.0L475 197.0L474 197.1L473 197.3L472 197.5L471 197.7L470 197.8L469 198.0L468 198.2L467 198.3L466 198.5L465 198.6L464 198.7L463 198.9L462 199.0L461 199.1L460 199.2L459 199.2L458 199.3L457 199.1L456 198.9L455 198.7L454 198.6L453 198.4L452 198.2L451 198.0L450 197.9L449 197.7L448 197.6L447 197.5L446 197.3L445 197.2L444 197.1L443 197.0Z" fill="#3d3d3d"/></g></svg>
<div class="a t" style="left:1100px;top:61px;width:342px;height:26px;line-height:26px;text-align:right;font-size:15.5px;color:#858585;text-shadow:0 0 2px rgba(255,255,255,.95),0 0 3px rgba(255,255,255,.8)">Similar to: <b style="color:#5e5e5e">EdgeoverBass-C1.wav</b></div>
<div class="a t" style="left:1000px;top:128px;width:406px;height:26px;line-height:26px;text-align:right;font-size:15.5px;color:#999">Selected: <b>FM-Voice-Low-Sweep-C2.wav</b></div>
<div class="a" style="left:1418px;top:131px;width:19px;height:19px;border:1.5px solid #666;border-radius:50%"></div>
<div class="a" style="left:846px;top:122px;width:3px;height:129px;background:#629c6e"></div>
<div class="a t" style="left:858px;top:214px;width:75px;height:26px;background:#629c6e;color:#fff;font-size:15.5px;line-height:26px;text-align:center">00:03.1</div>
<div class="a" style="left:407px;top:251px;width:1044px;height:2px;background:#e3e3e3"></div>
<div class="a" style="left:407px;top:253px;width:1044px;height:44px;background:#fff"></div>
<svg class="a" style="left:419px;top:262px" width="24" height="24"><circle cx="14.5" cy="8.5" r="6.3" fill="none" stroke="#3a3a3a" stroke-width="2.6"/><path d="M10 13L3.5 19.5" stroke="#3a3a3a" stroke-width="3"/></svg>
<div class="a t" style="left:453px;top:254px;height:43px;line-height:43px;font-size:20px;color:#bbb;-webkit-text-stroke:0.4px #fff">Search...</div>
<div class="a t" style="left:927px;top:262px;width:42px;height:26px;border:2px solid #e6e6e6;border-radius:4px;background:#f8f8f8;font-size:17px;color:#4a4a4a;line-height:24px;-webkit-text-stroke:0.35px #f8f8f8;text-align:center">j106</div>
<div class="a t" style="left:975px;top:262px;width:49px;height:26px;border:2px solid #e6e6e6;border-radius:4px;background:#f8f8f8;font-size:17px;color:#4a4a4a;line-height:24px;-webkit-text-stroke:0.35px #f8f8f8;text-align:center">choir</div>
<div class="a t" style="left:1031px;top:262px;width:27px;height:26px;border:2px solid #e6e6e6;border-radius:4px;background:#f8f8f8;font-size:17px;color:#4a4a4a;line-height:24px;-webkit-text-stroke:0.35px #f8f8f8;text-align:center">c3</div>
<div class="a t" style="left:1064px;top:262px;width:27px;height:26px;border:2px solid #e6e6e6;border-radius:4px;background:#f8f8f8;font-size:17px;color:#4a4a4a;line-height:24px;-webkit-text-stroke:0.35px #f8f8f8;text-align:center">c2</div>
<div class="a t" style="left:1097px;top:262px;width:28px;height:26px;border:2px solid #e6e6e6;border-radius:4px;background:#f8f8f8;font-size:17px;color:#4a4a4a;line-height:24px;-webkit-text-stroke:0.35px #f8f8f8;text-align:center">c1</div>
<div class="a t" style="left:1131px;top:262px;width:67px;height:26px;border:2px solid #e6e6e6;border-radius:4px;background:#f8f8f8;font-size:17px;color:#4a4a4a;line-height:24px;-webkit-text-stroke:0.35px #f8f8f8;text-align:center">upright</div>
<div class="a t" style="left:1203px;top:262px;width:44px;height:26px;border:2px solid #e6e6e6;border-radius:4px;background:#f8f8f8;font-size:17px;color:#4a4a4a;line-height:24px;-webkit-text-stroke:0.35px #f8f8f8;text-align:center">dw8</div>
<div class="a t" style="left:1252px;top:262px;width:31px;height:26px;border:2px solid #e6e6e6;border-radius:4px;background:#f8f8f8;font-size:17px;color:#4a4a4a;line-height:24px;-webkit-text-stroke:0.35px #f8f8f8;text-align:center">fm</div>
<div class="a t" style="left:1289px;top:262px;width:28px;height:26px;border:2px solid #e6e6e6;border-radius:4px;background:#f8f8f8;font-size:17px;color:#4a4a4a;line-height:24px;-webkit-text-stroke:0.35px #f8f8f8;text-align:center">c4</div>
<div class="a t" style="left:1323px;top:262px;width:94px;height:26px;border:2px solid #e6e6e6;border-radius:4px;background:#f8f8f8;font-size:17px;color:#4a4a4a;line-height:24px;-webkit-text-stroke:0.35px #f8f8f8;text-align:center">eight3bass</div>
<div class="a" style="left:1451px;top:0;width:2px;height:297px;background:#e0e0e0"></div>
<div class="a" style="left:407px;top:297px;width:1513px;height:39px;background:#629c6e"></div>
<div class="a t" style="left:419px;top:298px;height:39px;line-height:39px;font-size:17px;color:#e8f1ea;-webkit-text-stroke:0.35px #629c6e">Showing samples similar to <b style="color:#fff;-webkit-text-stroke:0">'EdgeoverBass-C1.wav'</b><span style="font-size:19px">&#x2715;</span> - Active Filters: <b style="color:#fff;-webkit-text-stroke:0">OneShot</b><span style="font-size:19px">&#x2715;</span></div>
<div class="a t" style="left:1700px;top:298px;width:206px;height:39px;line-height:39px;font-size:17px;color:#e8f1ea;text-align:right;-webkit-text-stroke:0.35px #629c6e">Reset All Filters</div>
<div class="a" style="left:407px;top:336px;width:1513px;height:470px;background:#fff"></div>
<div class="a" style="left:407px;top:336px;width:1494px;height:36px;background:#efefef"></div>
<div class="a" style="left:1601px;top:336px;width:300px;height:36px;background:#e8e8e8"></div>
<div class="a t" style="left:407px;top:336px;width:524px;height:36px;line-height:49px;font-size:17px;color:#333;text-align:center;-webkit-text-stroke:0.35px #efefef">Filename</div>
<div class="a t" style="left:932px;top:336px;width:104px;height:36px;line-height:49px;font-size:17px;color:#333;text-align:center;-webkit-text-stroke:0.35px #efefef">Class</div>
<div class="a t" style="left:1037px;top:336px;width:239px;height:36px;line-height:49px;font-size:17px;color:#333;text-align:center;-webkit-text-stroke:0.35px #efefef">Categories</div>
<div class="a t" style="left:1277px;top:336px;width:104px;height:36px;line-height:49px;font-size:17px;color:#333;text-align:center;-webkit-text-stroke:0.35px #efefef">Length</div>
<div class="a t" style="left:1388px;top:336px;width:63px;height:36px;line-height:49px;font-size:17px;color:#333;-webkit-text-stroke:0.35px #efefef">Samplerate</div>
<div class="a" style="left:930px;top:336px;width:2px;height:36px;background:#d0d0d0"></div>
<div class="a" style="left:1035px;top:336px;width:2px;height:36px;background:#d0d0d0"></div>
<div class="a" style="left:1275px;top:336px;width:2px;height:36px;background:#d0d0d0"></div>
<div class="a" style="left:1380px;top:336px;width:2px;height:36px;background:#d0d0d0"></div>
<div class="a t" style="left:1451px;top:336px;width:28px;height:36px;line-height:49px;font-size:17px;color:#333;text-align:center;background:#efefef;-webkit-text-stroke:0.35px #efefef">I</div>
<div class="a" style="left:1479px;top:336px;width:2px;height:36px;background:#d0d0d0"></div>
<div class="a t" style="left:1481px;top:336px;width:28px;height:36px;line-height:49px;font-size:17px;color:#333;text-align:center;background:#efefef;-webkit-text-stroke:0.35px #efefef">II</div>
<div class="a" style="left:1509px;top:336px;width:2px;height:36px;background:#d0d0d0"></div>
<div class="a t" style="left:1511px;top:336px;width:28px;height:36px;line-height:49px;font-size:17px;color:#333;text-align:center;background:#efefef;-webkit-text-stroke:0.35px #efefef">III</div>
<div class="a" style="left:1539px;top:336px;width:2px;height:36px;background:#d0d0d0"></div>
<div class="a t" style="left:1541px;top:336px;width:28px;height:36px;line-height:49px;font-size:17px;color:#333;text-align:center;background:#efefef;-webkit-text-stroke:0.35px #efefef">IV</div>
<div class="a" style="left:1569px;top:336px;width:2px;height:36px;background:#d0d0d0"></div>
<div class="a t" style="left:1571px;top:336px;width:28px;height:36px;line-height:49px;font-size:17px;color:#333;text-align:center;background:#efefef;-webkit-text-stroke:0.35px #efefef">V</div>
<div class="a" style="left:1599px;top:336px;width:2px;height:36px;background:#d0d0d0"></div>
<div class="a t" style="left:1601px;top:336px;width:300px;height:36px;line-height:49px;font-size:17px;color:#333;text-align:center;-webkit-text-stroke:0.35px #e8e8e8">Similarity</div>
<svg class="a" style="left:1744px;top:342px" width="14" height="12"><path d="M0 0H13L6.5 10Z" fill="#222"/></svg>
<div class="a" style="left:1900px;top:336px;width:2px;height:36px;background:#d0d0d0"></div>
<div class="a" style="left:407px;top:372px;width:1494px;height:2px;background:#e3e3e3"></div>
<div class="a" style="left:1903px;top:372px;width:17px;height:17px;background:#c8c8c8;border-radius:2px"></div>
<div class="a" style="left:407px;top:374px;width:523px;height:34px;background:#f7f7f7"></div>
<div class="a" style="left:1601px;top:374px;width:299px;height:34px;background:#f7f7f7"></div>
<div class="a" style="left:407px;top:408px;width:1494px;height:2px;background:#e6e6e6"></div>
<div class="a" style="left:930px;top:374px;width:2px;height:34px;background:#e6e6e6"></div>
<div class="a" style="left:1035px;top:374px;width:2px;height:34px;background:#e6e6e6"></div>
<div class="a" style="left:1275px;top:374px;width:2px;height:34px;background:#e6e6e6"></div>
<div class="a" style="left:1380px;top:374px;width:2px;height:34px;background:#e6e6e6"></div>
<div class="a" style="left:1599px;top:374px;width:2px;height:34px;background:#e6e6e6"></div>
<div class="a" style="left:1900px;top:374px;width:2px;height:34px;background:#e6e6e6"></div>
<svg class="a" style="left:417px;top:381px;opacity:1" width="22" height="22"><circle cx="11" cy="11" r="8.5" fill="none" stroke="#629c6e" stroke-width="3.2" stroke-dasharray="14 40" transform="rotate(-90 11 11)"/><circle cx="11" cy="11" r="8.5" fill="none" stroke="#e9d46a" stroke-width="3.2" stroke-dasharray="0 14 10 40" transform="rotate(-90 11 11)"/><circle cx="11" cy="11" r="8.5" fill="none" stroke="#f2954f" stroke-width="3.2" stroke-dasharray="0 24 12 40" transform="rotate(-90 11 11)"/><circle cx="11" cy="11" r="8.5" fill="none" stroke="#e44259" stroke-width="3.2" stroke-dasharray="0 36 12 40" transform="rotate(-90 11 11)"/><circle cx="11" cy="11" r="8.5" fill="none" stroke="#4a8fd0" stroke-width="3.2" stroke-dasharray="0 48 6 40" transform="rotate(-90 11 11)"/></svg>
<svg class="a" style="left:447px;top:383px" width="15" height="16"><path d="M0 0.5L14 7.8L0 15Z" fill="#c4c4c4"/></svg>
<div class="a t" style="left:468px;top:374px;width:458px;height:34px;line-height:34px;font-size:17px;color:#777;-webkit-text-stroke:0.4px #f7f7f7">Factory/Bass/ <span style="color:#333">EdgeoverBass-C1.wav</span></div>
<div class="a t" style="left:941px;top:374px;height:34px;line-height:34px;font-size:17px;color:#333;-webkit-text-stroke:0.4px #fff">OneShot</div>
<div class="a t" style="left:1046px;top:374px;width:229px;height:34px;line-height:34px;font-size:17px;color:#333;-webkit-text-stroke:0.4px #fff">Pads &amp; Textures<span style="color:#aaa"></span></div>
<div class="a t" style="left:1286px;top:374px;height:34px;line-height:34px;font-size:17px;color:#333;-webkit-text-stroke:0.4px #fff">00:07.500</div>
<div class="a t" style="left:1390px;top:374px;height:34px;line-height:34px;font-size:17px;color:#333;-webkit-text-stroke:0.4px #fff">44100</div>
<div class="a" style="left:1451px;top:374px;width:150px;height:34px;background:#e6e6e6"></div>
<div class="a" style="left:1451px;top:374px;width:28px;height:34px;background:#629c6e"></div>
<div class="a" style="left:1481px;top:374px;width:28px;height:34px;background:#e9d46a"></div>
<div class="a" style="left:1511px;top:374px;width:28px;height:34px;background:#f2954f"></div>
<div class="a" style="left:1541px;top:374px;width:28px;height:34px;background:#e44259"></div>
<div class="a" style="left:1571px;top:374px;width:28px;height:34px;background:#4a8fd0"></div>
<div class="a" style="left:1608px;top:384px;width:285px;height:15px;border-radius:5px;background:#c6c6c6"></div>
<div class="a" style="left:1608px;top:384px;width:285px;height:15px;border-radius:5px;background:#2277bf"></div>
<div class="a" style="left:407px;top:410px;width:523px;height:34px;background:#f7f7f7"></div>
<div class="a" style="left:1601px;top:410px;width:299px;height:34px;background:#f7f7f7"></div>
<div class="a" style="left:407px;top:444px;width:1494px;height:2px;background:#e6e6e6"></div>
<div class="a" style="left:930px;top:410px;width:2px;height:34px;background:#e6e6e6"></div>
<div class="a" style="left:1035px;top:410px;width:2px;height:34px;background:#e6e6e6"></div>
<div class="a" style="left:1275px;top:410px;width:2px;height:34px;background:#e6e6e6"></div>
<div class="a" style="left:1380px;top:410px;width:2px;height:34px;background:#e6e6e6"></div>
<div class="a" style="left:1599px;top:410px;width:2px;height:34px;background:#e6e6e6"></div>
<div class="a" style="left:1900px;top:410px;width:2px;height:34px;background:#e6e6e6"></div>
<div class="a" style="left:417px;top:417px;width:20px;height:20px;border:1.5px solid #c8c8c8;border-radius:50%"></div>
<svg class="a" style="left:447px;top:419px" width="15" height="16"><path d="M0 0.5L14 7.8L0 15Z" fill="#c4c4c4"/></svg>
<div class="a t" style="left:468px;top:410px;width:458px;height:34px;line-height:34px;font-size:17px;color:#777;-webkit-text-stroke:0.4px #f7f7f7">Factory/Sound Effects/Acoustic/ <span style="color:#333">RingingDishwasher.wav</span></div>
<div class="a t" style="left:941px;top:410px;height:34px;line-height:34px;font-size:17px;color:#333;-webkit-text-stroke:0.4px #fff">OneShot</div>
<div class="a t" style="left:1046px;top:410px;width:229px;height:34px;line-height:34px;font-size:17px;color:#333;-webkit-text-stroke:0.4px #fff">Pads &amp; Textures<span style="color:#aaa">, Noise &amp; Distortion</span></div>
<div class="a t" style="left:1286px;top:410px;height:34px;line-height:34px;font-size:17px;color:#333;-webkit-text-stroke:0.4px #fff">00:06.363</div>
<div class="a t" style="left:1390px;top:410px;height:34px;line-height:34px;font-size:17px;color:#333;-webkit-text-stroke:0.4px #fff">44100</div>
<div class="a" style="left:1451px;top:410px;width:150px;height:34px;background:#e6e6e6"></div>
<div class="a" style="left:1451px;top:410px;width:28px;height:34px;background:#74a77f"></div>
<div class="a" style="left:1481px;top:410px;width:28px;height:34px;background:#f1df94"></div>
<div class="a" style="left:1511px;top:410px;width:28px;height:34px;background:#f3b68b"></div>
<div class="a" style="left:1541px;top:410px;width:28px;height:34px;background:#e64f65"></div>
<div class="a" style="left:1571px;top:410px;width:28px;height:34px;background:#e9eff7"></div>
<div class="a" style="left:1608px;top:420px;width:285px;height:15px;border-radius:5px;background:#c6c6c6"></div>
<div class="a" style="left:1608px;top:420px;width:205px;height:15px;border-radius:5px;background:#2277bf"></div>
<div class="a" style="left:407px;top:444px;width:1494px;height:38px;background:#3a96d6;border-top:2px solid #2576c4;border-bottom:2px solid #2576c4"></div>
<div class="a" style="left:930px;top:446px;width:2px;height:34px;background:#2f86cc"></div>
<div class="a" style="left:1035px;top:446px;width:2px;height:34px;background:#2f86cc"></div>
<div class="a" style="left:1275px;top:446px;width:2px;height:34px;background:#2f86cc"></div>
<div class="a" style="left:1380px;top:446px;width:2px;height:34px;background:#2f86cc"></div>
<div class="a" style="left:1479px;top:446px;width:2px;height:34px;background:#2f86cc"></div>
<div class="a" style="left:1509px;top:446px;width:2px;height:34px;background:#2f86cc"></div>
<div class="a" style="left:1539px;top:446px;width:2px;height:34px;background:#2f86cc"></div>
<div class="a" style="left:1569px;top:446px;width:2px;height:34px;background:#2f86cc"></div>
<div class="a" style="left:1599px;top:446px;width:2px;height:34px;background:#2f86cc"></div>
<svg class="a" style="left:417px;top:453px;opacity:0.75" width="22" height="22"><circle cx="11" cy="11" r="8.5" fill="none" stroke="#629c6e" stroke-width="3.2" stroke-dasharray="14 40" transform="rotate(-90 11 11)"/><circle cx="11" cy="11" r="8.5" fill="none" stroke="#e9d46a" stroke-width="3.2" stroke-dasharray="0 14 10 40" transform="rotate(-90 11 11)"/><circle cx="11" cy="11" r="8.5" fill="none" stroke="#f2954f" stroke-width="3.2" stroke-dasharray="0 24 12 40" transform="rotate(-90 11 11)"/><circle cx="11" cy="11" r="8.5" fill="none" stroke="#e44259" stroke-width="3.2" stroke-dasharray="0 36 12 40" transform="rotate(-90 11 11)"/><circle cx="11" cy="11" r="8.5" fill="none" stroke="#4a8fd0" stroke-width="3.2" stroke-dasharray="0 48 6 40" transform="rotate(-90 11 11)"/></svg>
<svg class="a" style="left:444px;top:455px" width="16" height="16"><rect x="1" y="2" width="2" height="12" fill="#fff"/><rect x="5" y="4" width="3" height="8" fill="#fff"/><rect x="9" y="7" width="2" height="2" fill="#fff"/><rect x="13" y="7.5" width="1" height="1" fill="#fff"/></svg>
<div class="a t" style="left:468px;top:446px;width:458px;height:34px;line-height:34px;font-size:17px;color:#d8eaf7;">Factory/Synth Pads/FM-Lo…<span style="color:#fff">FM-Voice-Low-Sweep-C2.wav</span></div>
<div class="a t" style="left:941px;top:446px;height:34px;line-height:34px;font-size:17px;color:#fff;">OneShot</div>
<div class="a t" style="left:1046px;top:446px;width:229px;height:34px;line-height:34px;font-size:17px;color:#fff;">Pads &amp; Textures<span style="color:#aaa"></span></div>
<div class="a t" style="left:1286px;top:446px;height:34px;line-height:34px;font-size:17px;color:#fff;">00:07.958</div>
<div class="a t" style="left:1390px;top:446px;height:34px;line-height:34px;font-size:17px;color:#fff;">44100</div>
<div class="a" style="left:1451px;top:446px;width:28px;height:34px;background:#55987c"></div>
<div class="a" style="left:1481px;top:446px;width:28px;height:34px;background:#91b69c"></div>
<div class="a" style="left:1511px;top:446px;width:28px;height:34px;background:#a0968a"></div>
<div class="a" style="left:1541px;top:446px;width:28px;height:34px;background:#e3405a"></div>
<div class="a" style="left:1571px;top:446px;width:28px;height:34px;background:#3f8fd4"></div>
<div class="a" style="left:1608px;top:456px;width:285px;height:15px;border-radius:5px;background:#2e7db5"></div>
<div class="a" style="left:1608px;top:456px;width:199px;height:15px;border-radius:5px;background:#79b6e2"></div>
<div class="a" style="left:407px;top:482px;width:523px;height:34px;background:#f7f7f7"></div>
<div class="a" style="left:1601px;top:482px;width:299px;height:34px;background:#f7f7f7"></div>
<div class="a" style="left:407px;top:516px;width:1494px;height:2px;background:#e6e6e6"></div>
<div class="a" style="left:930px;top:482px;width:2px;height:34px;background:#e6e6e6"></div>
<div class="a" style="left:1035px;top:482px;width:2px;height:34px;background:#e6e6e6"></div>
<div class="a" style="left:1275px;top:482px;width:2px;height:34px;background:#e6e6e6"></div>
<div class="a" style="left:1380px;top:482px;width:2px;height:34px;background:#e6e6e6"></div>
<div class="a" style="left:1599px;top:482px;width:2px;height:34px;background:#e6e6e6"></div>
<div class="a" style="left:1900px;top:482px;width:2px;height:34px;background:#e6e6e6"></div>
<div class="a" style="left:417px;top:489px;width:20px;height:20px;border:1.5px solid #c8c8c8;border-radius:50%"></div>
<svg class="a" style="left:447px;top:491px" width="15" height="16"><path d="M0 0.5L14 7.8L0 15Z" fill="#c4c4c4"/></svg>
<div class="a t" style="left:468px;top:482px;width:458px;height:34px;line-height:34px;font-size:17px;color:#777;-webkit-text-stroke:0.4px #f7f7f7">Factory/Synth Leads/EML Fat Aske…<span style="color:#333">EML-FatAsked-F1.wav</span></div>
<div class="a t" style="left:941px;top:482px;height:34px;line-height:34px;font-size:17px;color:#333;-webkit-text-stroke:0.4px #fff">OneShot</div>
<div class="a t" style="left:1046px;top:482px;width:229px;height:34px;line-height:34px;font-size:17px;color:#333;-webkit-text-stroke:0.4px #fff">Pads &amp; Textures<span style="color:#aaa"></span></div>
<div class="a t" style="left:1286px;top:482px;height:34px;line-height:34px;font-size:17px;color:#333;-webkit-text-stroke:0.4px #fff">00:06.226</div>
<div class="a t" style="left:1390px;top:482px;height:34px;line-height:34px;font-size:17px;color:#333;-webkit-text-stroke:0.4px #fff">44100</div>
<div class="a" style="left:1451px;top:482px;width:150px;height:34px;background:#e6e6e6"></div>
<div class="a" style="left:1451px;top:482px;width:28px;height:34px;background:#65a071"></div>
<div class="a" style="left:1481px;top:482px;width:28px;height:34px;background:#f7f0d8"></div>
<div class="a" style="left:1511px;top:482px;width:28px;height:34px;background:#f4bd96"></div>
<div class="a" style="left:1541px;top:482px;width:28px;height:34px;background:#e64f65"></div>
<div class="a" style="left:1571px;top:482px;width:28px;height:34px;background:#b0cde8"></div>
<div class="a" style="left:1608px;top:492px;width:285px;height:15px;border-radius:5px;background:#c6c6c6"></div>
<div class="a" style="left:1608px;top:492px;width:196px;height:15px;border-radius:5px;background:#2277bf"></div>
<div class="a" style="left:407px;top:518px;width:523px;height:34px;background:#f7f7f7"></div>
<div class="a" style="left:1601px;top:518px;width:299px;height:34px;background:#f7f7f7"></div>
<div class="a" style="left:407px;top:552px;width:1494px;height:2px;background:#e6e6e6"></div>
<div class="a" style="left:930px;top:518px;width:2px;height:34px;background:#e6e6e6"></div>
<div class="a" style="left:1035px;top:518px;width:2px;height:34px;background:#e6e6e6"></div>
<div class="a" style="left:1275px;top:518px;width:2px;height:34px;background:#e6e6e6"></div>
<div class="a" style="left:1380px;top:518px;width:2px;height:34px;background:#e6e6e6"></div>
<div class="a" style="left:1599px;top:518px;width:2px;height:34px;background:#e6e6e6"></div>
<div class="a" style="left:1900px;top:518px;width:2px;height:34px;background:#e6e6e6"></div>
<div class="a" style="left:417px;top:525px;width:20px;height:20px;border:1.5px solid #c8c8c8;border-radius:50%"></div>
<svg class="a" style="left:447px;top:527px" width="15" height="16"><path d="M0 0.5L14 7.8L0 15Z" fill="#c4c4c4"/></svg>
<div class="a t" style="left:468px;top:518px;width:458px;height:34px;line-height:34px;font-size:17px;color:#777;-webkit-text-stroke:0.4px #f7f7f7">Factory/Synth Leads/HiSaw 30/ <span style="color:#333">HiSaw 30 G#0.wav</span></div>
<div class="a t" style="left:941px;top:518px;height:34px;line-height:34px;font-size:17px;color:#333;-webkit-text-stroke:0.4px #fff">OneShot</div>
<div class="a t" style="left:1046px;top:518px;width:229px;height:34px;line-height:34px;font-size:17px;color:#333;-webkit-text-stroke:0.4px #fff">Pads &amp; Textures<span style="color:#aaa"></span></div>
<div class="a t" style="left:1286px;top:518px;height:34px;line-height:34px;font-size:17px;color:#333;-webkit-text-stroke:0.4px #fff">00:09.024</div>
<div class="a t" style="left:1390px;top:518px;height:34px;line-height:34px;font-size:17px;color:#333;-webkit-text-stroke:0.4px #fff">48000</div>
<div class="a" style="left:1451px;top:518px;width:150px;height:34px;background:#e6e6e6"></div>
<div class="a" style="left:1451px;top:518px;width:28px;height:34px;background:#65a071"></div>
<div class="a" style="left:1481px;top:518px;width:28px;height:34px;background:#f7f0d8"></div>
<div class="a" style="left:1511px;top:518px;width:28px;height:34px;background:#f4c09d"></div>
<div class="a" style="left:1541px;top:518px;width:28px;height:34px;background:#e54b62"></div>
<div class="a" style="left:1571px;top:518px;width:28px;height:34px;background:#b5d0e9"></div>
<div class="a" style="left:1608px;top:528px;width:285px;height:15px;border-radius:5px;background:#c6c6c6"></div>
<div class="a" style="left:1608px;top:528px;width:196px;height:15px;border-radius:5px;background:#2277bf"></div>
<div class="a" style="left:407px;top:554px;width:523px;height:34px;background:#f7f7f7"></div>
<div class="a" style="left:1601px;top:554px;width:299px;height:34px;background:#f7f7f7"></div>
<div class="a" style="left:407px;top:588px;width:1494px;height:2px;background:#e6e6e6"></div>
<div class="a" style="left:930px;top:554px;width:2px;height:34px;background:#e6e6e6"></div>
<div class="a" style="left:1035px;top:554px;width:2px;height:34px;background:#e6e6e6"></div>
<div class="a" style="left:1275px;top:554px;width:2px;height:34px;background:#e6e6e6"></div>
<div class="a" style="left:1380px;top:554px;width:2px;height:34px;background:#e6e6e6"></div>
<div class="a" style="left:1599px;top:554px;width:2px;height:34px;background:#e6e6e6"></div>
<div class="a" style="left:1900px;top:554px;width:2px;height:34px;background:#e6e6e6"></div>
<div class="a" style="left:417px;top:561px;width:20px;height:20px;border:1.5px solid #c8c8c8;border-radius:50%"></div>
<svg class="a" style="left:447px;top:563px" width="15" height="16"><path d="M0 0.5L14 7.8L0 15Z" fill="#c4c4c4"/></svg>
<div class="a t" style="left:468px;top:554px;width:458px;height:34px;line-height:34px;font-size:17px;color:#777;-webkit-text-stroke:0.4px #f7f7f7">Factory/Bass/WP Bass/ <span style="color:#333">WP Bass C2.wav</span></div>
<div class="a t" style="left:941px;top:554px;height:34px;line-height:34px;font-size:17px;color:#333;-webkit-text-stroke:0.4px #fff">OneShot</div>
<div class="a t" style="left:1046px;top:554px;width:229px;height:34px;line-height:34px;font-size:17px;color:#333;-webkit-text-stroke:0.4px #fff">Pads &amp; Textures<span style="color:#aaa">, Leads &amp; MidHiKeys</span></div>
<div class="a t" style="left:1286px;top:554px;height:34px;line-height:34px;font-size:17px;color:#333;-webkit-text-stroke:0.4px #fff">00:07.938</div>
<div class="a t" style="left:1390px;top:554px;height:34px;line-height:34px;font-size:17px;color:#333;-webkit-text-stroke:0.4px #fff">48000</div>
<div class="a" style="left:1451px;top:554px;width:150px;height:34px;background:#e6e6e6"></div>
<div class="a" style="left:1451px;top:554px;width:28px;height:34px;background:#65a071"></div>
<div class="a" style="left:1481px;top:554px;width:28px;height:34px;background:#f7f0d8"></div>
<div class="a" style="left:1511px;top:554px;width:28px;height:34px;background:#f4ba93"></div>
<div class="a" style="left:1541px;top:554px;width:28px;height:34px;background:#e44259"></div>
<div class="a" style="left:1571px;top:554px;width:28px;height:34px;background:#f7f7f7"></div>
<div class="a" style="left:1608px;top:564px;width:285px;height:15px;border-radius:5px;background:#c6c6c6"></div>
<div class="a" style="left:1608px;top:564px;width:191px;height:15px;border-radius:5px;background:#2277bf"></div>
<div class="a" style="left:407px;top:590px;width:523px;height:34px;background:#f7f7f7"></div>
<div class="a" style="left:1601px;top:590px;width:299px;height:34px;background:#f7f7f7"></div>
<div class="a" style="left:407px;top:624px;width:1494px;height:2px;background:#e6e6e6"></div>
<div class="a" style="left:930px;top:590px;width:2px;height:34px;background:#e6e6e6"></div>
<div class="a" style="left:1035px;top:590px;width:2px;height:34px;background:#e6e6e6"></div>
<div class="a" style="left:1275px;top:590px;width:2px;height:34px;background:#e6e6e6"></div>
<div class="a" style="left:1380px;top:590px;width:2px;height:34px;background:#e6e6e6"></div>
<div class="a" style="left:1599px;top:590px;width:2px;height:34px;background:#e6e6e6"></div>
<div class="a" style="left:1900px;top:590px;width:2px;height:34px;background:#e6e6e6"></div>
<div class="a" style="left:417px;top:597px;width:20px;height:20px;border:1.5px solid #c8c8c8;border-radius:50%"></div>
<svg class="a" style="left:447px;top:599px" width="15" height="16"><path d="M0 0.5L14 7.8L0 15Z" fill="#c4c4c4"/></svg>
<div class="a t" style="left:468px;top:590px;width:458px;height:34px;line-height:34px;font-size:17px;color:#777;-webkit-text-stroke:0.4px #f7f7f7">Factory/Synth Pads/DW8 Ope… <span style="color:#333">DW8-OpenStrings-A0.wav</span></div>
<div class="a t" style="left:941px;top:590px;height:34px;line-height:34px;font-size:17px;color:#333;-webkit-text-stroke:0.4px #fff">OneShot</div>
<div class="a t" style="left:1046px;top:590px;width:229px;height:34px;line-height:34px;font-size:17px;color:#333;-webkit-text-stroke:0.4px #fff">Pads &amp; Textures<span style="color:#aaa">, Nature &amp; Athmospheric</span></div>
<div class="a t" style="left:1286px;top:590px;height:34px;line-height:34px;font-size:17px;color:#333;-webkit-text-stroke:0.4px #fff">00:08.763</div>
<div class="a t" style="left:1390px;top:590px;height:34px;line-height:34px;font-size:17px;color:#333;-webkit-text-stroke:0.4px #fff">44100</div>
<div class="a" style="left:1451px;top:590px;width:150px;height:34px;background:#e6e6e6"></div>
<div class="a" style="left:1451px;top:590px;width:28px;height:34px;background:#7aac85"></div>
<div class="a" style="left:1481px;top:590px;width:28px;height:34px;background:#f2e8b6"></div>
<div class="a" style="left:1511px;top:590px;width:28px;height:34px;background:#f4ba93"></div>
<div class="a" style="left:1541px;top:590px;width:28px;height:34px;background:#e54d63"></div>
<div class="a" style="left:1571px;top:590px;width:28px;height:34px;background:#e7eef7"></div>
<div class="a" style="left:1608px;top:600px;width:285px;height:15px;border-radius:5px;background:#c6c6c6"></div>
<div class="a" style="left:1608px;top:600px;width:191px;height:15px;border-radius:5px;background:#2277bf"></div>
<div class="a" style="left:407px;top:626px;width:523px;height:34px;background:#f7f7f7"></div>
<div class="a" style="left:1601px;top:626px;width:299px;height:34px;background:#f7f7f7"></div>
<div class="a" style="left:407px;top:660px;width:1494px;height:2px;background:#e6e6e6"></div>
<div class="a" style="left:930px;top:626px;width:2px;height:34px;background:#e6e6e6"></div>
<div class="a" style="left:1035px;top:626px;width:2px;height:34px;background:#e6e6e6"></div>
<div class="a" style="left:1275px;top:626px;width:2px;height:34px;background:#e6e6e6"></div>
<div class="a" style="left:1380px;top:626px;width:2px;height:34px;background:#e6e6e6"></div>
<div class="a" style="left:1599px;top:626px;width:2px;height:34px;background:#e6e6e6"></div>
<div class="a" style="left:1900px;top:626px;width:2px;height:34px;background:#e6e6e6"></div>
<div class="a" style="left:417px;top:633px;width:20px;height:20px;border:1.5px solid #c8c8c8;border-radius:50%"></div>
<svg class="a" style="left:447px;top:635px" width="15" height="16"><path d="M0 0.5L14 7.8L0 15Z" fill="#c4c4c4"/></svg>
<div class="a t" style="left:468px;top:626px;width:458px;height:34px;line-height:34px;font-size:17px;color:#777;-webkit-text-stroke:0.4px #f7f7f7">Factory/Synth Leads/SyncHSaw/ <span style="color:#333">SyncHSaw C1.wav</span></div>
<div class="a t" style="left:941px;top:626px;height:34px;line-height:34px;font-size:17px;color:#333;-webkit-text-stroke:0.4px #fff">OneShot</div>
<div class="a t" style="left:1046px;top:626px;width:229px;height:34px;line-height:34px;font-size:17px;color:#333;-webkit-text-stroke:0.4px #fff">Pads &amp; Textures<span style="color:#aaa"></span></div>
<div class="a t" style="left:1286px;top:626px;height:34px;line-height:34px;font-size:17px;color:#333;-webkit-text-stroke:0.4px #fff">00:07.007</div>
<div class="a t" style="left:1390px;top:626px;height:34px;line-height:34px;font-size:17px;color:#333;-webkit-text-stroke:0.4px #fff">48000</div>
<div class="a" style="left:1451px;top:626px;width:150px;height:34px;background:#e6e6e6"></div>
<div class="a" style="left:1451px;top:626px;width:28px;height:34px;background:#68a274"></div>
<div class="a" style="left:1481px;top:626px;width:28px;height:34px;background:#f6f4e9"></div>
<div class="a" style="left:1511px;top:626px;width:28px;height:34px;background:#f4c19d"></div>
<div class="a" style="left:1541px;top:626px;width:28px;height:34px;background:#e44259"></div>
<div class="a" style="left:1571px;top:626px;width:28px;height:34px;background:#c1d7ec"></div>
<div class="a" style="left:1608px;top:636px;width:285px;height:15px;border-radius:5px;background:#c6c6c6"></div>
<div class="a" style="left:1608px;top:636px;width:191px;height:15px;border-radius:5px;background:#2277bf"></div>
<div class="a" style="left:407px;top:662px;width:523px;height:34px;background:#f7f7f7"></div>
<div class="a" style="left:1601px;top:662px;width:299px;height:34px;background:#f7f7f7"></div>
<div class="a" style="left:407px;top:696px;width:1494px;height:2px;background:#e6e6e6"></div>
<div class="a" style="left:930px;top:662px;width:2px;height:34px;background:#e6e6e6"></div>
<div class="a" style="left:1035px;top:662px;width:2px;height:34px;background:#e6e6e6"></div>
<div class="a" style="left:1275px;top:662px;width:2px;height:34px;background:#e6e6e6"></div>
<div class="a" style="left:1380px;top:662px;width:2px;height:34px;background:#e6e6e6"></div>
<div class="a" style="left:1599px;top:662px;width:2px;height:34px;background:#e6e6e6"></div>
<div class="a" style="left:1900px;top:662px;width:2px;height:34px;background:#e6e6e6"></div>
<div class="a" style="left:417px;top:669px;width:20px;height:20px;border:1.5px solid #c8c8c8;border-radius:50%"></div>
<svg class="a" style="left:447px;top:671px" width="15" height="16"><path d="M0 0.5L14 7.8L0 15Z" fill="#c4c4c4"/></svg>
<div class="a t" style="left:468px;top:662px;width:458px;height:34px;line-height:34px;font-size:17px;color:#777;-webkit-text-stroke:0.4px #f7f7f7">Factory/Bass/WP Bass/ <span style="color:#333">WP Bass E2.wav</span></div>
<div class="a t" style="left:941px;top:662px;height:34px;line-height:34px;font-size:17px;color:#333;-webkit-text-stroke:0.4px #fff">OneShot</div>
<div class="a t" style="left:1046px;top:662px;width:229px;height:34px;line-height:34px;font-size:17px;color:#333;-webkit-text-stroke:0.4px #fff">Pads &amp; Textures<span style="color:#aaa">, Leads &amp; MidHiKeys</span></div>
<div class="a t" style="left:1286px;top:662px;height:34px;line-height:34px;font-size:17px;color:#333;-webkit-text-stroke:0.4px #fff">00:08.013</div>
<div class="a t" style="left:1390px;top:662px;height:34px;line-height:34px;font-size:17px;color:#333;-webkit-text-stroke:0.4px #fff">48000</div>
<div class="a" style="left:1451px;top:662px;width:150px;height:34px;background:#e6e6e6"></div>
<div class="a" style="left:1451px;top:662px;width:28px;height:34px;background:#72a77d"></div>
<div class="a" style="left:1481px;top:662px;width:28px;height:34px;background:#f5f0dc"></div>
<div class="a" style="left:1511px;top:662px;width:28px;height:34px;background:#f4b990"></div>
<div class="a" style="left:1541px;top:662px;width:28px;height:34px;background:#e44259"></div>
<div class="a" style="left:1571px;top:662px;width:28px;height:34px;background:#d0e0ef"></div>
<div class="a" style="left:1608px;top:672px;width:285px;height:15px;border-radius:5px;background:#c6c6c6"></div>
<div class="a" style="left:1608px;top:672px;width:190px;height:15px;border-radius:5px;background:#2277bf"></div>
<div class="a" style="left:407px;top:698px;width:523px;height:34px;background:#f7f7f7"></div>
<div class="a" style="left:1601px;top:698px;width:299px;height:34px;background:#f7f7f7"></div>
<div class="a" style="left:407px;top:732px;width:1494px;height:2px;background:#e6e6e6"></div>
<div class="a" style="left:930px;top:698px;width:2px;height:34px;background:#e6e6e6"></div>
<div class="a" style="left:1035px;top:698px;width:2px;height:34px;background:#e6e6e6"></div>
<div class="a" style="left:1275px;top:698px;width:2px;height:34px;background:#e6e6e6"></div>
<div class="a" style="left:1380px;top:698px;width:2px;height:34px;background:#e6e6e6"></div>
<div class="a" style="left:1599px;top:698px;width:2px;height:34px;background:#e6e6e6"></div>
<div class="a" style="left:1900px;top:698px;width:2px;height:34px;background:#e6e6e6"></div>
<div class="a" style="left:417px;top:705px;width:20px;height:20px;border:1.5px solid #c8c8c8;border-radius:50%"></div>
<svg class="a" style="left:447px;top:707px" width="15" height="16"><path d="M0 0.5L14 7.8L0 15Z" fill="#c4c4c4"/></svg>
<div class="a t" style="left:468px;top:698px;width:458px;height:34px;line-height:34px;font-size:17px;color:#777;-webkit-text-stroke:0.4px #f7f7f7">Factory/Synth Leads/Unis…<span style="color:#333">Unison Pulse_eighty_g#0.wav</span></div>
<div class="a t" style="left:941px;top:698px;height:34px;line-height:34px;font-size:17px;color:#333;-webkit-text-stroke:0.4px #fff">OneShot</div>
<div class="a t" style="left:1046px;top:698px;width:229px;height:34px;line-height:34px;font-size:17px;color:#333;-webkit-text-stroke:0.4px #fff">Pads &amp; Textures<span style="color:#aaa"></span></div>
<div class="a t" style="left:1286px;top:698px;height:34px;line-height:34px;font-size:17px;color:#333;-webkit-text-stroke:0.4px #fff">00:06.154</div>
<div class="a t" style="left:1390px;top:698px;height:34px;line-height:34px;font-size:17px;color:#333;-webkit-text-stroke:0.4px #fff">48000</div>
<div class="a" style="left:1451px;top:698px;width:150px;height:34px;background:#e6e6e6"></div>
<div class="a" style="left:1451px;top:698px;width:28px;height:34px;background:#65a071"></div>
<div class="a" style="left:1481px;top:698px;width:28px;height:34px;background:#f7f0d8"></div>
<div class="a" style="left:1511px;top:698px;width:28px;height:34px;background:#f3bd99"></div>
<div class="a" style="left:1541px;top:698px;width:28px;height:34px;background:#e54f66"></div>
<div class="a" style="left:1571px;top:698px;width:28px;height:34px;background:#d5e3f0"></div>
<div class="a" style="left:1608px;top:708px;width:285px;height:15px;border-radius:5px;background:#c6c6c6"></div>
<div class="a" style="left:1608px;top:708px;width:188px;height:15px;border-radius:5px;background:#2277bf"></div>
<div class="a" style="left:407px;top:734px;width:523px;height:34px;background:#f7f7f7"></div>
<div class="a" style="left:1601px;top:734px;width:299px;height:34px;background:#f7f7f7"></div>
<div class="a" style="left:407px;top:768px;width:1494px;height:2px;background:#e6e6e6"></div>
<div class="a" style="left:930px;top:734px;width:2px;height:34px;background:#e6e6e6"></div>
<div class="a" style="left:1035px;top:734px;width:2px;height:34px;background:#e6e6e6"></div>
<div class="a" style="left:1275px;top:734px;width:2px;height:34px;background:#e6e6e6"></div>
<div class="a" style="left:1380px;top:734px;width:2px;height:34px;background:#e6e6e6"></div>
<div class="a" style="left:1599px;top:734px;width:2px;height:34px;background:#e6e6e6"></div>
<div class="a" style="left:1900px;top:734px;width:2px;height:34px;background:#e6e6e6"></div>
<div class="a" style="left:417px;top:741px;width:20px;height:20px;border:1.5px solid #c8c8c8;border-radius:50%"></div>
<svg class="a" style="left:447px;top:743px" width="15" height="16"><path d="M0 0.5L14 7.8L0 15Z" fill="#c4c4c4"/></svg>
<div class="a t" style="left:468px;top:734px;width:458px;height:34px;line-height:34px;font-size:17px;color:#777;-webkit-text-stroke:0.4px #f7f7f7">Factory/Synth Pads/DW8 Op… <span style="color:#333">DW8-OpenStrings-D#1.wav</span></div>
<div class="a t" style="left:941px;top:734px;height:34px;line-height:34px;font-size:17px;color:#333;-webkit-text-stroke:0.4px #fff">OneShot</div>
<div class="a t" style="left:1046px;top:734px;width:229px;height:34px;line-height:34px;font-size:17px;color:#333;-webkit-text-stroke:0.4px #fff">Pads &amp; Textures<span style="color:#aaa">, Nature &amp; Athmospheric</span></div>
<div class="a t" style="left:1286px;top:734px;height:34px;line-height:34px;font-size:17px;color:#333;-webkit-text-stroke:0.4px #fff">00:08.043</div>
<div class="a t" style="left:1390px;top:734px;height:34px;line-height:34px;font-size:17px;color:#333;-webkit-text-stroke:0.4px #fff">44100</div>
<div class="a" style="left:1451px;top:734px;width:150px;height:34px;background:#e6e6e6"></div>
<div class="a" style="left:1451px;top:734px;width:28px;height:34px;background:#76a881"></div>
<div class="a" style="left:1481px;top:734px;width:28px;height:34px;background:#f4ecc9"></div>
<div class="a" style="left:1511px;top:734px;width:28px;height:34px;background:#f4ba93"></div>
<div class="a" style="left:1541px;top:734px;width:28px;height:34px;background:#e44259"></div>
<div class="a" style="left:1571px;top:734px;width:28px;height:34px;background:#f7f7f7"></div>
<div class="a" style="left:1608px;top:744px;width:285px;height:15px;border-radius:5px;background:#c6c6c6"></div>
<div class="a" style="left:1608px;top:744px;width:188px;height:15px;border-radius:5px;background:#2277bf"></div>
<div class="a" style="left:407px;top:770px;width:523px;height:34px;background:#f7f7f7"></div>
<div class="a" style="left:1601px;top:770px;width:299px;height:34px;background:#f7f7f7"></div>
<div class="a" style="left:407px;top:804px;width:1494px;height:2px;background:#e6e6e6"></div>
<div class="a" style="left:930px;top:770px;width:2px;height:34px;background:#e6e6e6"></div>
<div class="a" style="left:1035px;top:770px;width:2px;height:34px;background:#e6e6e6"></div>
<div class="a" style="left:1275px;top:770px;width:2px;height:34px;background:#e6e6e6"></div>
<div class="a" style="left:1380px;top:770px;width:2px;height:34px;background:#e6e6e6"></div>
<div class="a" style="left:1599px;top:770px;width:2px;height:34px;background:#e6e6e6"></div>
<div class="a" style="left:1900px;top:770px;width:2px;height:34px;background:#e6e6e6"></div>
<div class="a" style="left:417px;top:777px;width:20px;height:20px;border:1.5px solid #c8c8c8;border-radius:50%"></div>
<svg class="a" style="left:447px;top:779px" width="15" height="16"><path d="M0 0.5L14 7.8L0 15Z" fill="#c4c4c4"/></svg>
<div class="a t" style="left:468px;top:770px;width:458px;height:34px;line-height:34px;font-size:17px;color:#777;-webkit-text-stroke:0.4px #f7f7f7">Factory/Synth Leads/DW8 5th Lead/ <span style="color:#333">DW8-5thLead-E1.wav</span></div>
<div class="a t" style="left:941px;top:770px;height:34px;line-height:34px;font-size:17px;color:#333;-webkit-text-stroke:0.4px #fff">OneShot</div>
<div class="a t" style="left:1046px;top:770px;width:229px;height:34px;line-height:34px;font-size:17px;color:#333;-webkit-text-stroke:0.4px #fff">Pads &amp; Textures<span style="color:#aaa"></span></div>
<div class="a t" style="left:1286px;top:770px;height:34px;line-height:34px;font-size:17px;color:#333;-webkit-text-stroke:0.4px #fff">00:10.589</div>
<div class="a t" style="left:1390px;top:770px;height:34px;line-height:34px;font-size:17px;color:#333;-webkit-text-stroke:0.4px #fff">44100</div>
<div class="a" style="left:1451px;top:770px;width:150px;height:34px;background:#e6e6e6"></div>
<div class="a" style="left:1451px;top:770px;width:28px;height:34px;background:#74a77f"></div>
<div class="a" style="left:1481px;top:770px;width:28px;height:34px;background:#f3eac2"></div>
<div class="a" style="left:1511px;top:770px;width:28px;height:34px;background:#f4bb94"></div>
<div class="a" style="left:1541px;top:770px;width:28px;height:34px;background:#e7637a"></div>
<div class="a" style="left:1571px;top:770px;width:28px;height:34px;background:#b8d0e9"></div>
<div class="a" style="left:1608px;top:780px;width:285px;height:15px;border-radius:5px;background:#c6c6c6"></div>
<div class="a" style="left:1608px;top:780px;width:188px;height:15px;border-radius:5px;background:#2277bf"></div>
<div class="a" style="left:1439px;top:336px;width:12px;height:467px;background:linear-gradient(to right,rgba(0,0,0,0),rgba(0,0,0,.12))"></div>
<div class="a" style="left:407px;top:803px;width:1513px;height:22px;background:#fff"></div>
<div class="a" style="left:407px;top:806px;width:479px;height:18px;background:#c8c8c8;border-radius:2px"></div>
<div class="a" style="left:407px;top:824px;width:1513px;height:2px;background:#e3e3e3"></div>
<div class="a" style="left:407px;top:826px;width:1513px;height:38px;background:#efefef"></div>
<div class="a t" style="left:419px;top:826px;height:38px;line-height:38px;font-size:14.5px;color:#3a3a3a;-webkit-text-stroke:0.3px #efefef">FILTERS</div>
<div class="a" style="left:480px;top:832px;width:27px;height:24px;border-radius:12px;background:#2677c2;color:#fff;font-size:16px;line-height:24px;text-align:center">1</div>
<div class="a t" style="left:516px;top:827px;height:36px;line-height:36px;font-size:17px;color:#333;-webkit-text-stroke:0.35px #efefef">Categories</div>
<div class="a t" style="left:617px;top:827px;height:36px;line-height:36px;font-size:17px;color:#555;-webkit-text-stroke:0.35px #efefef">File Info</div>
<div class="a t" style="left:697px;top:827px;height:36px;line-height:36px;font-size:17px;color:#555;-webkit-text-stroke:0.35px #efefef">RMS/Loudness</div>
<div class="a t" style="left:831px;top:827px;height:36px;line-height:36px;font-size:17px;color:#555;-webkit-text-stroke:0.35px #efefef">Note/Frequency</div>
<div class="a t" style="left:975px;top:827px;height:36px;line-height:36px;font-size:17px;color:#555;-webkit-text-stroke:0.35px #efefef">BPM/Tempo</div>
<div class="a t" style="left:1089px;top:827px;height:36px;line-height:36px;font-size:17px;color:#555;-webkit-text-stroke:0.35px #efefef">Brightness</div>
<div class="a t" style="left:1190px;top:827px;height:36px;line-height:36px;font-size:17px;color:#555;-webkit-text-stroke:0.35px #efefef">Harmonicity</div>
<div class="a t" style="left:1305px;top:827px;height:36px;line-height:36px;font-size:17px;color:#555;-webkit-text-stroke:0.35px #efefef">Noisiness</div>
<div class="a" style="left:516px;top:857px;width:82px;height:3px;background:#2677c2"></div>
<svg class="a" style="left:1880px;top:836px" width="24" height="18"><path d="M3 5L12 13L21 5" fill="none" stroke="#333" stroke-width="3.2"/></svg>
<div class="a" style="left:407px;top:864px;width:1513px;height:179px;background:#f7f7f7"></div>
<div class="a t" style="left:408.0px;top:867px;width:185px;height:41px;background:repeating-linear-gradient(-60deg,#c9c9c9 0 5px,#efefef 5px 10px);text-align:center;font-size:17px;line-height:42px;color:#3a3a3a;">ONESHOT</div>
<div class="a t" style="left:597.4px;top:867px;width:185px;height:41px;background:repeating-linear-gradient(-60deg,#ededed 0 5px,#fafafa 5px 10px);text-align:center;font-size:17px;line-height:42px;color:#3a3a3a;">LOOP</div>
<div class="a t" style="left:786.8px;top:867px;width:185px;height:41px;background:#fff;text-align:center;font-size:17px;line-height:42px;color:#3a3a3a;-webkit-text-stroke:0.4px #fff">Leads &amp; MidHiKeys</div>
<div class="a t" style="left:976.2px;top:867px;width:185px;height:41px;background:#fff;text-align:center;font-size:17px;line-height:42px;color:#3a3a3a;-webkit-text-stroke:0.4px #fff">Bass &amp; LowKeys</div>
<div class="a t" style="left:1165.6px;top:867px;width:185px;height:41px;background:#fff;text-align:center;font-size:17px;line-height:42px;color:#3a3a3a;-webkit-text-stroke:0.4px #fff">Pads &amp; Textures</div>
<div class="a t" style="left:1355.0px;top:867px;width:185px;height:41px;background:#fff;text-align:center;font-size:17px;line-height:42px;color:#3a3a3a;-webkit-text-stroke:0.4px #fff">Toms</div>
<div class="a" style="left:1544.4px;top:867px;width:185px;height:41px;background:#fff"></div>
<div class="a" style="left:1544.4px;top:867px;width:185px;height:39px;overflow:hidden;text-align:center;font-size:17px;line-height:20px;padding-top:3px;color:#3a3a3a;-webkit-text-stroke:0.4px #fff">Nature &amp;<br>Athmospheric</div>
<div class="a t" style="left:1733.8px;top:867px;width:185px;height:41px;background:#fff;text-align:center;font-size:17px;line-height:42px;color:#3a3a3a;-webkit-text-stroke:0.4px #fff">Voice &amp; Acapella</div>
<div class="a t" style="left:408.0px;top:911px;width:185px;height:41px;background:#fff;text-align:center;font-size:17px;line-height:42px;color:#3a3a3a;-webkit-text-stroke:0.4px #fff">Noise &amp; Distortion</div>
<div class="a t" style="left:597.4px;top:911px;width:185px;height:41px;background:#fff;text-align:center;font-size:17px;line-height:42px;color:#3a3a3a;-webkit-text-stroke:0.4px #fff">Cymbal Crashes</div>
<div class="a t" style="left:786.8px;top:911px;width:185px;height:41px;background:#fff;text-align:center;font-size:17px;line-height:42px;color:#3a3a3a;-webkit-text-stroke:0.4px #fff">Hats &amp; Shakers</div>
<div class="a t" style="left:976.2px;top:911px;width:185px;height:41px;background:#fff;text-align:center;font-size:17px;line-height:42px;color:#3a3a3a;-webkit-text-stroke:0.4px #fff">Blips &amp; HighKeys</div>
<div class="a t" style="left:1165.6px;top:911px;width:185px;height:41px;background:#fff;text-align:center;font-size:17px;line-height:42px;color:#3a3a3a;-webkit-text-stroke:0.4px #fff">Metal Hits</div>
<div class="a t" style="left:1355.0px;top:911px;width:185px;height:41px;background:#fff;text-align:center;font-size:17px;line-height:42px;color:#3a3a3a;-webkit-text-stroke:0.4px #fff">Snares</div>
<div class="a t" style="left:1544.4px;top:911px;width:185px;height:41px;background:#fff;text-align:center;font-size:17px;line-height:42px;color:#3a3a3a;-webkit-text-stroke:0.4px #fff">Triangles &amp; Bells</div>
<div class="a t" style="left:1733.8px;top:911px;width:185px;height:41px;background:#fff;text-align:center;font-size:17px;line-height:42px;color:#3a3a3a;-webkit-text-stroke:0.4px #fff">Sweeps &amp; Lasers</div>
<div class="a t" style="left:408.0px;top:955px;width:185px;height:41px;background:#fff;text-align:center;font-size:17px;line-height:42px;color:#3a3a3a;-webkit-text-stroke:0.4px #fff">Stabs &amp; Orch. Hits</div>
<div class="a t" style="left:597.4px;top:955px;width:185px;height:41px;background:#fff;text-align:center;font-size:17px;line-height:42px;color:#3a3a3a;-webkit-text-stroke:0.4px #fff">Bongos &amp; Congas</div>
<div class="a t" style="left:786.8px;top:955px;width:185px;height:41px;background:#fff;text-align:center;font-size:17px;line-height:42px;color:#3a3a3a;-webkit-text-stroke:0.4px #fff">Explosions &amp; Shots</div>
<div class="a t" style="left:976.2px;top:955px;width:185px;height:41px;background:#fff;text-align:center;font-size:17px;line-height:42px;color:#3a3a3a;-webkit-text-stroke:0.4px #fff">Wood Hits</div>
<div class="a t" style="left:1165.6px;top:955px;width:185px;height:41px;background:#fff;text-align:center;font-size:17px;line-height:42px;color:#3a3a3a;-webkit-text-stroke:0.4px #fff">Kicks</div>
<div class="a t" style="left:1355.0px;top:955px;width:185px;height:41px;background:#fff;text-align:center;font-size:17px;line-height:42px;color:#3a3a3a;-webkit-text-stroke:0.4px #fff">Cymbal Rides</div>
<div class="a t" style="left:1544.4px;top:955px;width:185px;height:41px;background:#fff;text-align:center;font-size:17px;line-height:42px;color:#3a3a3a;-webkit-text-stroke:0.4px #fff">Cracks &amp; Rustle</div>
<div class="a t" style="left:1733.8px;top:955px;width:185px;height:41px;background:#fff;text-align:center;font-size:17px;line-height:42px;color:#3a3a3a;-webkit-text-stroke:0.4px #fff">Vinyl Scratches</div>
<div class="a t" style="left:408.0px;top:999px;width:185px;height:41px;background:#fff;text-align:center;font-size:17px;line-height:42px;color:#3a3a3a;-webkit-text-stroke:0.4px #fff">Whooshes &amp; Whips</div>
<div class="a t" style="left:597.4px;top:999px;width:185px;height:41px;background:#fff;text-align:center;font-size:17px;line-height:42px;color:#3a3a3a;-webkit-text-stroke:0.4px #fff">Vibraslap &amp; Guiro</div>
<div class="a t" style="left:786.8px;top:999px;width:185px;height:41px;background:#fff;text-align:center;font-size:17px;line-height:42px;color:#3a3a3a;-webkit-text-stroke:0.4px #fff">Claps</div>
<div class="a t" style="left:976.2px;top:999px;width:185px;height:41px;background:#fff;text-align:center;font-size:17px;line-height:42px;color:#3a3a3a;-webkit-text-stroke:0.4px #fff">Zaps &amp; Blips</div>
<div class="a" style="left:1453px;top:0;width:467px;height:52px;background:#efefef"></div>
<div class="a t" style="left:1464px;top:0;height:52px;line-height:52px;font-size:14px;color:#3a3a3a;-webkit-text-stroke:0.3px #efefef">SIMILARITY ASPECTS</div>
<svg class="a" style="left:1884px;top:18px" width="18" height="18"><path d="M3.3 2L14.7 13.4M14.7 2L3.3 13.4" stroke="#3a3a3a" stroke-width="3.7"/></svg>
<div class="a" style="left:1453px;top:52px;width:467px;height:2px;background:#e3e3e3"></div>
<div class="a" style="left:1453px;top:54px;width:467px;height:243px;background:#f8f8f8"></div>
<svg class="a" style="left:0;top:0" width="1920" height="300"><path d="M1570.00 76.50A93.50 93.50 0 0 1 1663.49 171.63L1643.49 171.28A73.50 73.50 0 0 0 1570.00 96.50Z" fill="#6fa57a" stroke="#f8f8f8" stroke-width="1.2"/><path d="M1663.49 171.63A93.50 93.50 0 0 1 1636.11 236.11L1621.97 221.97A73.50 73.50 0 0 0 1643.49 171.28Z" fill="#ebd672" stroke="#f8f8f8" stroke-width="1.2"/><path d="M1636.11 236.11A93.50 93.50 0 0 1 1499.43 231.34L1514.53 218.22A73.50 73.50 0 0 0 1621.97 221.97Z" fill="#f2a163" stroke="#f8f8f8" stroke-width="1.2"/><path d="M1499.43 231.34A93.50 93.50 0 0 1 1511.16 97.34L1523.74 112.88A73.50 73.50 0 0 0 1514.53 218.22Z" fill="#e7566b" stroke="#f8f8f8" stroke-width="1.2"/><path d="M1511.16 97.34A93.50 93.50 0 0 1 1570.00 76.50L1570.00 96.50A73.50 73.50 0 0 0 1523.74 112.88Z" fill="#5f9bd5" stroke="#f8f8f8" stroke-width="1.2"/><path d="M1506.19 89.78A102.50 102.50 0 0 1 1570.00 67.50L1570.00 73.50A96.50 96.50 0 0 0 1509.93 94.48Z" fill="#4a8fd0" stroke="#f8f8f8" stroke-width="0"/></svg>
<div class="a t" style="left:1509px;top:136px;width:120px;height:22px;line-height:22px;text-align:center;font-size:14.5px;color:#4a8fd0">Amplitude</div>
<div class="a t" style="left:1533px;top:165px;height:46px;line-height:46px;font-size:44px;color:#1a1a1a;-webkit-text-stroke:1.1px #f8f8f8">25<span style="font-size:23px;vertical-align:top;line-height:38px;margin-left:3px;color:#222;-webkit-text-stroke:0.7px #f8f8f8">%</span></div>
<div class="a t" style="left:1687px;top:83.0px;width:36px;height:28px;background:#629c6e;color:#fff;font-weight:bold;font-size:14px;line-height:28px;text-align:center">ON</div>
<div class="a t" style="left:1729px;top:83.0px;height:29px;line-height:30px;font-size:16.8px;color:#444;-webkit-text-stroke:0.45px #f8f8f8">Overall</div>
<div class="a" style="left:1818px;top:87.5px;width:87px;height:19px;background:#d9e6db"></div>
<div class="a" style="left:1818px;top:87.5px;width:51px;height:19px;background:#629c6e"></div>
<div class="a t" style="left:1687px;top:121.8px;width:36px;height:28px;background:#e9d46a;color:#fff;font-weight:bold;font-size:14px;line-height:28px;text-align:center">ON</div>
<div class="a t" style="left:1729px;top:121.8px;height:29px;line-height:30px;font-size:16.8px;color:#444;-webkit-text-stroke:0.45px #f8f8f8">Spectrum</div>
<div class="a" style="left:1818px;top:126.3px;width:87px;height:19px;background:#f7f1dc"></div>
<div class="a" style="left:1818px;top:126.3px;width:23px;height:19px;background:#e9d46a"></div>
<div class="a t" style="left:1687px;top:160.6px;width:36px;height:28px;background:#f2954f;color:#fff;font-weight:bold;font-size:14px;line-height:28px;text-align:center">ON</div>
<div class="a t" style="left:1729px;top:160.6px;height:29px;line-height:30px;font-size:16.8px;color:#444;-webkit-text-stroke:0.45px #f8f8f8">Timbre</div>
<div class="a" style="left:1818px;top:165.1px;width:87px;height:19px;background:#fae3d3"></div>
<div class="a" style="left:1818px;top:165.1px;width:53px;height:19px;background:#f2954f"></div>
<div class="a t" style="left:1687px;top:199.4px;width:36px;height:28px;background:#e44259;color:#fff;font-weight:bold;font-size:14px;line-height:28px;text-align:center">ON</div>
<div class="a t" style="left:1729px;top:199.4px;height:29px;line-height:30px;font-size:16.8px;color:#444;-webkit-text-stroke:0.45px #f8f8f8">Pitch</div>
<div class="a" style="left:1818px;top:203.9px;width:87px;height:19px;background:#f5d5da"></div>
<div class="a" style="left:1818px;top:203.9px;width:52px;height:19px;background:#e44259"></div>
<div class="a t" style="left:1687px;top:238.2px;width:36px;height:28px;background:#4a8fd0;color:#fff;font-weight:bold;font-size:14px;line-height:28px;text-align:center">ON</div>
<div class="a t" style="left:1729px;top:238.2px;height:29px;line-height:30px;font-size:16.8px;color:#444;-webkit-text-stroke:0.45px #f8f8f8">Amplitude</div>
<div class="a" style="left:1818px;top:242.7px;width:87px;height:19px;background:#d5e3f1"></div>
<div class="a" style="left:1818px;top:242.7px;width:21px;height:19px;background:#4a8fd0"></div>
<div class="a" style="left:0;top:1043px;width:1920px;height:37px;background:#651f78"></div>
<div class="a t" style="left:1500px;top:1043px;width:1405px;height:37px;line-height:37px;font-size:17px;color:#fff;text-align:right"></div>
<div class="a t" style="left:1600px;top:1043px;width:305px;height:37px;line-height:37px;font-size:17px;color:#f3eaf5;text-align:right;-webkit-text-stroke:0.3px #651f78">Similarity search: Done</div></body></html>
